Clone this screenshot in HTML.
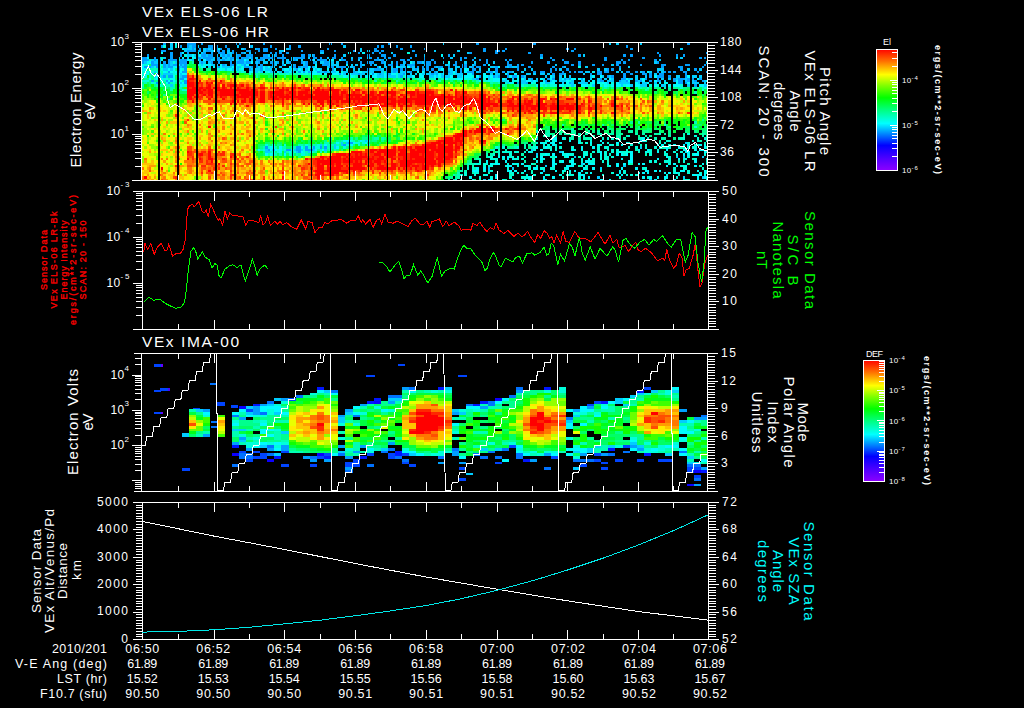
<!DOCTYPE html>
<html><head><meta charset="utf-8"><title>VEx ELS / IMA summary plot</title>
<style>
html,body{margin:0;padding:0;background:#000;}
body{width:1024px;height:708px;overflow:hidden;}
svg{display:block;}
text{font-family:"Liberation Sans",sans-serif;}
</style></head><body>
<svg width="1024" height="708" viewBox="0 0 1024 708">
<defs><linearGradient id="rb" x1="0" y1="0" x2="0" y2="1">
<stop offset="0" stop-color="#ff0000"/><stop offset="0.1" stop-color="#ff7000"/><stop offset="0.21" stop-color="#ffff00"/><stop offset="0.30" stop-color="#80ff00"/><stop offset="0.40" stop-color="#00ff00"/><stop offset="0.50" stop-color="#00ff80"/><stop offset="0.61" stop-color="#00ffff"/><stop offset="0.70" stop-color="#0080ff"/><stop offset="0.79" stop-color="#0000ff"/><stop offset="0.9" stop-color="#5000ff"/><stop offset="1" stop-color="#9000ff"/>
</linearGradient></defs>
<rect width="1024" height="708" fill="#000"/>
<g shape-rendering="crispEdges">
<path fill="#009fff" d="M142 57v7h2v-7zM144 57v4h3v-4zM144 66v2h3v-2zM147 54v3h2v-3zM147 59v2h2v-2zM149 66v2h2v-2zM151 61v5h3v-5zM151 80v2h3v-2zM154 57v4h2v-4zM154 64v2h2v-2zM156 64v4h2v-4zM156 73v2h2v-2zM156 82v2h2v-2zM158 59v2h3v-2zM161 45v3h2v-3zM161 50v2h2v-2zM163 43v2h3v-2zM163 50v2h3v-2zM163 61v7h3v-7zM163 75v3h3v-3zM166 80v2h2v-2zM168 48v2h2v-2zM168 59v9h2v-9zM168 71v2h2v-2zM168 75v3h2v-3zM168 82v2h2v-2zM170 52v9h3v-9zM170 66v2h3v-2zM170 75v3h3v-3zM170 80v2h3v-2zM173 59v2h2v-2zM173 64v2h2v-2zM175 59v2h2v-2zM175 64v2h2v-2zM177 61v3h3v-3zM177 66v5h3v-5zM180 45v3h2v-3zM180 52v5h2v-5zM180 59v7h2v-7zM180 78v2h2v-2zM182 59v5h2v-5zM182 66v2h2v-2zM182 71v2h2v-2zM182 75v5h2v-5zM184 59v14h3v-14zM184 75v3h3v-3zM184 80v4h3v-4zM187 43v5h2v-5zM187 50v4h2v-4zM189 43v2h3v-2zM189 50v2h3v-2zM192 43v9h2v-9zM194 43v5h2v-5zM194 50v2h2v-2zM196 50v2h3v-2zM196 57v2h3v-2zM199 48v2h2v-2zM199 57v4h2v-4zM201 43v2h2v-2zM201 54v3h2v-3zM201 61v3h2v-3zM203 52v7h3v-7zM206 48v4h2v-4zM206 57v4h2v-4zM208 45v3h3v-3zM208 50v2h3v-2zM208 54v7h3v-7zM211 45v5h2v-5zM211 52v7h2v-7zM211 61v3h2v-3zM215 45v7h3v-7zM215 57v4h3v-4zM218 50v4h2v-4zM218 57v7h2v-7zM218 66v2h2v-2zM220 48v2h2v-2zM220 52v2h2v-2zM222 50v7h3v-7zM222 59v2h3v-2zM222 64v2h3v-2zM225 45v3h2v-3zM225 57v2h2v-2zM227 48v2h3v-2zM227 54v3h3v-3zM230 57v9h2v-9zM232 50v4h2v-4zM232 57v2h2v-2zM232 64v2h2v-2zM234 43v2h3v-2zM234 52v2h3v-2zM237 54v5h2v-5zM237 61v3h2v-3zM239 43v2h2v-2zM239 54v3h2v-3zM239 59v5h2v-5zM241 52v2h3v-2zM241 57v7h3v-7zM244 48v2h2v-2zM244 57v2h2v-2zM244 64v4h2v-4zM246 50v2h3v-2zM246 54v5h3v-5zM246 61v3h3v-3zM246 66v2h3v-2zM249 45v3h2v-3zM249 50v2h2v-2zM249 54v3h2v-3zM249 61v3h2v-3zM249 68v3h2v-3zM251 54v5h2v-5zM251 66v2h2v-2zM253 52v2h3v-2zM253 61v3h3v-3zM256 48v2h2v-2zM256 59v2h2v-2zM256 64v4h2v-4zM258 48v4h2v-4zM258 59v5h2v-5zM260 57v4h3v-4zM260 64v7h3v-7zM263 43v2h2v-2zM263 48v4h2v-4zM263 54v5h2v-5zM265 48v4h3v-4zM265 54v5h3v-5zM265 146v3h3v-3zM268 57v2h2v-2zM268 149v2h2v-2zM270 45v3h2v-3zM270 52v2h2v-2zM270 57v2h2v-2zM270 61v3h2v-3zM270 66v2h2v-2zM272 57v2h3v-2zM272 61v5h3v-5zM275 48v2h2v-2zM275 52v5h2v-5zM277 57v2h2v-2zM277 61v3h2v-3zM279 52v2h3v-2zM279 57v2h3v-2zM282 54v7h2v-7zM282 64v2h2v-2zM284 57v2h2v-2zM286 52v2h3v-2zM286 149v2h3v-2zM289 45v5h2v-5zM289 61v3h2v-3zM289 149v2h2v-2zM291 66v2h3v-2zM294 57v4h2v-4zM294 64v4h2v-4zM296 57v2h2v-2zM296 68v3h2v-3zM296 146v5h2v-5zM298 45v3h3v-3zM298 57v2h3v-2zM298 66v2h3v-2zM298 71v2h3v-2zM298 146v7h3v-7zM301 50v2h2v-2zM301 54v5h2v-5zM301 61v3h2v-3zM303 54v5h2v-5zM303 66v2h2v-2zM303 71v2h2v-2zM305 61v7h3v-7zM305 146v5h3v-5zM308 54v3h2v-3zM308 71v2h2v-2zM308 149v2h2v-2zM310 59v2h3v-2zM310 66v2h3v-2zM310 149v2h3v-2zM313 54v5h2v-5zM313 61v3h2v-3zM313 146v3h2v-3zM315 57v2h2v-2zM317 59v2h3v-2zM317 71v2h3v-2zM320 50v2h2v-2zM320 57v4h2v-4zM320 146v3h2v-3zM322 50v2h2v-2zM322 59v2h2v-2zM322 64v2h2v-2zM324 59v7h3v-7zM324 71v2h3v-2zM324 146v3h3v-3zM327 48v2h2v-2zM327 61v5h2v-5zM329 43v2h3v-2zM329 66v2h3v-2zM332 57v2h2v-2zM332 66v5h2v-5zM334 50v2h2v-2zM334 54v5h2v-5zM339 66v2h2v-2zM339 73v2h2v-2zM341 43v2h2v-2zM341 57v4h2v-4zM341 66v5h2v-5zM343 59v2h3v-2zM343 66v2h3v-2zM343 144v2h3v-2zM346 61v3h2v-3zM348 142v2h3v-2zM351 59v2h2v-2zM351 142v2h2v-2zM353 50v2h2v-2zM353 66v2h2v-2zM353 71v2h2v-2zM358 52v2h2v-2zM358 57v2h2v-2zM358 73v2h2v-2zM360 61v7h2v-7zM367 54v3h3v-3zM367 61v3h3v-3zM367 68v3h3v-3zM370 57v2h2v-2zM370 61v5h2v-5zM372 52v2h2v-2zM372 61v3h2v-3zM372 73v2h2v-2zM374 48v4h3v-4zM374 59v2h3v-2zM374 68v3h3v-3zM377 45v3h2v-3zM377 50v2h2v-2zM377 57v4h2v-4zM377 66v5h2v-5zM379 52v2h2v-2zM379 68v3h2v-3zM379 73v2h2v-2zM381 45v3h3v-3zM381 50v2h3v-2zM381 54v3h3v-3zM381 59v5h3v-5zM384 54v5h2v-5zM386 68v5h2v-5zM388 43v2h3v-2zM388 57v2h3v-2zM388 64v2h3v-2zM388 73v2h3v-2zM391 64v2h2v-2zM393 54v3h3v-3zM393 68v5h3v-5zM396 45v3h2v-3zM396 61v5h2v-5zM396 68v3h2v-3zM400 48v2h3v-2zM400 59v2h3v-2zM400 64v2h3v-2zM400 68v3h3v-3zM400 75v3h3v-3zM403 59v2h2v-2zM403 73v2h2v-2zM405 61v3h2v-3zM405 66v5h2v-5zM407 59v2h3v-2zM407 64v2h3v-2zM410 45v3h2v-3zM410 57v2h2v-2zM410 64v4h2v-4zM410 71v2h2v-2zM412 50v2h3v-2zM412 64v2h3v-2zM415 54v3h2v-3zM415 68v3h2v-3zM417 61v3h2v-3zM417 66v2h2v-2zM419 61v3h3v-3zM422 66v5h2v-5zM424 48v2h2v-2zM424 57v7h2v-7zM426 61v10h3v-10zM429 61v5h2v-5zM431 59v2h3v-2zM431 68v3h3v-3zM431 73v2h3v-2zM434 61v3h2v-3zM434 66v2h2v-2zM434 71v2h2v-2zM436 73v2h2v-2zM438 66v2h3v-2zM441 66v2h2v-2zM443 57v2h2v-2zM448 54v3h2v-3zM448 66v2h2v-2zM448 71v2h2v-2zM453 64v2h2v-2zM455 61v5h2v-5zM460 57v4h2v-4zM460 68v5h2v-5zM462 64v4h2v-4zM464 57v2h3v-2zM464 64v4h3v-4zM467 71v2h2v-2zM469 52v2h3v-2zM469 71v2h3v-2zM472 59v2h2v-2zM472 66v9h2v-9zM474 64v2h2v-2zM474 68v3h2v-3zM476 43v2h3v-2zM476 66v2h3v-2zM476 78v2h3v-2zM479 59v2h2v-2zM479 66v2h2v-2zM479 71v2h2v-2zM479 75v3h2v-3zM481 75v3h2v-3zM483 48v4h3v-4zM483 64v2h3v-2zM486 59v5h2v-5zM488 71v2h2v-2zM490 71v2h3v-2zM493 75v3h2v-3zM495 50v4h3v-4zM495 66v7h3v-7zM498 50v2h2v-2zM498 75v3h2v-3zM500 45v3h2v-3zM500 59v2h2v-2zM500 71v2h2v-2zM502 50v2h3v-2zM502 71v2h3v-2zM505 48v2h2v-2zM505 59v2h2v-2zM505 66v2h2v-2zM507 61v5h2v-5zM507 73v5h2v-5zM509 59v2h3v-2zM509 64v4h3v-4zM509 71v2h3v-2zM512 75v3h2v-3zM514 75v3h3v-3zM517 64v7h2v-7zM517 82v2h2v-2zM521 64v2h3v-2zM521 75v3h3v-3zM526 82v2h2v-2zM528 52v2h3v-2zM528 66v2h3v-2zM531 61v3h2v-3zM531 78v2h2v-2zM533 43v2h3v-2zM533 71v2h3v-2zM538 66v2h2v-2zM540 54v3h3v-3zM540 71v2h3v-2zM543 71v2h2v-2zM545 80v2h2v-2zM547 61v3h3v-3zM547 78v2h3v-2zM550 57v2h2v-2zM550 68v5h2v-5zM552 59v2h3v-2zM552 66v2h3v-2zM552 73v2h3v-2zM552 78v2h3v-2zM555 68v3h2v-3zM557 73v2h2v-2zM559 73v2h3v-2zM562 59v2h2v-2zM562 66v2h2v-2zM562 71v4h2v-4zM564 61v3h2v-3zM564 78v2h2v-2zM566 48v2h3v-2zM566 61v3h3v-3zM566 68v3h3v-3zM569 71v2h2v-2zM569 78v2h2v-2zM569 82v2h2v-2zM571 50v2h3v-2zM571 64v2h3v-2zM574 48v2h2v-2zM574 71v2h2v-2zM576 73v2h2v-2zM576 78v2h2v-2zM578 54v3h3v-3zM578 61v5h3v-5zM578 71v2h3v-2zM581 71v2h2v-2zM581 78v2h2v-2zM590 73v2h2v-2zM592 64v2h3v-2zM597 71v4h3v-4zM600 71v4h2v-4zM600 78v4h2v-4zM602 64v2h2v-2zM602 80v2h2v-2zM604 57v4h3v-4zM604 71v2h3v-2zM607 68v5h2v-5zM607 75v3h2v-3zM611 68v3h3v-3zM611 75v3h3v-3zM614 68v3h2v-3zM616 61v5h3v-5zM619 61v3h2v-3zM619 66v2h2v-2zM619 80v2h2v-2zM621 59v2h2v-2zM621 78v2h2v-2zM623 54v3h3v-3zM623 61v3h3v-3zM623 73v7h3v-7zM626 45v3h2v-3zM626 71v2h2v-2zM626 80v2h2v-2zM628 59v2h2v-2zM628 71v2h2v-2zM630 48v2h3v-2zM630 54v3h3v-3zM630 73v2h3v-2zM633 61v3h2v-3zM633 75v3h2v-3zM633 84v3h2v-3zM635 71v2h3v-2zM635 80v2h3v-2zM640 64v2h2v-2zM640 80v2h2v-2zM642 57v2h3v-2zM642 71v4h3v-4zM645 73v2h2v-2zM645 78v2h2v-2zM649 73v5h3v-5zM649 80v2h3v-2zM652 68v3h2v-3zM652 78v6h2v-6zM654 59v2h3v-2zM657 52v2h2v-2zM657 61v3h2v-3zM657 71v2h2v-2zM657 75v7h2v-7zM659 54v3h2v-3zM659 73v5h2v-5zM659 80v2h2v-2zM661 64v4h3v-4zM661 73v5h3v-5zM664 64v2h2v-2zM664 71v2h2v-2zM668 71v2h3v-2zM668 75v3h3v-3zM671 48v2h2v-2zM671 59v2h2v-2zM671 66v2h2v-2zM673 71v2h3v-2zM673 78v4h3v-4zM676 54v3h2v-3zM678 66v2h2v-2zM678 78v6h2v-6zM680 66v5h3v-5zM680 78v6h3v-6zM683 54v3h2v-3zM683 71v2h2v-2zM683 78v2h2v-2zM685 64v2h2v-2zM685 71v7h2v-7zM685 82v2h2v-2zM687 43v2h3v-2zM687 64v2h3v-2zM687 78v4h3v-4zM690 75v3h2v-3zM692 78v2h2v-2zM694 68v3h3v-3zM694 80v2h3v-2zM694 84v3h3v-3zM697 71v2h2v-2zM699 57v2h3v-2zM699 78v2h3v-2zM702 66v2h2v-2zM702 80v2h2v-2zM704 57v2h2v-2zM704 64v2h2v-2zM706 52v2h1v-2zM706 71v2h1v-2z"/>
<path fill="#00cdff" d="M144 61v3h3v-3zM147 66v2h2v-2zM151 59v2h3v-2zM151 66v2h3v-2zM151 73v2h3v-2zM154 48v2h2v-2zM154 61v3h2v-3zM154 71v2h2v-2zM154 75v3h2v-3zM156 59v5h2v-5zM158 57v2h3v-2zM158 61v3h3v-3zM158 73v2h3v-2zM161 75v3h2v-3zM163 57v2h3v-2zM163 68v3h3v-3zM163 73v2h3v-2zM166 64v7h2v-7zM166 73v2h2v-2zM168 73v2h2v-2zM170 43v7h3v-7zM170 61v5h3v-5zM170 68v3h3v-3zM170 73v2h3v-2zM170 84v3h3v-3zM175 61v3h2v-3zM177 57v2h3v-2zM177 71v2h3v-2zM177 78v2h3v-2zM180 66v2h2v-2zM180 73v5h2v-5zM180 82v2h2v-2zM182 64v2h2v-2zM184 48v4h3v-4zM187 48v2h2v-2zM187 54v5h2v-5zM189 45v5h3v-5zM189 54v3h3v-3zM192 59v2h2v-2zM194 48v2h2v-2zM194 54v3h2v-3zM196 45v3h3v-3zM196 54v3h3v-3zM199 50v2h2v-2zM199 61v3h2v-3zM201 52v2h2v-2zM201 57v2h2v-2zM201 64v2h2v-2zM203 48v4h3v-4zM203 61v3h3v-3zM206 54v3h2v-3zM208 48v2h3v-2zM208 61v3h3v-3zM208 66v2h3v-2zM211 50v2h2v-2zM211 59v2h2v-2zM211 64v2h2v-2zM213 50v2h2v-2zM213 57v4h2v-4zM213 64v2h2v-2zM215 54v3h3v-3zM215 64v4h3v-4zM220 54v3h2v-3zM220 59v2h2v-2zM222 57v2h3v-2zM222 66v2h3v-2zM225 54v3h2v-3zM225 59v2h2v-2zM225 64v7h2v-7zM227 50v4h3v-4zM227 57v4h3v-4zM227 66v2h3v-2zM230 52v5h2v-5zM230 66v2h2v-2zM232 59v2h2v-2zM232 68v3h2v-3zM234 54v5h3v-5zM234 61v5h3v-5zM237 45v3h2v-3zM237 59v2h2v-2zM237 66v5h2v-5zM239 66v2h2v-2zM241 48v2h3v-2zM241 64v2h3v-2zM244 52v2h2v-2zM244 61v3h2v-3zM246 59v2h3v-2zM249 52v2h2v-2zM249 57v2h2v-2zM249 66v2h2v-2zM251 45v3h2v-3zM251 59v2h2v-2zM251 68v3h2v-3zM253 48v2h3v-2zM253 57v2h3v-2zM253 68v5h3v-5zM256 57v2h2v-2zM256 61v3h2v-3zM256 68v5h2v-5zM258 66v5h2v-5zM260 71v2h3v-2zM263 59v5h2v-5zM265 61v3h3v-3zM265 66v5h3v-5zM265 149v4h3v-4zM268 54v3h2v-3zM268 59v2h2v-2zM268 68v3h2v-3zM268 151v2h2v-2zM270 68v5h2v-5zM272 54v3h3v-3zM272 66v2h3v-2zM272 71v2h3v-2zM272 149v2h3v-2zM275 61v5h2v-5zM275 68v3h2v-3zM279 50v2h3v-2zM279 66v2h3v-2zM279 71v2h3v-2zM282 50v2h2v-2zM282 61v3h2v-3zM282 68v3h2v-3zM284 71v2h2v-2zM284 151v2h2v-2zM286 48v2h3v-2zM286 59v5h3v-5zM286 71v2h3v-2zM289 68v3h2v-3zM291 57v4h3v-4zM291 64v2h3v-2zM291 71v2h3v-2zM294 68v3h2v-3zM294 149v2h2v-2zM296 59v2h2v-2zM296 151v2h2v-2zM301 59v2h2v-2zM301 66v5h2v-5zM301 149v2h2v-2zM303 61v5h2v-5zM305 68v3h3v-3zM308 57v2h2v-2zM308 151v2h2v-2zM310 54v3h3v-3zM310 71v2h3v-2zM313 66v2h2v-2zM313 149v2h2v-2zM315 61v3h2v-3zM315 68v3h2v-3zM320 52v2h2v-2zM320 61v3h2v-3zM320 68v5h2v-5zM320 144v2h2v-2zM322 52v2h2v-2zM322 61v3h2v-3zM322 71v2h2v-2zM324 149v2h3v-2zM327 57v2h2v-2zM327 66v2h2v-2zM327 71v2h2v-2zM329 61v5h3v-5zM329 71v2h3v-2zM332 61v5h2v-5zM332 71v2h2v-2zM334 64v2h2v-2zM334 71v2h2v-2zM334 144v5h2v-5zM336 61v7h3v-7zM341 142v4h2v-4zM343 45v3h3v-3zM343 54v3h3v-3zM343 71v4h3v-4zM346 71v2h2v-2zM346 142v2h2v-2zM348 66v2h3v-2zM351 57v2h2v-2zM351 64v4h2v-4zM351 73v2h2v-2zM353 68v3h2v-3zM353 73v2h2v-2zM355 64v2h3v-2zM355 71v4h3v-4zM358 59v2h2v-2zM358 68v3h2v-3zM360 48v4h2v-4zM360 57v2h2v-2zM360 73v5h2v-5zM362 64v2h3v-2zM362 71v4h3v-4zM365 71v2h2v-2zM365 140v2h2v-2zM367 50v2h3v-2zM367 57v2h3v-2zM367 71v4h3v-4zM370 68v5h2v-5zM372 68v5h2v-5zM374 64v2h3v-2zM377 73v5h2v-5zM379 59v2h2v-2zM379 75v3h2v-3zM381 68v10h3v-10zM384 61v7h2v-7zM386 59v2h2v-2zM386 66v2h2v-2zM386 73v5h2v-5zM388 75v3h3v-3zM391 52v2h2v-2zM391 61v3h2v-3zM391 66v7h2v-7zM391 75v3h2v-3zM393 75v3h3v-3zM396 71v2h2v-2zM398 66v2h2v-2zM398 73v5h2v-5zM400 66v2h3v-2zM400 71v4h3v-4zM403 61v7h2v-7zM403 71v2h2v-2zM405 71v2h2v-2zM407 71v2h3v-2zM407 75v3h3v-3zM410 73v5h2v-5zM412 61v3h3v-3zM412 66v5h3v-5zM415 73v2h2v-2zM417 68v3h2v-3zM422 61v3h2v-3zM422 73v2h2v-2zM424 54v3h2v-3zM424 64v2h2v-2zM424 68v7h2v-7zM426 73v2h3v-2zM429 71v7h2v-7zM431 75v3h3v-3zM434 50v2h2v-2zM434 73v2h2v-2zM436 66v2h2v-2zM436 71v2h2v-2zM436 75v3h2v-3zM438 68v3h3v-3zM441 73v5h2v-5zM443 43v2h2v-2zM443 61v3h2v-3zM443 71v2h2v-2zM443 75v3h2v-3zM445 64v2h3v-2zM445 75v3h3v-3zM448 64v2h2v-2zM448 68v3h2v-3zM448 73v5h2v-5zM450 57v2h3v-2zM450 68v7h3v-7zM453 54v3h2v-3zM455 66v9h2v-9zM457 50v2h3v-2zM457 66v2h3v-2zM457 73v5h3v-5zM460 73v5h2v-5zM462 73v2h2v-2zM464 61v3h3v-3zM467 52v2h2v-2zM469 66v2h3v-2zM472 64v2h2v-2zM472 78v2h2v-2zM474 57v2h2v-2zM474 61v3h2v-3zM474 78v2h2v-2zM476 71v2h3v-2zM479 68v3h2v-3zM481 52v2h2v-2zM481 59v5h2v-5zM481 73v2h2v-2zM483 179v1h3v-1zM486 71v2h2v-2zM488 75v5h2v-5zM488 167v5h2v-5zM488 179v1h2v-1zM490 66v2h3v-2zM490 73v2h3v-2zM493 61v3h2v-3zM493 66v2h2v-2zM495 73v5h3v-5zM498 73v2h2v-2zM500 75v3h2v-3zM500 80v2h2v-2zM502 80v2h3v-2zM505 78v4h2v-4zM507 66v2h2v-2zM507 71v2h2v-2zM507 82v2h2v-2zM512 66v2h2v-2zM512 71v2h2v-2zM512 78v2h2v-2zM512 167v3h2v-3zM514 66v2h3v-2zM519 78v2h2v-2zM521 71v2h3v-2zM521 80v4h3v-4zM524 68v3h2v-3zM524 75v9h2v-9zM526 73v2h2v-2zM528 73v2h3v-2zM528 78v2h3v-2zM531 68v3h2v-3zM531 80v2h2v-2zM531 149v2h2v-2zM533 73v2h3v-2zM536 78v4h2v-4zM536 153v3h2v-3zM538 57v2h2v-2zM538 75v3h2v-3zM538 80v4h2v-4zM538 176v3h2v-3zM540 57v2h3v-2zM540 73v2h3v-2zM543 73v2h2v-2zM543 78v2h2v-2zM543 170v2h2v-2zM545 75v3h2v-3zM545 82v2h2v-2zM545 165v2h2v-2zM547 73v2h3v-2zM547 82v2h3v-2zM550 80v2h2v-2zM552 75v3h3v-3zM555 64v2h2v-2zM555 80v2h2v-2zM557 75v5h2v-5zM557 82v2h2v-2zM559 68v3h3v-3zM559 75v7h3v-7zM559 151v2h3v-2zM562 80v4h2v-4zM564 66v2h2v-2zM564 73v2h2v-2zM564 80v2h2v-2zM566 78v2h3v-2zM569 75v3h2v-3zM571 80v7h3v-7zM574 156v2h2v-2zM574 179v1h2v-1zM576 68v3h2v-3zM576 75v3h2v-3zM576 82v2h2v-2zM578 82v2h3v-2zM581 80v4h2v-4zM581 163v2h2v-2zM583 54v3h2v-3zM583 73v2h2v-2zM583 80v4h2v-4zM585 66v2h3v-2zM585 71v2h3v-2zM585 82v2h3v-2zM588 71v2h2v-2zM588 80v2h2v-2zM590 75v5h2v-5zM592 84v3h3v-3zM595 75v3h2v-3zM595 84v3h2v-3zM597 68v3h3v-3zM597 78v4h3v-4zM597 176v3h3v-3zM600 167v3h2v-3zM602 75v3h2v-3zM604 68v3h3v-3zM604 78v2h3v-2zM607 80v4h2v-4zM609 43v2h2v-2zM609 75v3h2v-3zM609 80v2h2v-2zM611 64v2h3v-2zM611 78v4h3v-4zM616 43v2h3v-2zM616 71v2h3v-2zM619 68v3h2v-3zM619 82v2h2v-2zM621 71v2h2v-2zM621 80v7h2v-7zM623 80v4h3v-4zM623 165v2h3v-2zM623 179v1h3v-1zM626 82v2h2v-2zM628 66v2h2v-2zM628 78v2h2v-2zM628 82v2h2v-2zM630 78v2h3v-2zM630 84v3h3v-3zM633 59v2h2v-2zM633 82v2h2v-2zM635 75v5h3v-5zM638 80v4h2v-4zM640 43v2h2v-2zM640 71v2h2v-2zM640 78v2h2v-2zM640 84v3h2v-3zM640 140v2h2v-2zM640 146v3h2v-3zM642 82v5h3v-5zM645 75v3h2v-3zM645 82v5h2v-5zM649 71v2h3v-2zM649 179v1h3v-1zM654 61v3h3v-3zM654 73v2h3v-2zM654 82v2h3v-2zM657 68v3h2v-3zM659 59v2h2v-2zM659 68v3h2v-3zM661 68v5h3v-5zM661 78v2h3v-2zM661 84v3h3v-3zM664 80v2h2v-2zM664 84v3h2v-3zM668 78v2h3v-2zM671 82v5h2v-5zM671 174v2h2v-2zM671 179v1h2v-1zM676 57v2h2v-2zM676 75v5h2v-5zM676 156v2h2v-2zM678 75v3h2v-3zM680 48v2h3v-2zM680 57v2h3v-2zM683 156v2h2v-2zM683 176v3h2v-3zM685 78v4h2v-4zM685 142v2h2v-2zM687 68v3h3v-3zM687 84v3h3v-3zM690 78v2h2v-2zM692 75v3h2v-3zM692 80v4h2v-4zM694 75v3h3v-3zM694 82v2h3v-2zM697 82v2h2v-2zM699 68v3h3v-3zM699 75v3h3v-3zM702 156v2h2v-2zM702 176v3h2v-3zM704 80v7h2v-7zM706 61v3h1v-3zM706 84v3h1v-3z"/>
<path fill="#00fbff" d="M142 64v7h2v-7zM144 68v3h3v-3zM144 75v3h3v-3zM147 57v2h2v-2zM147 61v3h2v-3zM147 71v4h2v-4zM149 61v3h2v-3zM149 78v2h2v-2zM156 75v5h2v-5zM158 64v4h3v-4zM161 52v2h2v-2zM161 78v4h2v-4zM163 71v2h3v-2zM166 82v2h2v-2zM168 68v3h2v-3zM168 80v2h2v-2zM170 71v2h3v-2zM170 78v2h3v-2zM173 66v5h2v-5zM173 75v7h2v-7zM175 43v2h2v-2zM175 66v2h2v-2zM175 71v2h2v-2zM177 64v2h3v-2zM177 73v2h3v-2zM180 68v5h2v-5zM180 80v2h2v-2zM180 84v3h2v-3zM182 48v2h2v-2zM182 52v2h2v-2zM182 57v2h2v-2zM182 73v2h2v-2zM182 82v2h2v-2zM184 73v2h3v-2zM184 78v2h3v-2zM187 59v2h2v-2zM189 59v2h3v-2zM192 54v5h2v-5zM194 57v2h2v-2zM196 52v2h3v-2zM196 59v2h3v-2zM199 54v3h2v-3zM201 66v2h2v-2zM203 59v2h3v-2zM203 66v2h3v-2zM206 64v2h2v-2zM208 64v2h3v-2zM213 66v2h2v-2zM218 48v2h2v-2zM220 64v7h2v-7zM227 68v3h3v-3zM230 68v3h2v-3zM232 66v2h2v-2zM234 59v2h3v-2zM234 66v5h3v-5zM237 64v2h2v-2zM241 68v3h3v-3zM244 59v2h2v-2zM246 64v2h3v-2zM249 71v2h2v-2zM251 61v3h2v-3zM251 71v2h2v-2zM258 149v2h2v-2zM263 66v5h2v-5zM265 153v3h3v-3zM268 66v2h2v-2zM268 71v2h2v-2zM270 146v5h2v-5zM270 153v3h2v-3zM272 59v2h3v-2zM272 146v3h3v-3zM275 149v2h2v-2zM277 71v2h2v-2zM279 146v7h3v-7zM284 64v2h2v-2zM284 68v3h2v-3zM284 153v3h2v-3zM286 68v3h3v-3zM289 66v2h2v-2zM289 71v2h2v-2zM289 151v2h2v-2zM291 68v3h3v-3zM298 68v3h3v-3zM301 71v2h2v-2zM301 146v3h2v-3zM301 151v2h2v-2zM305 71v2h3v-2zM308 66v5h2v-5zM310 73v2h3v-2zM313 59v2h2v-2zM313 68v7h2v-7zM315 64v4h2v-4zM315 71v4h2v-4zM315 149v2h2v-2zM317 68v3h3v-3zM320 73v2h2v-2zM322 149v2h2v-2zM324 73v2h3v-2zM324 144v2h3v-2zM327 68v3h2v-3zM329 59v2h3v-2zM332 59v2h2v-2zM332 73v2h2v-2zM334 68v3h2v-3zM334 73v2h2v-2zM336 71v4h3v-4zM336 142v2h3v-2zM336 146v3h3v-3zM339 59v2h2v-2zM341 73v2h2v-2zM343 75v3h3v-3zM343 140v2h3v-2zM346 64v2h2v-2zM346 68v3h2v-3zM346 140v2h2v-2zM348 52v2h3v-2zM348 73v2h3v-2zM348 140v2h3v-2zM351 75v3h2v-3zM351 144v2h2v-2zM353 142v2h2v-2zM358 71v2h2v-2zM360 71v2h2v-2zM360 140v2h2v-2zM362 52v2h3v-2zM365 75v3h2v-3zM365 142v2h2v-2zM367 75v3h3v-3zM370 73v2h2v-2zM372 75v3h2v-3zM374 73v5h3v-5zM379 66v2h2v-2zM384 73v5h2v-5zM391 73v2h2v-2zM393 73v2h3v-2zM396 66v2h2v-2zM405 73v5h2v-5zM407 66v2h3v-2zM410 61v3h2v-3zM412 75v3h3v-3zM417 71v2h2v-2zM419 73v5h3v-5zM422 71v2h2v-2zM422 75v3h2v-3zM434 75v3h2v-3zM438 73v5h3v-5zM441 54v3h2v-3zM441 68v3h2v-3zM443 68v3h2v-3zM443 73v2h2v-2zM445 78v2h3v-2zM448 61v3h2v-3zM450 75v3h3v-3zM453 71v2h2v-2zM455 179v1h2v-1zM457 78v2h3v-2zM460 78v2h2v-2zM462 75v5h2v-5zM464 68v5h3v-5zM464 75v3h3v-3zM467 68v3h2v-3zM467 73v5h2v-5zM469 73v5h3v-5zM469 176v3h3v-3zM472 170v2h2v-2zM472 179v1h2v-1zM474 170v2h2v-2zM476 75v3h3v-3zM476 167v5h3v-5zM479 80v2h2v-2zM481 80v2h2v-2zM481 163v2h2v-2zM481 167v3h2v-3zM483 73v5h3v-5zM483 167v3h3v-3zM486 75v3h2v-3zM486 160v3h2v-3zM486 174v2h2v-2zM488 64v2h2v-2zM488 68v3h2v-3zM488 80v2h2v-2zM490 75v3h3v-3zM490 163v2h3v-2zM490 179v1h3v-1zM493 71v2h2v-2zM493 78v4h2v-4zM495 78v4h3v-4zM495 163v2h3v-2zM495 174v5h3v-5zM498 66v2h2v-2zM498 78v4h2v-4zM498 156v2h2v-2zM498 163v2h2v-2zM500 78v2h2v-2zM500 165v5h2v-5zM502 78v2h3v-2zM502 156v2h3v-2zM505 73v2h2v-2zM505 160v3h2v-3zM507 80v2h2v-2zM507 156v4h2v-4zM507 165v2h2v-2zM507 170v2h2v-2zM509 75v3h3v-3zM509 82v2h3v-2zM509 165v2h3v-2zM509 170v2h3v-2zM512 80v4h2v-4zM512 158v2h2v-2zM512 163v2h2v-2zM512 179v1h2v-1zM514 73v2h3v-2zM514 170v2h3v-2zM517 75v7h2v-7zM517 163v2h2v-2zM519 82v2h2v-2zM519 153v3h2v-3zM519 163v2h2v-2zM521 78v2h3v-2zM521 163v2h3v-2zM524 170v2h2v-2zM524 179v1h2v-1zM526 80v2h2v-2zM526 165v2h2v-2zM528 80v2h3v-2zM528 151v2h3v-2zM528 176v3h3v-3zM531 82v2h2v-2zM533 80v2h3v-2zM533 167v3h3v-3zM536 84v3h2v-3zM536 146v3h2v-3zM536 160v3h2v-3zM536 167v3h2v-3zM538 78v2h2v-2zM538 144v5h2v-5zM538 156v2h2v-2zM538 170v2h2v-2zM538 179v1h2v-1zM540 78v2h3v-2zM540 82v2h3v-2zM540 142v2h3v-2zM540 149v2h3v-2zM540 156v4h3v-4zM540 172v2h3v-2zM543 80v4h2v-4zM543 176v4h2v-4zM545 142v2h2v-2zM545 146v3h2v-3zM545 153v3h2v-3zM545 179v1h2v-1zM547 140v2h3v-2zM550 75v5h2v-5zM550 82v2h2v-2zM550 142v2h2v-2zM552 80v4h3v-4zM552 137v3h3v-3zM552 142v4h3v-4zM552 153v3h3v-3zM552 160v7h3v-7zM552 176v3h3v-3zM555 137v5h2v-5zM555 156v2h2v-2zM555 170v2h2v-2zM557 80v2h2v-2zM557 151v2h2v-2zM557 160v3h2v-3zM557 170v4h2v-4zM559 84v3h3v-3zM559 142v2h3v-2zM559 174v2h3v-2zM562 78v2h2v-2zM562 84v3h2v-3zM562 137v3h2v-3zM562 151v5h2v-5zM562 160v3h2v-3zM562 170v2h2v-2zM564 75v3h2v-3zM566 80v4h3v-4zM566 153v5h3v-5zM566 165v5h3v-5zM569 140v2h2v-2zM569 165v2h2v-2zM569 170v2h2v-2zM571 78v2h3v-2zM571 149v2h3v-2zM571 160v7h3v-7zM574 78v2h2v-2zM574 170v2h2v-2zM576 84v3h2v-3zM576 142v2h2v-2zM576 149v2h2v-2zM576 163v2h2v-2zM576 170v2h2v-2zM576 176v3h2v-3zM578 78v2h3v-2zM578 142v2h3v-2zM578 172v4h3v-4zM581 84v3h2v-3zM581 146v5h2v-5zM581 170v2h2v-2zM581 174v2h2v-2zM583 78v2h2v-2zM583 84v3h2v-3zM583 156v2h2v-2zM583 163v2h2v-2zM583 167v3h2v-3zM583 174v5h2v-5zM585 84v3h3v-3zM585 160v3h3v-3zM588 160v5h2v-5zM588 176v3h2v-3zM590 142v2h2v-2zM590 156v2h2v-2zM590 163v2h2v-2zM590 172v2h2v-2zM592 71v2h3v-2zM592 75v3h3v-3zM592 80v4h3v-4zM592 146v3h3v-3zM592 163v2h3v-2zM592 167v3h3v-3zM595 80v4h2v-4zM595 144v2h2v-2zM595 160v3h2v-3zM595 165v2h2v-2zM595 172v2h2v-2zM595 176v3h2v-3zM597 82v2h3v-2zM597 144v2h3v-2zM600 75v3h2v-3zM600 140v2h2v-2zM600 151v5h2v-5zM600 179v1h2v-1zM602 82v2h2v-2zM602 142v2h2v-2zM602 179v1h2v-1zM604 82v5h3v-5zM607 163v2h2v-2zM609 78v2h2v-2zM609 144v2h2v-2zM609 165v2h2v-2zM609 179v1h2v-1zM611 84v3h3v-3zM614 78v9h2v-9zM614 160v3h2v-3zM614 165v2h2v-2zM616 82v5h3v-5zM616 142v2h3v-2zM616 153v3h3v-3zM616 163v4h3v-4zM616 174v2h3v-2zM619 84v3h2v-3zM619 151v2h2v-2zM619 170v4h2v-4zM621 144v2h2v-2zM621 153v3h2v-3zM621 158v2h2v-2zM621 167v3h2v-3zM621 174v2h2v-2zM623 163v2h3v-2zM626 78v2h2v-2zM626 84v3h2v-3zM626 142v2h2v-2zM626 153v3h2v-3zM628 80v2h2v-2zM628 84v3h2v-3zM628 160v3h2v-3zM630 151v12h3v-12zM633 78v4h2v-4zM633 144v7h2v-7zM633 163v4h2v-4zM635 82v5h3v-5zM635 167v3h3v-3zM638 84v3h2v-3zM638 149v2h2v-2zM638 163v2h2v-2zM638 172v2h2v-2zM638 179v1h2v-1zM642 78v4h3v-4zM642 137v5h3v-5zM642 163v2h3v-2zM642 172v2h3v-2zM642 176v3h3v-3zM645 151v2h2v-2zM645 170v2h2v-2zM647 71v2h2v-2zM647 82v2h2v-2zM647 149v2h2v-2zM647 170v4h2v-4zM649 176v3h3v-3zM652 73v2h2v-2zM652 144v2h2v-2zM652 156v2h2v-2zM652 167v3h2v-3zM654 75v3h3v-3zM654 80v2h3v-2zM654 84v3h3v-3zM654 170v2h3v-2zM654 179v1h3v-1zM657 144v2h2v-2zM657 151v2h2v-2zM657 158v2h2v-2zM657 176v3h2v-3zM659 82v2h2v-2zM659 146v3h2v-3zM659 170v2h2v-2zM661 144v2h3v-2zM664 172v2h2v-2zM664 176v3h2v-3zM666 82v2h2v-2zM666 146v5h2v-5zM666 156v2h2v-2zM666 165v2h2v-2zM666 176v3h2v-3zM668 84v3h3v-3zM668 172v2h3v-2zM671 144v2h2v-2zM671 149v4h2v-4zM671 165v2h2v-2zM673 84v3h3v-3zM673 144v2h3v-2zM673 163v2h3v-2zM673 179v1h3v-1zM676 80v7h2v-7zM676 165v2h2v-2zM676 172v2h2v-2zM678 84v3h2v-3zM678 146v3h2v-3zM678 158v2h2v-2zM680 170v2h3v-2zM683 144v2h2v-2zM683 149v2h2v-2zM683 153v3h2v-3zM683 170v2h2v-2zM685 149v4h2v-4zM685 165v2h2v-2zM687 75v3h3v-3zM687 82v2h3v-2zM687 144v2h3v-2zM687 151v5h3v-5zM690 151v2h2v-2zM692 174v2h2v-2zM694 149v2h3v-2zM694 153v3h3v-3zM694 160v3h3v-3zM694 165v2h3v-2zM694 174v2h3v-2zM697 78v2h2v-2zM697 153v3h2v-3zM697 170v2h2v-2zM697 174v6h2v-6zM699 84v3h3v-3zM699 144v2h3v-2zM699 149v2h3v-2zM699 174v2h3v-2zM702 84v3h2v-3zM702 149v2h2v-2zM702 163v2h2v-2zM704 144v5h2v-5zM704 151v2h2v-2zM704 170v9h2v-9zM706 80v2h1v-2zM706 176v4h1v-4z"/>
<path fill="#00ffdb" d="M142 71v7h2v-7zM142 80v2h2v-2zM144 64v2h3v-2zM144 71v4h3v-4zM144 80v2h3v-2zM147 64v2h2v-2zM147 80v2h2v-2zM151 71v2h3v-2zM151 82v2h3v-2zM154 66v2h2v-2zM154 78v2h2v-2zM154 82v2h2v-2zM156 71v2h2v-2zM158 71v2h3v-2zM158 75v3h3v-3zM158 84v3h3v-3zM161 59v2h2v-2zM161 64v2h2v-2zM161 68v3h2v-3zM161 82v2h2v-2zM163 45v3h3v-3zM163 78v2h3v-2zM166 71v2h2v-2zM166 78v2h2v-2zM173 61v3h2v-3zM173 71v4h2v-4zM173 82v2h2v-2zM175 45v3h2v-3zM175 73v2h2v-2zM177 59v2h3v-2zM177 75v3h3v-3zM177 82v2h3v-2zM182 68v3h2v-3zM182 84v3h2v-3zM182 89v2h2v-2zM184 54v3h3v-3zM184 84v3h3v-3zM184 89v2h3v-2zM196 64v2h3v-2zM199 64v2h2v-2zM203 64v2h3v-2zM215 68v3h3v-3zM218 68v3h2v-3zM222 68v3h3v-3zM237 71v2h2v-2zM239 64v2h2v-2zM239 68v3h2v-3zM241 66v2h3v-2zM241 71v2h3v-2zM249 73v2h2v-2zM258 71v2h2v-2zM263 149v2h2v-2zM265 71v2h3v-2zM265 144v2h3v-2zM268 146v3h2v-3zM272 144v2h3v-2zM272 151v5h3v-5zM277 149v4h2v-4zM284 144v2h2v-2zM284 149v2h2v-2zM286 73v2h3v-2zM289 153v3h2v-3zM291 149v2h3v-2zM294 151v2h2v-2zM296 71v2h2v-2zM298 73v2h3v-2zM301 73v2h2v-2zM301 153v3h2v-3zM303 73v2h2v-2zM303 149v7h2v-7zM305 73v2h3v-2zM305 144v2h3v-2zM308 146v3h2v-3zM310 146v3h3v-3zM310 151v2h3v-2zM315 146v3h2v-3zM317 73v2h3v-2zM317 144v5h3v-5zM320 151v2h2v-2zM341 71v2h2v-2zM343 146v3h3v-3zM346 75v3h2v-3zM346 144v2h2v-2zM348 144v2h3v-2zM351 140v2h2v-2zM353 75v3h2v-3zM355 142v2h3v-2zM358 142v4h2v-4zM362 140v4h3v-4zM367 140v2h3v-2zM367 144v2h3v-2zM396 73v5h2v-5zM407 52v2h3v-2zM422 78v2h2v-2zM434 78v2h2v-2zM450 78v2h3v-2zM453 73v2h2v-2zM453 78v2h2v-2zM455 78v2h2v-2zM460 174v2h2v-2zM460 179v1h2v-1zM462 174v2h2v-2zM464 78v2h3v-2zM464 172v4h3v-4zM467 78v2h2v-2zM467 167v3h2v-3zM469 78v2h3v-2zM472 75v3h2v-3zM472 167v3h2v-3zM474 163v2h2v-2zM474 172v4h2v-4zM476 163v2h3v-2zM476 172v2h3v-2zM479 160v5h2v-5zM479 176v3h2v-3zM481 78v2h2v-2zM481 160v3h2v-3zM481 172v2h2v-2zM483 78v4h3v-4zM483 163v4h3v-4zM483 170v2h3v-2zM483 174v2h3v-2zM486 80v2h2v-2zM486 163v2h2v-2zM488 156v2h2v-2zM488 165v2h2v-2zM490 78v4h3v-4zM490 156v4h3v-4zM490 165v2h3v-2zM490 170v2h3v-2zM490 176v3h3v-3zM493 149v2h2v-2zM493 153v3h2v-3zM493 158v2h2v-2zM493 163v2h2v-2zM495 146v3h3v-3zM495 158v5h3v-5zM498 151v5h2v-5zM500 151v2h2v-2zM500 160v5h2v-5zM500 172v2h2v-2zM500 176v3h2v-3zM502 146v3h3v-3zM502 151v2h3v-2zM502 158v2h3v-2zM502 179v1h3v-1zM505 82v2h2v-2zM505 151v2h2v-2zM505 165v2h2v-2zM507 151v2h2v-2zM507 163v2h2v-2zM507 167v3h2v-3zM509 151v7h3v-7zM509 172v2h3v-2zM509 176v3h3v-3zM512 156v2h2v-2zM512 172v4h2v-4zM514 80v2h3v-2zM514 151v2h3v-2zM514 158v2h3v-2zM514 163v2h3v-2zM517 146v3h2v-3zM517 151v2h2v-2zM517 156v4h2v-4zM517 165v2h2v-2zM517 172v2h2v-2zM519 73v2h2v-2zM519 146v5h2v-5zM519 156v2h2v-2zM519 165v2h2v-2zM519 170v4h2v-4zM519 179v1h2v-1zM521 84v3h3v-3zM521 158v2h3v-2zM521 172v2h3v-2zM521 176v3h3v-3zM524 151v2h2v-2zM524 165v2h2v-2zM524 176v3h2v-3zM526 149v2h2v-2zM526 174v5h2v-5zM528 165v5h3v-5zM528 179v1h3v-1zM531 151v2h2v-2zM531 163v2h2v-2zM531 172v2h2v-2zM531 176v4h2v-4zM533 82v2h3v-2zM533 146v5h3v-5zM533 158v2h3v-2zM533 174v2h3v-2zM536 130v3h2v-3zM536 137v3h2v-3zM536 142v2h2v-2zM536 156v2h2v-2zM536 165v2h2v-2zM538 174v2h2v-2zM540 84v3h3v-3zM540 153v3h3v-3zM540 160v3h3v-3zM540 167v3h3v-3zM543 142v7h2v-7zM543 153v3h2v-3zM543 158v2h2v-2zM543 167v3h2v-3zM545 84v3h2v-3zM545 174v2h2v-2zM547 144v5h3v-5zM547 153v3h3v-3zM547 174v2h3v-2zM550 84v3h2v-3zM550 146v5h2v-5zM550 156v2h2v-2zM550 167v3h2v-3zM552 84v3h3v-3zM552 135v2h3v-2zM552 140v2h3v-2zM552 158v2h3v-2zM552 167v3h3v-3zM555 84v3h2v-3zM555 144v7h2v-7zM555 163v2h2v-2zM557 149v2h2v-2zM557 165v2h2v-2zM559 146v3h3v-3zM559 160v3h3v-3zM562 176v3h2v-3zM564 137v3h2v-3zM564 153v5h2v-5zM564 167v5h2v-5zM566 84v3h3v-3zM566 174v2h3v-2zM569 80v2h2v-2zM569 84v3h2v-3zM569 153v3h2v-3zM569 160v3h2v-3zM569 172v4h2v-4zM571 146v3h3v-3zM571 153v3h3v-3zM571 158v2h3v-2zM571 174v2h3v-2zM574 84v3h2v-3zM574 149v2h2v-2zM574 163v2h2v-2zM576 80v2h2v-2zM576 133v2h2v-2zM576 137v3h2v-3zM576 165v5h2v-5zM578 66v2h3v-2zM578 140v2h3v-2zM578 176v4h3v-4zM581 158v5h2v-5zM581 165v2h2v-2zM581 179v1h2v-1zM583 151v5h2v-5zM583 179v1h2v-1zM585 142v2h3v-2zM585 151v5h3v-5zM585 165v5h3v-5zM585 172v2h3v-2zM588 158v2h2v-2zM590 82v5h2v-5zM590 137v5h2v-5zM590 144v2h2v-2zM590 160v3h2v-3zM592 151v2h3v-2zM592 158v5h3v-5zM595 137v3h2v-3zM595 151v5h2v-5zM595 170v2h2v-2zM595 179v1h2v-1zM597 146v7h3v-7zM600 82v5h2v-5zM600 144v2h2v-2zM600 156v4h2v-4zM602 137v3h2v-3zM602 160v3h2v-3zM602 174v2h2v-2zM604 146v3h3v-3zM604 151v9h3v-9zM607 84v3h2v-3zM607 137v3h2v-3zM607 142v2h2v-2zM607 146v5h2v-5zM607 156v7h2v-7zM609 153v3h2v-3zM611 82v2h3v-2zM611 137v3h3v-3zM611 144v2h3v-2zM611 149v4h3v-4zM611 156v2h3v-2zM611 172v2h3v-2zM614 140v2h2v-2zM614 167v3h2v-3zM614 174v2h2v-2zM616 144v2h3v-2zM616 149v4h3v-4zM619 140v2h2v-2zM619 176v3h2v-3zM621 151v2h2v-2zM623 84v3h3v-3zM623 151v5h3v-5zM623 170v4h3v-4zM626 149v4h2v-4zM626 174v2h2v-2zM628 135v2h2v-2zM628 142v2h2v-2zM628 146v3h2v-3zM628 163v2h2v-2zM630 144v2h3v-2zM630 174v2h3v-2zM633 151v5h2v-5zM633 158v2h2v-2zM633 170v4h2v-4zM633 176v3h2v-3zM635 146v3h3v-3zM635 174v2h3v-2zM638 142v2h2v-2zM640 137v3h2v-3zM642 167v3h3v-3zM645 140v2h2v-2zM645 144v5h2v-5zM645 167v3h2v-3zM647 87v2h2v-2zM647 137v3h2v-3zM647 151v2h2v-2zM647 176v3h2v-3zM649 84v3h3v-3zM649 149v7h3v-7zM649 160v3h3v-3zM652 84v3h2v-3zM652 140v4h2v-4zM652 146v3h2v-3zM652 153v3h2v-3zM652 172v2h2v-2zM654 146v3h3v-3zM654 160v3h3v-3zM657 84v3h2v-3zM657 149v2h2v-2zM659 133v2h2v-2zM659 142v2h2v-2zM664 82v2h2v-2zM664 124v2h2v-2zM664 142v2h2v-2zM664 146v3h2v-3zM664 151v5h2v-5zM664 160v3h2v-3zM664 179v1h2v-1zM666 140v2h2v-2zM666 153v3h2v-3zM666 160v3h2v-3zM666 174v2h2v-2zM668 140v2h3v-2zM668 144v5h3v-5zM668 156v9h3v-9zM671 137v3h2v-3zM671 146v3h2v-3zM671 158v2h2v-2zM671 170v2h2v-2zM673 151v2h3v-2zM673 167v7h3v-7zM676 149v2h2v-2zM676 153v3h2v-3zM676 176v3h2v-3zM678 172v4h2v-4zM680 84v5h3v-5zM680 151v2h3v-2zM680 165v2h3v-2zM683 137v3h2v-3zM683 146v3h2v-3zM683 158v5h2v-5zM683 165v5h2v-5zM683 179v1h2v-1zM685 158v2h2v-2zM685 167v3h2v-3zM685 179v1h2v-1zM687 133v2h3v-2zM687 142v2h3v-2zM687 146v3h3v-3zM687 156v2h3v-2zM687 170v4h3v-4zM687 179v1h3v-1zM690 149v2h2v-2zM690 163v2h2v-2zM690 167v3h2v-3zM692 140v2h2v-2zM692 146v3h2v-3zM692 153v3h2v-3zM694 126v2h3v-2zM694 135v2h3v-2zM694 144v5h3v-5zM694 158v2h3v-2zM697 87v2h2v-2zM697 137v5h2v-5zM697 144v2h2v-2zM697 151v2h2v-2zM699 172v2h3v-2zM702 89v2h2v-2zM702 167v3h2v-3zM704 87v2h2v-2zM704 137v3h2v-3zM704 153v3h2v-3zM706 137v5h1v-5zM706 151v2h1v-2zM706 158v7h1v-7zM706 170v4h1v-4z"/>
<path fill="#00ffb4" d="M142 84v3h2v-3zM144 82v2h3v-2zM149 59v2h2v-2zM149 68v5h2v-5zM149 75v3h2v-3zM151 68v3h3v-3zM154 68v3h2v-3zM156 68v3h2v-3zM156 84v3h2v-3zM158 68v3h3v-3zM158 78v4h3v-4zM161 57v2h2v-2zM161 71v4h2v-4zM161 84v3h2v-3zM163 80v2h3v-2zM166 75v3h2v-3zM166 84v3h2v-3zM168 78v2h2v-2zM168 84v3h2v-3zM170 82v2h3v-2zM170 87v4h3v-4zM173 84v5h2v-5zM175 80v2h2v-2zM180 87v2h2v-2zM182 80v2h2v-2zM192 61v3h2v-3zM199 66v2h2v-2zM239 71v2h2v-2zM244 71v2h2v-2zM256 73v5h2v-5zM260 149v2h3v-2zM263 146v3h2v-3zM268 153v3h2v-3zM270 151v2h2v-2zM272 73v2h3v-2zM275 73v2h2v-2zM275 146v3h2v-3zM275 153v3h2v-3zM279 73v2h3v-2zM279 153v3h3v-3zM282 73v2h2v-2zM282 146v5h2v-5zM284 73v2h2v-2zM284 146v3h2v-3zM286 151v2h3v-2zM289 73v2h2v-2zM291 73v2h3v-2zM291 146v3h3v-3zM291 151v5h3v-5zM294 73v2h2v-2zM294 146v3h2v-3zM296 73v2h2v-2zM296 153v3h2v-3zM298 144v2h3v-2zM301 144v2h2v-2zM303 146v3h2v-3zM305 151v5h3v-5zM308 73v2h2v-2zM308 144v2h2v-2zM313 144v2h2v-2zM313 151v2h2v-2zM315 144v2h2v-2zM315 151v2h2v-2zM320 149v2h2v-2zM324 142v2h3v-2zM324 151v2h3v-2zM327 142v7h2v-7zM329 144v7h3v-7zM332 144v2h2v-2zM334 149v2h2v-2zM336 144v2h3v-2zM339 75v3h2v-3zM339 142v2h2v-2zM341 75v3h2v-3zM341 140v2h2v-2zM348 75v5h3v-5zM351 137v3h2v-3zM353 140v2h2v-2zM355 75v3h3v-3zM358 140v2h2v-2zM367 78v2h3v-2zM374 80v2h3v-2zM374 137v3h3v-3zM377 137v3h2v-3zM381 137v3h3v-3zM384 71v2h2v-2zM396 80v2h2v-2zM403 75v3h2v-3zM417 78v2h2v-2zM419 78v2h3v-2zM429 78v2h2v-2zM431 78v2h3v-2zM438 80v2h3v-2zM441 78v2h2v-2zM448 78v2h2v-2zM448 179v1h2v-1zM453 174v2h2v-2zM453 179v1h2v-1zM457 172v7h3v-7zM460 170v2h2v-2zM462 167v5h2v-5zM464 170v2h3v-2zM467 163v4h2v-4zM469 163v2h3v-2zM472 163v4h2v-4zM472 172v2h2v-2zM474 167v3h2v-3zM476 80v2h3v-2zM476 158v2h3v-2zM479 158v2h2v-2zM479 179v1h2v-1zM481 156v4h2v-4zM481 176v3h2v-3zM486 153v5h2v-5zM488 172v2h2v-2zM490 82v2h3v-2zM490 149v2h3v-2zM490 153v3h3v-3zM495 151v2h3v-2zM498 82v2h2v-2zM498 146v5h2v-5zM502 84v3h3v-3zM505 149v2h2v-2zM505 179v1h2v-1zM509 174v2h3v-2zM514 146v3h3v-3zM517 84v3h2v-3zM519 84v3h2v-3zM521 153v3h3v-3zM524 84v3h2v-3zM524 144v5h2v-5zM524 156v2h2v-2zM524 160v3h2v-3zM526 84v3h2v-3zM528 144v2h3v-2zM531 146v3h2v-3zM531 170v2h2v-2zM533 144v2h3v-2zM533 163v2h3v-2zM536 135v2h2v-2zM538 133v2h2v-2zM543 84v3h2v-3zM543 135v2h2v-2zM545 133v4h2v-4zM545 140v2h2v-2zM547 84v3h3v-3zM547 130v7h3v-7zM552 156v2h3v-2zM557 84v3h2v-3zM557 130v5h2v-5zM557 137v3h2v-3zM559 133v2h3v-2zM562 124v2h2v-2zM562 172v2h2v-2zM564 84v3h2v-3zM564 133v2h2v-2zM566 133v2h3v-2zM569 137v3h2v-3zM571 128v5h3v-5zM571 135v5h3v-5zM574 133v2h2v-2zM576 146v3h2v-3zM578 133v7h3v-7zM578 156v2h3v-2zM578 165v2h3v-2zM581 142v2h2v-2zM583 135v5h2v-5zM585 133v2h3v-2zM585 137v3h3v-3zM588 84v3h2v-3zM588 130v3h2v-3zM588 137v3h2v-3zM590 133v2h2v-2zM590 153v3h2v-3zM592 135v2h3v-2zM595 133v2h2v-2zM597 130v5h3v-5zM600 133v4h2v-4zM600 170v2h2v-2zM602 84v3h2v-3zM602 124v2h2v-2zM604 87v2h3v-2zM607 165v2h2v-2zM609 84v3h2v-3zM609 133v2h2v-2zM611 133v2h3v-2zM614 133v2h2v-2zM616 135v5h3v-5zM619 133v7h2v-7zM623 137v3h3v-3zM626 135v2h2v-2zM628 151v2h2v-2zM630 130v3h3v-3zM630 163v2h3v-2zM633 133v9h2v-9zM635 133v2h3v-2zM635 149v2h3v-2zM638 87v2h2v-2zM638 121v3h2v-3zM638 137v3h2v-3zM638 151v2h2v-2zM640 87v2h2v-2zM640 144v2h2v-2zM642 133v2h3v-2zM645 89v2h2v-2zM645 135v2h2v-2zM645 153v3h2v-3zM652 135v2h2v-2zM654 133v2h3v-2zM654 137v3h3v-3zM659 140v2h2v-2zM659 163v2h2v-2zM661 137v3h3v-3zM661 146v3h3v-3zM664 87v2h2v-2zM664 133v2h2v-2zM664 137v3h2v-3zM668 87v2h3v-2zM668 135v2h3v-2zM671 135v2h2v-2zM671 163v2h2v-2zM678 87v2h2v-2zM678 137v3h2v-3zM678 160v3h2v-3zM680 137v3h3v-3zM680 146v3h3v-3zM683 133v4h2v-4zM687 163v2h3v-2zM690 133v2h2v-2zM692 87v2h2v-2zM692 158v2h2v-2zM694 87v2h3v-2zM694 91v3h3v-3zM694 121v3h3v-3zM699 140v2h3v-2zM699 165v2h3v-2zM702 87v2h2v-2zM702 133v4h2v-4zM704 133v2h2v-2zM704 142v2h2v-2zM706 87v2h1v-2zM706 135v2h1v-2zM706 146v3h1v-3z"/>
<path fill="#00ff8d" d="M142 82v2h2v-2zM142 87v2h2v-2zM144 78v2h3v-2zM147 78v2h2v-2zM149 73v2h2v-2zM149 80v4h2v-4zM151 75v5h3v-5zM154 80v2h2v-2zM154 84v3h2v-3zM156 80v2h2v-2zM156 96v2h2v-2zM161 66v2h2v-2zM163 82v5h3v-5zM163 89v2h3v-2zM163 94v2h3v-2zM166 87v2h2v-2zM175 68v3h2v-3zM175 82v2h2v-2zM177 80v2h3v-2zM177 87v2h3v-2zM180 89v2h2v-2zM201 68v3h2v-3zM206 68v3h2v-3zM208 68v3h3v-3zM218 71v2h2v-2zM232 71v2h2v-2zM253 73v2h3v-2zM256 149v2h2v-2zM258 73v2h2v-2zM260 146v3h3v-3zM263 73v2h2v-2zM263 151v2h2v-2zM265 73v2h3v-2zM268 144v2h2v-2zM270 73v2h2v-2zM275 151v2h2v-2zM277 144v2h2v-2zM279 144v2h3v-2zM284 75v3h2v-3zM298 153v5h3v-5zM303 144v2h2v-2zM308 153v3h2v-3zM310 75v3h3v-3zM317 149v2h3v-2zM322 75v3h2v-3zM322 144v5h2v-5zM324 140v2h3v-2zM327 149v2h2v-2zM329 137v3h3v-3zM332 75v3h2v-3zM332 146v3h2v-3zM334 75v3h2v-3zM334 142v2h2v-2zM336 75v3h3v-3zM336 140v2h3v-2zM336 149v2h3v-2zM339 140v2h2v-2zM339 144v2h2v-2zM341 149v2h2v-2zM343 142v2h3v-2zM346 146v3h2v-3zM348 137v3h3v-3zM351 146v3h2v-3zM353 144v2h2v-2zM355 137v3h3v-3zM362 137v3h3v-3zM362 144v2h3v-2zM365 137v3h2v-3zM367 135v5h3v-5zM367 142v2h3v-2zM372 137v5h2v-5zM374 140v2h3v-2zM381 140v2h3v-2zM384 78v2h2v-2zM384 137v3h2v-3zM393 78v2h3v-2zM398 78v2h2v-2zM405 78v2h2v-2zM407 78v2h3v-2zM412 78v2h3v-2zM415 78v2h2v-2zM419 80v2h3v-2zM424 78v2h2v-2zM438 78v2h3v-2zM443 78v2h2v-2zM448 176v3h2v-3zM450 80v2h3v-2zM450 176v3h3v-3zM455 174v5h2v-5zM457 170v2h3v-2zM460 80v2h2v-2zM467 80v2h2v-2zM467 160v3h2v-3zM469 160v3h3v-3zM472 80v2h2v-2zM474 158v2h2v-2zM474 179v1h2v-1zM476 82v2h3v-2zM486 151v2h2v-2zM493 82v2h2v-2zM495 82v2h3v-2zM498 87v2h2v-2zM500 82v2h2v-2zM502 144v2h3v-2zM505 84v3h2v-3zM507 146v3h2v-3zM509 146v3h3v-3zM512 146v3h2v-3zM514 84v3h3v-3zM514 144v2h3v-2zM524 142v2h2v-2zM526 142v2h2v-2zM528 84v3h3v-3zM528 146v3h3v-3zM531 84v3h2v-3zM531 142v2h2v-2zM533 84v3h3v-3zM533 140v4h3v-4zM538 84v3h2v-3zM545 130v3h2v-3zM550 133v2h2v-2zM552 133v2h3v-2zM555 130v3h2v-3zM555 135v2h2v-2zM559 130v3h3v-3zM562 130v3h2v-3zM571 133v2h3v-2zM574 130v3h2v-3zM576 87v2h2v-2zM576 128v2h2v-2zM592 130v3h3v-3zM595 124v2h2v-2zM602 87v4h2v-4zM607 87v2h2v-2zM607 126v2h2v-2zM607 133v2h2v-2zM609 128v2h2v-2zM611 87v2h3v-2zM611 130v3h3v-3zM614 135v2h2v-2zM616 130v5h3v-5zM619 130v3h2v-3zM621 133v2h2v-2zM628 130v3h2v-3zM630 121v3h3v-3zM633 128v2h2v-2zM635 130v3h3v-3zM638 126v4h2v-4zM638 135v2h2v-2zM642 87v2h3v-2zM642 130v3h3v-3zM645 87v2h2v-2zM645 130v3h2v-3zM647 89v2h2v-2zM647 130v3h2v-3zM649 135v2h3v-2zM652 130v3h2v-3zM654 87v2h3v-2zM657 87v2h2v-2zM657 133v2h2v-2zM659 87v2h2v-2zM659 130v3h2v-3zM668 89v2h3v-2zM668 126v2h3v-2zM668 130v5h3v-5zM671 87v2h2v-2zM673 87v2h3v-2zM673 137v3h3v-3zM676 87v2h2v-2zM683 87v2h2v-2zM685 87v2h2v-2zM685 130v3h2v-3zM690 135v2h2v-2zM694 130v3h3v-3zM702 119v2h2v-2zM702 130v3h2v-3zM704 130v3h2v-3zM706 128v5h1v-5z"/>
<path fill="#00ff66" d="M142 78v2h2v-2zM147 68v3h2v-3zM147 82v2h2v-2zM147 91v3h2v-3zM149 64v2h2v-2zM149 84v3h2v-3zM168 87v2h2v-2zM168 98v2h2v-2zM175 75v5h2v-5zM180 91v3h2v-3zM182 87v2h2v-2zM182 91v3h2v-3zM184 91v3h3v-3zM187 64v2h2v-2zM189 61v3h3v-3zM199 68v3h2v-3zM227 73v2h3v-2zM230 71v2h2v-2zM234 71v2h3v-2zM251 73v2h2v-2zM258 75v3h2v-3zM258 144v5h2v-5zM258 151v2h2v-2zM260 73v2h3v-2zM260 144v2h3v-2zM263 144v2h2v-2zM263 153v3h2v-3zM265 142v2h3v-2zM268 73v5h2v-5zM268 142v2h2v-2zM270 144v2h2v-2zM272 75v3h3v-3zM277 73v2h2v-2zM277 142v2h2v-2zM277 146v3h2v-3zM277 153v3h2v-3zM279 142v2h3v-2zM284 156v2h2v-2zM286 146v3h3v-3zM286 153v3h3v-3zM289 146v3h2v-3zM291 142v2h3v-2zM294 153v3h2v-3zM296 75v3h2v-3zM301 140v2h2v-2zM308 75v3h2v-3zM308 140v4h2v-4zM310 144v2h3v-2zM315 142v2h2v-2zM320 142v2h2v-2zM324 75v3h3v-3zM329 75v3h3v-3zM329 140v2h3v-2zM332 142v2h2v-2zM332 149v2h2v-2zM339 146v3h2v-3zM341 146v3h2v-3zM348 146v3h3v-3zM355 140v2h3v-2zM358 78v2h2v-2zM360 78v2h2v-2zM360 142v4h2v-4zM362 135v2h3v-2zM370 140v2h2v-2zM372 135v2h2v-2zM374 78v2h3v-2zM377 78v2h2v-2zM377 135v2h2v-2zM377 144v2h2v-2zM379 135v2h2v-2zM379 142v2h2v-2zM381 78v2h3v-2zM388 140v2h3v-2zM396 78v2h2v-2zM396 82v2h2v-2zM398 80v2h2v-2zM398 137v3h2v-3zM400 78v2h3v-2zM407 80v2h3v-2zM426 80v2h3v-2zM436 80v2h2v-2zM445 176v3h3v-3zM453 82v2h2v-2zM457 80v2h3v-2zM462 165v2h2v-2zM464 163v2h3v-2zM467 82v2h2v-2zM474 80v2h2v-2zM476 156v2h3v-2zM479 153v3h2v-3zM490 84v3h3v-3zM493 151v2h2v-2zM498 144v2h2v-2zM500 84v3h2v-3zM502 119v2h3v-2zM505 87v2h2v-2zM521 142v2h3v-2zM538 128v2h2v-2zM543 87v2h2v-2zM543 128v2h2v-2zM545 126v2h2v-2zM547 126v4h3v-4zM555 128v2h2v-2zM557 87v2h2v-2zM562 128v2h2v-2zM564 87v2h2v-2zM564 128v2h2v-2zM566 128v2h3v-2zM569 133v2h2v-2zM576 124v2h2v-2zM578 128v2h3v-2zM585 124v2h3v-2zM585 128v5h3v-5zM602 128v2h2v-2zM604 130v3h3v-3zM607 128v5h2v-5zM611 124v2h3v-2zM611 128v2h3v-2zM616 87v2h3v-2zM619 126v4h2v-4zM621 128v2h2v-2zM623 128v2h3v-2zM626 126v2h2v-2zM630 89v2h3v-2zM630 126v2h3v-2zM635 128v2h3v-2zM647 128v2h2v-2zM649 87v2h3v-2zM649 128v5h3v-5zM652 87v2h2v-2zM654 91v3h3v-3zM654 124v2h3v-2zM654 128v2h3v-2zM657 121v3h2v-3zM657 128v2h2v-2zM661 130v3h3v-3zM664 119v5h2v-5zM666 124v6h2v-6zM671 128v2h2v-2zM676 91v3h2v-3zM678 89v2h2v-2zM683 89v2h2v-2zM685 89v2h2v-2zM687 87v2h3v-2zM687 128v5h3v-5zM694 124v2h3v-2zM697 124v4h2v-4zM697 130v3h2v-3zM699 87v2h3v-2zM699 124v2h3v-2zM699 133v2h3v-2zM702 94v2h2v-2zM702 128v2h2v-2zM704 91v3h2v-3zM704 124v6h2v-6zM706 89v2h1v-2zM706 117v2h1v-2zM706 133v2h1v-2z"/>
<path fill="#00ff3f" d="M144 87v2h3v-2zM147 84v3h2v-3zM151 87v2h3v-2zM154 73v2h2v-2zM156 87v2h2v-2zM156 94v2h2v-2zM161 87v2h2v-2zM161 91v3h2v-3zM163 87v2h3v-2zM166 91v3h2v-3zM168 89v5h2v-5zM170 91v3h3v-3zM170 96v2h3v-2zM177 84v3h3v-3zM177 91v3h3v-3zM189 64v2h3v-2zM192 64v4h2v-4zM194 66v2h2v-2zM203 71v2h3v-2zM227 71v2h3v-2zM244 73v2h2v-2zM246 73v2h3v-2zM258 153v5h2v-5zM260 153v3h3v-3zM270 75v3h2v-3zM272 142v2h3v-2zM275 144v2h2v-2zM282 151v5h2v-5zM284 142v2h2v-2zM291 144v2h3v-2zM294 144v2h2v-2zM296 140v2h2v-2zM296 144v2h2v-2zM298 137v3h3v-3zM298 142v2h3v-2zM303 75v3h2v-3zM303 140v4h2v-4zM305 75v3h3v-3zM310 137v3h3v-3zM310 153v3h3v-3zM313 78v2h2v-2zM313 140v2h2v-2zM317 75v3h3v-3zM317 140v2h3v-2zM320 75v3h2v-3zM322 140v2h2v-2zM329 142v2h3v-2zM334 137v5h2v-5zM336 78v2h3v-2zM339 137v3h2v-3zM343 137v3h3v-3zM353 78v2h2v-2zM353 137v3h2v-3zM355 78v2h3v-2zM358 80v2h2v-2zM360 137v3h2v-3zM362 80v2h3v-2zM365 78v2h2v-2zM365 135v2h2v-2zM370 78v2h2v-2zM370 137v3h2v-3zM370 142v2h2v-2zM374 142v2h3v-2zM377 140v2h2v-2zM384 82v2h2v-2zM384 140v2h2v-2zM386 78v2h2v-2zM388 137v3h3v-3zM391 78v2h2v-2zM396 133v2h2v-2zM396 137v3h2v-3zM396 142v2h2v-2zM400 82v2h3v-2zM405 82v2h2v-2zM415 82v2h2v-2zM417 80v2h2v-2zM441 80v2h2v-2zM445 80v2h3v-2zM448 80v2h2v-2zM453 80v2h2v-2zM455 172v2h2v-2zM469 156v4h3v-4zM472 156v2h2v-2zM474 82v2h2v-2zM474 153v5h2v-5zM476 153v3h3v-3zM486 82v2h2v-2zM488 82v2h2v-2zM488 151v2h2v-2zM493 146v3h2v-3zM495 84v3h3v-3zM500 146v3h2v-3zM505 144v2h2v-2zM509 84v3h3v-3zM512 144v2h2v-2zM517 144v2h2v-2zM519 142v2h2v-2zM521 87v2h3v-2zM521 140v2h3v-2zM524 140v2h2v-2zM526 140v2h2v-2zM536 87v2h2v-2zM536 126v4h2v-4zM540 128v2h3v-2zM545 87v2h2v-2zM545 124v2h2v-2zM545 128v2h2v-2zM547 87v2h3v-2zM550 87v2h2v-2zM552 87v2h3v-2zM552 128v2h3v-2zM557 126v4h2v-4zM559 128v2h3v-2zM564 124v2h2v-2zM566 89v2h3v-2zM569 128v2h2v-2zM571 87v2h3v-2zM574 89v2h2v-2zM576 89v2h2v-2zM576 121v3h2v-3zM578 124v2h3v-2zM581 124v6h2v-6zM583 87v2h2v-2zM583 121v5h2v-5zM588 87v2h2v-2zM590 128v2h2v-2zM592 124v2h3v-2zM592 128v2h3v-2zM597 128v2h3v-2zM604 124v2h3v-2zM607 89v2h2v-2zM607 121v3h2v-3zM609 87v2h2v-2zM609 121v3h2v-3zM609 126v2h2v-2zM614 87v2h2v-2zM614 128v2h2v-2zM616 128v2h3v-2zM619 87v2h2v-2zM621 89v2h2v-2zM623 124v2h3v-2zM633 87v2h2v-2zM635 87v2h3v-2zM635 119v2h3v-2zM635 124v4h3v-4zM638 89v2h2v-2zM642 89v2h3v-2zM642 128v2h3v-2zM645 128v2h2v-2zM647 121v7h2v-7zM649 121v3h3v-3zM652 126v4h2v-4zM654 121v3h3v-3zM657 89v2h2v-2zM657 124v2h2v-2zM659 124v2h2v-2zM659 128v2h2v-2zM664 91v3h2v-3zM666 91v3h2v-3zM668 128v2h3v-2zM673 91v3h3v-3zM673 130v3h3v-3zM676 94v2h2v-2zM676 128v2h2v-2zM678 126v4h2v-4zM680 128v2h3v-2zM683 91v3h2v-3zM683 126v2h2v-2zM685 126v4h2v-4zM687 89v2h3v-2zM687 126v2h3v-2zM692 91v3h2v-3zM692 124v6h2v-6zM694 119v2h3v-2zM694 128v2h3v-2zM697 128v2h2v-2zM699 89v2h3v-2zM699 121v3h3v-3zM699 128v2h3v-2zM702 117v2h2v-2zM702 121v3h2v-3zM704 89v2h2v-2zM704 119v2h2v-2zM706 126v2h1v-2z"/>
<path fill="#00ff18" d="M147 75v3h2v-3zM147 94v2h2v-2zM149 91v3h2v-3zM154 87v4h2v-4zM156 91v3h2v-3zM158 82v2h3v-2zM158 89v2h3v-2zM161 96v2h2v-2zM163 91v3h3v-3zM166 89v2h2v-2zM168 94v2h2v-2zM175 84v10h2v-10zM175 96v2h2v-2zM180 94v2h2v-2zM182 94v4h2v-4zM184 94v2h3v-2zM184 98v2h3v-2zM189 66v2h3v-2zM196 66v2h3v-2zM206 71v4h2v-4zM211 73v2h2v-2zM213 71v2h2v-2zM215 73v2h3v-2zM218 73v2h2v-2zM222 71v2h3v-2zM225 71v2h2v-2zM249 75v3h2v-3zM253 151v2h3v-2zM256 140v2h2v-2zM256 153v3h2v-3zM258 78v2h2v-2zM260 140v4h3v-4zM260 151v2h3v-2zM265 75v3h3v-3zM265 124v2h3v-2zM265 128v2h3v-2zM265 140v2h3v-2zM268 140v2h2v-2zM270 140v2h2v-2zM275 140v2h2v-2zM277 135v2h2v-2zM277 140v2h2v-2zM279 75v3h3v-3zM282 144v2h2v-2zM286 144v2h3v-2zM289 75v5h2v-5zM291 78v2h3v-2zM291 156v2h3v-2zM296 78v2h2v-2zM296 142v2h2v-2zM301 78v2h2v-2zM301 142v2h2v-2zM301 156v2h2v-2zM305 140v4h3v-4zM310 78v2h3v-2zM310 140v2h3v-2zM313 75v3h2v-3zM313 153v3h2v-3zM315 153v3h2v-3zM317 142v2h3v-2zM322 142v2h2v-2zM327 151v2h2v-2zM329 151v2h3v-2zM336 137v3h3v-3zM339 78v2h2v-2zM341 78v4h2v-4zM341 137v3h2v-3zM343 80v2h3v-2zM343 135v2h3v-2zM343 149v2h3v-2zM346 78v2h2v-2zM351 135v2h2v-2zM355 144v2h3v-2zM358 137v3h2v-3zM362 78v2h3v-2zM365 82v2h2v-2zM365 144v2h2v-2zM367 82v2h3v-2zM367 130v3h3v-3zM372 142v2h2v-2zM374 144v2h3v-2zM377 80v2h2v-2zM377 142v2h2v-2zM379 80v2h2v-2zM379 140v2h2v-2zM381 82v2h3v-2zM381 142v2h3v-2zM384 80v2h2v-2zM384 135v2h2v-2zM386 80v2h2v-2zM386 137v5h2v-5zM388 78v2h3v-2zM388 142v2h3v-2zM393 135v2h3v-2zM396 135v2h2v-2zM396 140v2h2v-2zM400 80v2h3v-2zM403 80v2h2v-2zM405 80v2h2v-2zM405 135v2h2v-2zM412 82v2h3v-2zM412 133v2h3v-2zM422 82v2h2v-2zM424 80v2h2v-2zM434 80v2h2v-2zM436 82v2h2v-2zM438 82v2h3v-2zM441 82v2h2v-2zM443 179v1h2v-1zM445 82v2h3v-2zM450 82v2h3v-2zM450 174v2h3v-2zM453 84v3h2v-3zM453 172v2h2v-2zM462 82v2h2v-2zM467 158v2h2v-2zM469 80v4h3v-4zM474 84v3h2v-3zM481 82v5h2v-5zM481 119v2h2v-2zM481 151v2h2v-2zM493 144v2h2v-2zM495 142v4h3v-4zM498 142v2h2v-2zM502 87v2h3v-2zM507 84v5h2v-5zM507 144v2h2v-2zM509 87v2h3v-2zM509 144v2h3v-2zM512 84v5h2v-5zM514 87v4h3v-4zM521 137v3h3v-3zM524 89v2h2v-2zM526 87v2h2v-2zM528 87v2h3v-2zM536 124v2h2v-2zM538 87v2h2v-2zM543 89v2h2v-2zM550 124v2h2v-2zM555 87v2h2v-2zM555 91v3h2v-3zM555 121v3h2v-3zM562 87v2h2v-2zM564 121v3h2v-3zM566 126v2h3v-2zM574 121v5h2v-5zM581 87v2h2v-2zM581 121v3h2v-3zM588 124v4h2v-4zM590 87v4h2v-4zM590 124v2h2v-2zM592 87v2h3v-2zM592 91v3h3v-3zM595 121v3h2v-3zM597 89v2h3v-2zM597 124v2h3v-2zM600 89v2h2v-2zM600 126v2h2v-2zM602 91v3h2v-3zM609 89v2h2v-2zM609 124v2h2v-2zM611 126v2h3v-2zM616 121v5h3v-5zM623 121v3h3v-3zM628 87v4h2v-4zM628 121v3h2v-3zM630 124v2h3v-2zM633 89v2h2v-2zM633 121v3h2v-3zM638 117v2h2v-2zM640 89v2h2v-2zM640 128v2h2v-2zM642 91v3h3v-3zM642 126v2h3v-2zM645 91v3h2v-3zM645 121v3h2v-3zM647 91v3h2v-3zM649 89v5h3v-5zM649 126v2h3v-2zM652 124v2h2v-2zM654 119v2h3v-2zM654 126v2h3v-2zM657 91v3h2v-3zM659 119v2h2v-2zM659 126v2h2v-2zM661 89v2h3v-2zM664 94v2h2v-2zM668 119v5h3v-5zM671 124v2h2v-2zM673 119v5h3v-5zM676 121v7h2v-7zM683 119v5h2v-5zM692 89v2h2v-2zM694 117v2h3v-2zM697 89v2h2v-2zM697 94v2h2v-2zM699 126v2h3v-2zM702 96v2h2v-2zM704 121v3h2v-3zM706 124v2h1v-2z"/>
<path fill="#11ff00" d="M142 91v3h2v-3zM142 105v2h2v-2zM144 84v3h3v-3zM147 89v2h2v-2zM147 96v2h2v-2zM147 135v2h2v-2zM151 84v3h3v-3zM151 89v2h3v-2zM151 94v2h3v-2zM154 98v2h2v-2zM156 89v2h2v-2zM156 100v3h2v-3zM158 87v2h3v-2zM158 91v3h3v-3zM158 96v2h3v-2zM161 89v2h2v-2zM161 94v2h2v-2zM166 94v2h2v-2zM166 98v2h2v-2zM166 103v2h2v-2zM168 135v2h2v-2zM170 98v2h3v-2zM173 89v5h2v-5zM177 89v2h3v-2zM177 94v2h3v-2zM180 96v2h2v-2zM180 100v3h2v-3zM180 163v2h2v-2zM182 100v3h2v-3zM184 96v2h3v-2zM187 66v2h2v-2zM194 64v2h2v-2zM194 68v3h2v-3zM199 71v2h2v-2zM201 71v2h2v-2zM208 71v2h3v-2zM213 73v2h2v-2zM215 71v2h3v-2zM220 71v4h2v-4zM234 75v3h3v-3zM239 73v2h2v-2zM241 73v2h3v-2zM251 75v3h2v-3zM253 75v3h3v-3zM256 144v5h2v-5zM258 142v2h2v-2zM260 75v3h3v-3zM263 75v3h2v-3zM263 142v2h2v-2zM265 78v2h3v-2zM265 117v2h3v-2zM265 121v3h3v-3zM265 133v2h3v-2zM265 137v3h3v-3zM268 80v2h2v-2zM268 156v2h2v-2zM272 133v2h3v-2zM272 140v2h3v-2zM275 142v2h2v-2zM275 156v2h2v-2zM277 75v3h2v-3zM279 156v2h3v-2zM282 75v3h2v-3zM284 78v2h2v-2zM284 137v5h2v-5zM286 75v3h3v-3zM286 142v2h3v-2zM286 156v2h3v-2zM289 137v9h2v-9zM289 156v2h2v-2zM291 75v3h3v-3zM294 75v3h2v-3zM296 156v2h2v-2zM298 78v2h3v-2zM298 140v2h3v-2zM301 75v3h2v-3zM301 80v2h2v-2zM301 137v3h2v-3zM305 135v2h3v-2zM310 142v2h3v-2zM313 142v2h2v-2zM315 75v5h2v-5zM315 140v2h2v-2zM317 78v2h3v-2zM317 151v2h3v-2zM320 112v2h2v-2zM320 140v2h2v-2zM322 151v2h2v-2zM324 137v3h3v-3zM327 78v2h2v-2zM327 137v3h2v-3zM334 80v2h2v-2zM343 78v2h3v-2zM343 82v2h3v-2zM346 135v5h2v-5zM348 135v2h3v-2zM351 78v4h2v-4zM351 130v3h2v-3zM353 80v4h2v-4zM355 146v3h3v-3zM358 146v3h2v-3zM360 80v2h2v-2zM360 135v2h2v-2zM362 82v2h3v-2zM365 80v2h2v-2zM365 117v2h2v-2zM365 133v2h2v-2zM367 80v2h3v-2zM367 133v2h3v-2zM370 80v4h2v-4zM370 135v2h2v-2zM372 133v2h2v-2zM372 144v2h2v-2zM374 82v2h3v-2zM374 135v2h3v-2zM377 133v2h2v-2zM379 78v2h2v-2zM379 133v2h2v-2zM379 137v3h2v-3zM384 133v2h2v-2zM384 142v2h2v-2zM388 82v2h3v-2zM388 135v2h3v-2zM391 80v2h2v-2zM391 142v2h2v-2zM393 80v2h3v-2zM393 140v4h3v-4zM396 117v4h2v-4zM396 130v3h2v-3zM398 82v2h2v-2zM398 121v3h2v-3zM398 133v2h2v-2zM398 140v2h2v-2zM400 130v3h3v-3zM400 140v2h3v-2zM405 137v3h2v-3zM407 82v2h3v-2zM407 121v3h3v-3zM407 137v3h3v-3zM410 80v4h2v-4zM412 137v3h3v-3zM415 80v2h2v-2zM419 82v2h3v-2zM419 137v3h3v-3zM424 135v2h2v-2zM429 82v2h2v-2zM434 133v2h2v-2zM441 176v4h2v-4zM443 80v4h2v-4zM445 172v2h3v-2zM448 174v2h2v-2zM450 128v2h3v-2zM450 172v2h3v-2zM453 126v4h2v-4zM453 170v2h2v-2zM455 80v2h2v-2zM457 82v2h3v-2zM457 167v3h3v-3zM460 84v3h2v-3zM462 163v2h2v-2zM464 80v4h3v-4zM467 119v2h2v-2zM469 121v3h3v-3zM472 82v2h2v-2zM472 121v3h2v-3zM476 84v3h3v-3zM481 149v2h2v-2zM486 149v2h2v-2zM493 84v5h2v-5zM493 121v3h2v-3zM495 119v2h3v-2zM498 84v3h2v-3zM498 89v2h2v-2zM500 87v2h2v-2zM500 144v2h2v-2zM502 89v2h3v-2zM502 121v3h3v-3zM502 142v2h3v-2zM505 89v2h2v-2zM505 121v3h2v-3zM505 142v2h2v-2zM507 142v2h2v-2zM514 140v2h3v-2zM517 140v2h2v-2zM519 89v2h2v-2zM519 140v2h2v-2zM526 89v2h2v-2zM528 137v3h3v-3zM531 140v2h2v-2zM533 135v2h3v-2zM538 124v2h2v-2zM540 87v2h3v-2zM543 119v5h2v-5zM543 126v2h2v-2zM545 119v2h2v-2zM547 121v5h3v-5zM550 89v2h2v-2zM552 124v4h3v-4zM555 124v4h2v-4zM559 126v2h3v-2zM562 121v3h2v-3zM564 89v2h2v-2zM564 126v2h2v-2zM566 119v2h3v-2zM569 126v2h2v-2zM571 89v2h3v-2zM574 87v2h2v-2zM574 126v2h2v-2zM581 89v2h2v-2zM581 119v2h2v-2zM583 126v2h2v-2zM585 89v2h3v-2zM585 119v5h3v-5zM588 89v2h2v-2zM592 117v2h3v-2zM592 126v2h3v-2zM597 121v3h3v-3zM602 119v5h2v-5zM604 119v5h3v-5zM611 119v2h3v-2zM614 124v4h2v-4zM619 91v3h2v-3zM619 124v2h2v-2zM626 87v2h2v-2zM628 91v3h2v-3zM628 124v2h2v-2zM633 119v2h2v-2zM635 89v2h3v-2zM635 121v3h3v-3zM638 91v3h2v-3zM638 96v2h2v-2zM638 119v2h2v-2zM638 124v2h2v-2zM640 91v3h2v-3zM640 121v3h2v-3zM642 121v3h3v-3zM645 126v2h2v-2zM647 117v2h2v-2zM649 124v2h3v-2zM652 89v2h2v-2zM652 121v3h2v-3zM659 89v2h2v-2zM661 91v3h3v-3zM664 96v2h2v-2zM666 119v2h2v-2zM668 117v2h3v-2zM668 124v2h3v-2zM673 126v2h3v-2zM676 117v4h2v-4zM678 119v2h2v-2zM680 89v2h3v-2zM680 121v7h3v-7zM683 124v2h2v-2zM685 119v2h2v-2zM685 124v2h2v-2zM687 91v5h3v-5zM687 121v3h3v-3zM690 121v5h2v-5zM692 119v2h2v-2zM694 98v2h3v-2zM697 91v3h2v-3zM699 91v3h3v-3zM702 103v2h2v-2zM702 114v3h2v-3zM702 124v2h2v-2zM704 94v2h2v-2zM704 114v3h2v-3zM706 91v3h1v-3z"/>
<path fill="#3dff00" d="M142 89v2h2v-2zM142 96v4h2v-4zM142 126v2h2v-2zM144 91v5h3v-5zM147 87v2h2v-2zM147 142v2h2v-2zM151 91v3h3v-3zM151 96v2h3v-2zM151 126v2h3v-2zM151 130v3h3v-3zM154 91v7h2v-7zM156 98v2h2v-2zM156 140v2h2v-2zM158 124v2h3v-2zM158 140v2h3v-2zM161 98v2h2v-2zM163 100v3h3v-3zM166 96v2h2v-2zM168 146v3h2v-3zM168 170v2h2v-2zM170 110v2h3v-2zM175 100v3h2v-3zM177 98v2h3v-2zM180 98v2h2v-2zM180 103v2h2v-2zM180 133v2h2v-2zM180 149v2h2v-2zM182 98v2h2v-2zM182 121v3h2v-3zM184 87v2h3v-2zM187 133v2h2v-2zM192 68v3h2v-3zM192 130v3h2v-3zM194 71v2h2v-2zM194 133v2h2v-2zM211 71v2h2v-2zM213 126v2h2v-2zM225 73v2h2v-2zM227 75v5h3v-5zM239 75v3h2v-3zM241 75v3h3v-3zM244 75v3h2v-3zM256 151v2h2v-2zM258 133v2h2v-2zM258 158v2h2v-2zM260 156v2h3v-2zM265 156v4h3v-4zM268 78v2h2v-2zM268 137v3h2v-3zM270 80v2h2v-2zM270 142v2h2v-2zM272 78v2h3v-2zM275 80v2h2v-2zM275 137v3h2v-3zM277 78v2h2v-2zM277 156v4h2v-4zM279 78v2h3v-2zM279 140v2h3v-2zM282 140v4h2v-4zM282 156v2h2v-2zM284 114v5h2v-5zM284 128v2h2v-2zM284 133v2h2v-2zM286 140v2h3v-2zM286 158v2h3v-2zM289 124v2h2v-2zM291 140v2h3v-2zM294 78v2h2v-2zM296 80v2h2v-2zM296 128v5h2v-5zM303 78v2h2v-2zM303 156v2h2v-2zM308 78v2h2v-2zM308 130v3h2v-3zM310 80v2h3v-2zM317 80v2h3v-2zM317 137v3h3v-3zM320 137v3h2v-3zM322 78v2h2v-2zM324 110v4h3v-4zM332 140v2h2v-2zM336 133v2h3v-2zM339 80v2h2v-2zM339 126v2h2v-2zM339 149v2h2v-2zM341 133v2h2v-2zM346 80v2h2v-2zM346 133v2h2v-2zM348 80v4h3v-4zM348 124v2h3v-2zM353 135v2h2v-2zM353 146v3h2v-3zM355 80v2h3v-2zM358 135v2h2v-2zM360 126v2h2v-2zM362 128v2h3v-2zM370 144v2h2v-2zM372 80v2h2v-2zM374 130v3h3v-3zM377 82v2h2v-2zM377 114v3h2v-3zM381 128v2h3v-2zM381 133v4h3v-4zM386 82v2h2v-2zM388 126v2h3v-2zM388 133v2h3v-2zM391 140v2h2v-2zM396 128v2h2v-2zM398 135v2h2v-2zM400 128v2h3v-2zM403 137v3h2v-3zM405 84v3h2v-3zM405 130v3h2v-3zM410 137v3h2v-3zM412 80v2h3v-2zM417 137v3h2v-3zM419 84v3h3v-3zM419 135v2h3v-2zM422 80v2h2v-2zM422 137v3h2v-3zM424 82v2h2v-2zM424 130v3h2v-3zM424 137v3h2v-3zM429 135v2h2v-2zM434 82v5h2v-5zM434 135v2h2v-2zM436 84v3h2v-3zM436 133v2h2v-2zM443 174v2h2v-2zM445 128v2h3v-2zM450 167v3h3v-3zM453 121v5h2v-5zM455 82v2h2v-2zM457 128v2h3v-2zM457 165v2h3v-2zM460 163v4h2v-4zM464 124v2h3v-2zM464 160v3h3v-3zM467 84v3h2v-3zM467 156v2h2v-2zM469 84v3h3v-3zM469 117v4h3v-4zM474 117v2h2v-2zM479 82v2h2v-2zM483 82v2h3v-2zM486 84v3h2v-3zM486 119v2h2v-2zM488 84v3h2v-3zM488 149v2h2v-2zM490 117v4h3v-4zM490 144v5h3v-5zM495 87v4h3v-4zM502 140v2h3v-2zM505 119v2h2v-2zM509 142v2h3v-2zM512 142v2h2v-2zM517 87v2h2v-2zM517 142v2h2v-2zM521 89v2h3v-2zM524 87v2h2v-2zM524 137v3h2v-3zM528 140v2h3v-2zM531 87v2h2v-2zM531 135v2h2v-2zM533 87v2h3v-2zM538 89v2h2v-2zM538 121v3h2v-3zM540 89v2h3v-2zM540 121v3h3v-3zM545 121v3h2v-3zM547 119v2h3v-2zM552 121v3h3v-3zM555 89v2h2v-2zM557 89v2h2v-2zM559 89v2h3v-2zM559 117v2h3v-2zM559 121v5h3v-5zM564 119v2h2v-2zM566 121v5h3v-5zM569 87v4h2v-4zM569 124v2h2v-2zM571 126v2h3v-2zM576 91v3h2v-3zM576 119v2h2v-2zM576 126v2h2v-2zM578 87v2h3v-2zM578 121v3h3v-3zM583 89v2h2v-2zM583 119v2h2v-2zM592 89v2h3v-2zM592 121v3h3v-3zM595 91v3h2v-3zM595 117v2h2v-2zM597 91v3h3v-3zM600 87v2h2v-2zM600 121v5h2v-5zM604 89v2h3v-2zM607 91v3h2v-3zM607 117v4h2v-4zM609 91v3h2v-3zM609 119v2h2v-2zM611 89v2h3v-2zM611 121v3h3v-3zM616 89v2h3v-2zM619 89v2h2v-2zM621 87v2h2v-2zM621 91v3h2v-3zM626 119v2h2v-2zM630 119v2h3v-2zM633 91v5h2v-5zM638 94v2h2v-2zM642 117v4h3v-4zM645 124v2h2v-2zM647 94v4h2v-4zM647 119v2h2v-2zM652 117v4h2v-4zM654 94v2h3v-2zM657 117v4h2v-4zM659 91v3h2v-3zM661 94v2h3v-2zM661 119v2h3v-2zM661 124v2h3v-2zM664 117v2h2v-2zM666 117v2h2v-2zM671 94v2h2v-2zM676 96v2h2v-2zM678 91v3h2v-3zM678 117v2h2v-2zM680 91v3h3v-3zM680 119v2h3v-2zM683 94v2h2v-2zM685 94v2h2v-2zM685 98v2h2v-2zM685 121v3h2v-3zM687 117v4h3v-4zM690 89v2h2v-2zM690 126v2h2v-2zM697 117v2h2v-2zM697 121v3h2v-3zM699 94v2h3v-2zM699 114v7h3v-7zM702 98v2h2v-2zM704 96v2h2v-2zM704 103v2h2v-2zM704 112v2h2v-2z"/>
<path fill="#68ff00" d="M142 94v2h2v-2zM142 103v2h2v-2zM142 130v5h2v-5zM144 89v2h3v-2zM144 112v2h3v-2zM149 87v2h2v-2zM149 94v4h2v-4zM151 98v2h3v-2zM151 117v2h3v-2zM151 124v2h3v-2zM151 135v2h3v-2zM156 105v2h2v-2zM156 146v3h2v-3zM156 156v4h2v-4zM158 94v2h3v-2zM158 119v2h3v-2zM163 98v2h3v-2zM166 124v2h2v-2zM168 96v2h2v-2zM168 100v5h2v-5zM168 114v3h2v-3zM170 94v2h3v-2zM170 105v2h3v-2zM170 112v2h3v-2zM170 142v2h3v-2zM173 94v2h2v-2zM173 100v3h2v-3zM173 135v2h2v-2zM175 94v2h2v-2zM177 96v2h3v-2zM177 100v3h3v-3zM177 110v2h3v-2zM180 105v2h2v-2zM180 128v2h2v-2zM180 140v2h2v-2zM182 117v2h2v-2zM182 140v2h2v-2zM184 103v2h3v-2zM187 110v2h2v-2zM189 112v2h3v-2zM192 110v2h2v-2zM192 119v2h2v-2zM194 107v3h2v-3zM194 117v2h2v-2zM194 176v3h2v-3zM196 68v3h3v-3zM196 179v1h3v-1zM201 73v2h2v-2zM203 73v2h3v-2zM206 130v3h2v-3zM208 73v2h3v-2zM213 110v2h2v-2zM213 124v2h2v-2zM222 73v2h3v-2zM230 73v2h2v-2zM232 75v3h2v-3zM244 124v2h2v-2zM246 75v3h3v-3zM251 146v3h2v-3zM253 140v2h3v-2zM253 144v5h3v-5zM256 78v4h2v-4zM256 112v2h2v-2zM256 117v2h2v-2zM256 126v2h2v-2zM256 135v2h2v-2zM256 142v2h2v-2zM256 156v2h2v-2zM258 80v2h2v-2zM258 137v5h2v-5zM260 78v2h3v-2zM263 156v2h2v-2zM265 80v2h3v-2zM265 119v2h3v-2zM265 135v2h3v-2zM265 170v2h3v-2zM268 124v2h2v-2zM268 130v3h2v-3zM270 78v2h2v-2zM270 158v2h2v-2zM272 80v2h3v-2zM272 110v2h3v-2zM272 117v2h3v-2zM272 126v2h3v-2zM272 156v2h3v-2zM277 126v2h2v-2zM284 126v2h2v-2zM286 78v2h3v-2zM286 121v3h3v-3zM286 137v3h3v-3zM289 114v3h2v-3zM289 130v3h2v-3zM289 135v2h2v-2zM291 133v2h3v-2zM291 137v3h3v-3zM294 135v5h2v-5zM294 142v2h2v-2zM296 112v2h2v-2zM296 117v4h2v-4zM296 133v2h2v-2zM296 158v2h2v-2zM298 110v2h3v-2zM298 119v5h3v-5zM298 133v2h3v-2zM301 112v2h2v-2zM301 133v2h2v-2zM303 128v2h2v-2zM305 80v4h3v-4zM305 112v2h3v-2zM305 133v2h3v-2zM308 137v3h2v-3zM310 124v4h3v-4zM310 133v4h3v-4zM313 128v2h2v-2zM313 156v2h2v-2zM317 135v2h3v-2zM320 80v2h2v-2zM320 153v3h2v-3zM322 133v2h2v-2zM324 128v2h3v-2zM324 133v4h3v-4zM327 119v2h2v-2zM327 140v2h2v-2zM329 80v2h3v-2zM329 114v3h3v-3zM329 133v2h3v-2zM332 78v2h2v-2zM332 151v2h2v-2zM334 130v3h2v-3zM339 121v3h2v-3zM339 128v2h2v-2zM339 133v4h2v-4zM341 119v2h2v-2zM341 124v2h2v-2zM343 112v2h3v-2zM343 130v3h3v-3zM346 149v2h2v-2zM348 133v2h3v-2zM351 82v5h2v-5zM351 117v2h2v-2zM351 133v2h2v-2zM353 133v2h2v-2zM353 149v2h2v-2zM355 133v4h3v-4zM358 82v2h2v-2zM358 133v2h2v-2zM360 133v2h2v-2zM360 146v3h2v-3zM362 84v3h3v-3zM362 119v2h3v-2zM362 130v3h3v-3zM362 146v3h3v-3zM362 179v1h3v-1zM365 128v2h2v-2zM367 121v3h3v-3zM370 133v2h2v-2zM372 82v2h2v-2zM374 117v2h3v-2zM374 126v4h3v-4zM377 112v2h2v-2zM377 126v2h2v-2zM377 130v3h2v-3zM379 82v2h2v-2zM379 117v2h2v-2zM379 144v2h2v-2zM381 80v2h3v-2zM381 124v2h3v-2zM386 133v4h2v-4zM386 142v2h2v-2zM391 82v2h2v-2zM391 137v3h2v-3zM393 82v2h3v-2zM393 128v2h3v-2zM393 137v3h3v-3zM396 121v3h2v-3zM396 176v3h2v-3zM398 124v2h2v-2zM400 119v2h3v-2zM400 133v2h3v-2zM403 82v2h2v-2zM403 126v2h2v-2zM403 133v2h2v-2zM403 140v2h2v-2zM407 84v3h3v-3zM407 130v3h3v-3zM407 135v2h3v-2zM410 135v2h2v-2zM412 121v5h3v-5zM412 128v2h3v-2zM415 84v3h2v-3zM415 121v3h2v-3zM415 126v2h2v-2zM415 133v2h2v-2zM422 135v2h2v-2zM426 82v2h3v-2zM426 135v2h3v-2zM429 121v3h2v-3zM429 133v2h2v-2zM431 80v7h3v-7zM431 135v2h3v-2zM436 119v2h2v-2zM436 128v2h2v-2zM436 176v4h2v-4zM438 179v1h3v-1zM443 84v3h2v-3zM445 84v3h3v-3zM448 84v3h2v-3zM448 172v2h2v-2zM450 170v2h3v-2zM455 84v3h2v-3zM455 167v5h2v-5zM457 117v7h3v-7zM457 126v2h3v-2zM460 121v3h2v-3zM460 126v2h2v-2zM460 160v3h2v-3zM462 117v2h2v-2zM462 121v3h2v-3zM464 121v3h3v-3zM464 158v2h3v-2zM467 117v2h2v-2zM467 121v3h2v-3zM469 153v3h3v-3zM472 153v3h2v-3zM474 87v2h2v-2zM476 121v3h3v-3zM476 151v2h3v-2zM481 87v2h2v-2zM483 146v5h3v-5zM486 121v3h2v-3zM490 87v2h3v-2zM490 142v2h3v-2zM493 119v2h2v-2zM498 119v5h2v-5zM500 89v2h2v-2zM500 119v2h2v-2zM500 142v2h2v-2zM502 117v2h3v-2zM505 140v2h2v-2zM507 140v2h2v-2zM521 91v3h3v-3zM526 137v3h2v-3zM528 89v2h3v-2zM531 89v2h2v-2zM531 137v3h2v-3zM533 89v5h3v-5zM533 137v3h3v-3zM536 89v2h2v-2zM538 119v2h2v-2zM540 91v3h3v-3zM543 91v3h2v-3zM545 89v2h2v-2zM547 89v2h3v-2zM550 119v5h2v-5zM552 89v2h3v-2zM555 119v2h2v-2zM557 117v2h2v-2zM559 91v3h3v-3zM562 89v2h2v-2zM566 91v3h3v-3zM571 119v2h3v-2zM574 119v2h2v-2zM578 89v2h3v-2zM583 91v3h2v-3zM590 91v3h2v-3zM592 119v2h3v-2zM595 89v2h2v-2zM595 114v3h2v-3zM595 119v2h2v-2zM597 119v2h3v-2zM604 91v3h3v-3zM607 124v2h2v-2zM611 91v3h3v-3zM614 89v2h2v-2zM614 117v2h2v-2zM616 119v2h3v-2zM619 119v2h2v-2zM621 117v2h2v-2zM621 124v2h2v-2zM623 91v3h3v-3zM623 119v2h3v-2zM626 91v3h2v-3zM626 121v3h2v-3zM630 117v2h3v-2zM633 117v2h2v-2zM635 94v2h3v-2zM640 119v2h2v-2zM640 124v2h2v-2zM642 94v4h3v-4zM645 96v2h2v-2zM645 117v4h2v-4zM647 98v2h2v-2zM647 114v3h2v-3zM649 94v2h3v-2zM654 96v4h3v-4zM657 94v2h2v-2zM657 114v3h2v-3zM673 94v2h3v-2zM673 117v2h3v-2zM676 114v3h2v-3zM678 94v4h2v-4zM680 117v2h3v-2zM683 96v2h2v-2zM683 117v2h2v-2zM685 96v2h2v-2zM685 117v2h2v-2zM690 91v3h2v-3zM690 117v4h2v-4zM692 96v2h2v-2zM694 96v2h3v-2zM694 103v2h3v-2zM697 98v2h2v-2zM699 112v2h3v-2zM702 105v5h2v-5zM704 98v5h2v-5zM704 105v2h2v-2zM704 117v2h2v-2zM706 96v2h1v-2zM706 103v4h1v-4zM706 110v2h1v-2zM706 119v2h1v-2z"/>
<path fill="#93ff00" d="M142 121v3h2v-3zM142 128v2h2v-2zM142 156v7h2v-7zM144 96v7h3v-7zM144 121v3h3v-3zM144 128v7h3v-7zM144 146v3h3v-3zM147 98v2h2v-2zM147 130v3h2v-3zM147 137v5h2v-5zM149 98v2h2v-2zM149 110v2h2v-2zM149 126v2h2v-2zM149 144v2h2v-2zM151 144v5h3v-5zM154 117v2h2v-2zM154 133v2h2v-2zM154 146v5h2v-5zM154 153v3h2v-3zM156 107v3h2v-3zM156 117v2h2v-2zM156 121v7h2v-7zM156 137v3h2v-3zM156 153v3h2v-3zM156 165v2h2v-2zM158 103v2h3v-2zM158 117v2h3v-2zM158 130v3h3v-3zM158 153v3h3v-3zM161 100v3h2v-3zM161 133v2h2v-2zM161 140v4h2v-4zM161 151v2h2v-2zM163 96v2h3v-2zM163 119v2h3v-2zM166 100v3h2v-3zM166 114v3h2v-3zM166 130v3h2v-3zM166 146v3h2v-3zM166 151v2h2v-2zM166 156v2h2v-2zM168 105v2h2v-2zM168 112v2h2v-2zM168 119v5h2v-5zM168 142v2h2v-2zM168 167v3h2v-3zM170 100v3h3v-3zM170 114v3h3v-3zM170 119v2h3v-2zM170 144v2h3v-2zM170 156v2h3v-2zM170 165v2h3v-2zM173 96v2h2v-2zM173 103v2h2v-2zM173 117v2h2v-2zM173 151v2h2v-2zM175 98v2h2v-2zM177 107v3h3v-3zM177 128v2h3v-2zM177 133v2h3v-2zM180 112v2h2v-2zM180 121v3h2v-3zM180 135v2h2v-2zM182 103v4h2v-4zM182 151v5h2v-5zM184 100v3h3v-3zM184 114v3h3v-3zM184 135v2h3v-2zM189 71v2h3v-2zM189 117v2h3v-2zM192 114v5h2v-5zM192 135v2h2v-2zM192 144v2h2v-2zM194 105v2h2v-2zM194 110v2h2v-2zM194 114v3h2v-3zM194 135v5h2v-5zM194 179v1h2v-1zM196 71v2h3v-2zM196 105v2h3v-2zM196 110v2h3v-2zM196 114v3h3v-3zM196 121v3h3v-3zM196 142v2h3v-2zM196 176v3h3v-3zM199 73v2h2v-2zM199 107v3h2v-3zM199 112v2h2v-2zM199 130v3h2v-3zM199 144v2h2v-2zM199 176v3h2v-3zM203 114v3h3v-3zM206 126v2h2v-2zM206 133v2h2v-2zM206 142v2h2v-2zM208 75v3h3v-3zM213 135v2h2v-2zM213 146v3h2v-3zM218 75v3h2v-3zM218 119v2h2v-2zM218 135v2h2v-2zM218 144v2h2v-2zM222 75v3h3v-3zM222 110v2h3v-2zM225 114v3h2v-3zM227 126v2h3v-2zM234 78v2h3v-2zM237 75v3h2v-3zM237 137v3h2v-3zM239 117v4h2v-4zM239 130v3h2v-3zM239 140v2h2v-2zM241 137v3h3v-3zM244 78v2h2v-2zM246 151v2h3v-2zM251 78v2h2v-2zM251 149v4h2v-4zM253 78v2h3v-2zM253 137v3h3v-3zM253 149v2h3v-2zM256 128v2h2v-2zM258 110v2h2v-2zM258 114v3h2v-3zM258 121v5h2v-5zM258 130v3h2v-3zM258 135v2h2v-2zM260 135v5h3v-5zM260 158v2h3v-2zM263 140v2h2v-2zM265 105v2h3v-2zM265 110v2h3v-2zM265 172v2h3v-2zM268 114v3h2v-3zM268 121v3h2v-3zM270 137v3h2v-3zM270 156v2h2v-2zM272 112v2h3v-2zM275 78v2h2v-2zM275 117v2h2v-2zM275 128v2h2v-2zM277 124v2h2v-2zM279 114v3h3v-3zM279 126v2h3v-2zM279 133v2h3v-2zM279 158v2h3v-2zM282 137v3h2v-3zM284 119v2h2v-2zM284 135v2h2v-2zM284 158v2h2v-2zM286 80v2h3v-2zM286 112v2h3v-2zM286 130v3h3v-3zM289 112v2h2v-2zM289 117v4h2v-4zM291 112v2h3v-2zM294 80v2h2v-2zM294 126v2h2v-2zM294 140v2h2v-2zM294 156v4h2v-4zM296 110v2h2v-2zM296 114v3h2v-3zM296 124v4h2v-4zM296 137v3h2v-3zM298 80v2h3v-2zM298 126v7h3v-7zM301 114v3h2v-3zM301 119v2h2v-2zM301 124v2h2v-2zM303 82v2h2v-2zM303 114v3h2v-3zM303 158v2h2v-2zM305 119v2h3v-2zM305 124v2h3v-2zM308 80v2h2v-2zM308 112v5h2v-5zM308 135v2h2v-2zM310 114v3h3v-3zM310 128v2h3v-2zM310 156v2h3v-2zM313 80v2h2v-2zM313 114v3h2v-3zM313 130v10h2v-10zM315 80v2h2v-2zM315 114v5h2v-5zM315 133v2h2v-2zM320 82v2h2v-2zM320 114v3h2v-3zM320 119v2h2v-2zM324 80v4h3v-4zM324 119v2h3v-2zM324 126v2h3v-2zM327 80v2h2v-2zM329 82v2h3v-2zM332 82v2h2v-2zM332 133v7h2v-7zM334 82v2h2v-2zM334 114v3h2v-3zM334 135v2h2v-2zM336 80v2h3v-2zM336 124v2h3v-2zM336 135v2h3v-2zM336 151v2h3v-2zM339 130v3h2v-3zM341 114v3h2v-3zM341 130v3h2v-3zM341 135v2h2v-2zM346 130v3h2v-3zM348 112v2h3v-2zM348 117v2h3v-2zM348 130v3h3v-3zM348 149v2h3v-2zM351 119v2h2v-2zM351 149v2h2v-2zM353 112v2h2v-2zM353 124v2h2v-2zM355 82v2h3v-2zM358 130v3h2v-3zM360 82v2h2v-2zM360 114v3h2v-3zM360 119v2h2v-2zM362 112v2h3v-2zM362 117v2h3v-2zM362 121v3h3v-3zM362 133v2h3v-2zM365 87v2h2v-2zM365 119v2h2v-2zM365 126v2h2v-2zM365 130v3h2v-3zM365 146v3h2v-3zM367 128v2h3v-2zM367 146v3h3v-3zM370 121v3h2v-3zM370 130v3h2v-3zM372 117v2h2v-2zM374 84v3h3v-3zM374 119v7h3v-7zM377 119v2h2v-2zM377 179v1h2v-1zM379 87v2h2v-2zM381 130v3h3v-3zM381 144v2h3v-2zM381 179v1h3v-1zM384 119v2h2v-2zM384 124v2h2v-2zM384 128v5h2v-5zM384 144v2h2v-2zM388 84v3h3v-3zM388 130v3h3v-3zM391 126v2h2v-2zM391 133v4h2v-4zM393 119v2h3v-2zM396 84v3h2v-3zM396 110v2h2v-2zM396 114v3h2v-3zM396 124v2h2v-2zM398 117v2h2v-2zM400 135v5h3v-5zM403 84v3h2v-3zM403 121v3h2v-3zM405 114v3h2v-3zM405 126v2h2v-2zM405 133v2h2v-2zM405 140v4h2v-4zM407 119v2h3v-2zM410 84v3h2v-3zM410 126v4h2v-4zM410 133v2h2v-2zM412 84v3h3v-3zM412 112v5h3v-5zM412 135v2h3v-2zM412 140v2h3v-2zM415 119v2h2v-2zM415 135v2h2v-2zM417 82v2h2v-2zM417 133v2h2v-2zM419 130v3h3v-3zM422 140v2h2v-2zM424 133v2h2v-2zM424 140v2h2v-2zM426 119v2h3v-2zM426 130v5h3v-5zM429 87v2h2v-2zM431 133v2h3v-2zM431 137v3h3v-3zM434 128v5h2v-5zM436 121v5h2v-5zM436 130v3h2v-3zM438 117v2h3v-2zM441 130v3h2v-3zM441 172v2h2v-2zM443 117v2h2v-2zM443 128v2h2v-2zM443 172v2h2v-2zM445 119v2h3v-2zM445 126v2h3v-2zM445 130v3h3v-3zM445 170v2h3v-2zM448 124v2h2v-2zM450 124v2h3v-2zM450 130v3h3v-3zM453 119v2h2v-2zM453 165v2h2v-2zM455 119v7h2v-7zM457 84v3h3v-3zM457 124v2h3v-2zM460 82v2h2v-2zM464 119v2h3v-2zM467 87v2h2v-2zM467 153v3h2v-3zM472 84v5h2v-5zM472 117v4h2v-4zM472 151v2h2v-2zM474 112v2h2v-2zM474 119v7h2v-7zM474 151v2h2v-2zM476 119v2h3v-2zM476 149v2h3v-2zM479 117v2h2v-2zM479 151v2h2v-2zM481 117v2h2v-2zM483 87v2h3v-2zM486 87v2h2v-2zM486 144v2h2v-2zM488 146v3h2v-3zM490 89v2h3v-2zM493 114v3h2v-3zM493 142v2h2v-2zM495 117v2h3v-2zM495 124v2h3v-2zM498 114v3h2v-3zM502 94v2h3v-2zM502 124v2h3v-2zM502 137v3h3v-3zM505 91v3h2v-3zM505 124v2h2v-2zM509 89v2h3v-2zM509 121v3h3v-3zM509 140v2h3v-2zM514 91v3h3v-3zM521 135v2h3v-2zM524 91v3h2v-3zM524 135v2h2v-2zM526 135v2h2v-2zM531 91v3h2v-3zM531 133v2h2v-2zM536 119v5h2v-5zM538 91v3h2v-3zM543 117v2h2v-2zM543 124v2h2v-2zM545 91v3h2v-3zM547 117v2h3v-2zM557 119v5h2v-5zM562 119v2h2v-2zM566 94v2h3v-2zM569 119v2h2v-2zM571 91v3h3v-3zM571 121v3h3v-3zM574 91v3h2v-3zM576 114v5h2v-5zM585 91v3h3v-3zM588 121v3h2v-3zM590 119v5h2v-5zM595 94v2h2v-2zM600 119v2h2v-2zM602 117v2h2v-2zM607 114v3h2v-3zM609 117v2h2v-2zM614 91v3h2v-3zM614 119v5h2v-5zM619 121v3h2v-3zM621 121v3h2v-3zM623 117v2h3v-2zM628 94v2h2v-2zM630 94v2h3v-2zM630 114v3h3v-3zM635 114v3h3v-3zM638 114v3h2v-3zM640 114v3h2v-3zM649 117v2h3v-2zM652 91v5h2v-5zM654 103v2h3v-2zM654 117v2h3v-2zM657 96v2h2v-2zM659 94v2h2v-2zM661 117v2h3v-2zM661 121v3h3v-3zM664 114v3h2v-3zM666 114v3h2v-3zM671 119v5h2v-5zM685 114v3h2v-3zM687 124v2h3v-2zM692 117v2h2v-2zM697 100v3h2v-3zM697 119v2h2v-2zM699 96v4h3v-4zM702 110v4h2v-4zM704 110v2h2v-2zM706 107v3h1v-3zM706 114v3h1v-3z"/>
<path fill="#beff00" d="M142 100v3h2v-3zM142 107v3h2v-3zM142 112v9h2v-9zM142 124v2h2v-2zM142 137v3h2v-3zM142 144v2h2v-2zM142 151v2h2v-2zM144 124v4h3v-4zM147 100v7h2v-7zM147 126v2h2v-2zM147 151v2h2v-2zM149 89v2h2v-2zM149 103v2h2v-2zM149 114v3h2v-3zM149 119v2h2v-2zM149 128v7h2v-7zM149 137v3h2v-3zM149 153v3h2v-3zM151 105v2h3v-2zM151 153v3h3v-3zM151 158v2h3v-2zM151 172v2h3v-2zM154 103v4h2v-4zM154 112v5h2v-5zM154 121v7h2v-7zM154 140v2h2v-2zM154 144v2h2v-2zM154 167v3h2v-3zM154 172v2h2v-2zM156 103v2h2v-2zM156 110v2h2v-2zM156 114v3h2v-3zM156 128v2h2v-2zM156 133v2h2v-2zM156 142v2h2v-2zM156 149v2h2v-2zM156 163v2h2v-2zM156 167v3h2v-3zM156 176v3h2v-3zM158 98v2h3v-2zM158 133v2h3v-2zM158 137v3h3v-3zM158 146v3h3v-3zM158 151v2h3v-2zM161 103v2h2v-2zM161 121v3h2v-3zM161 163v2h2v-2zM163 128v2h3v-2zM163 135v2h3v-2zM166 105v2h2v-2zM166 126v2h2v-2zM166 140v2h2v-2zM168 107v5h2v-5zM168 128v5h2v-5zM168 140v2h2v-2zM168 144v2h2v-2zM168 165v2h2v-2zM170 103v2h3v-2zM170 107v3h3v-3zM170 124v4h3v-4zM170 133v2h3v-2zM170 158v5h3v-5zM173 105v5h2v-5zM173 130v3h2v-3zM173 140v2h2v-2zM173 144v2h2v-2zM173 149v2h2v-2zM175 124v2h2v-2zM177 103v4h3v-4zM177 137v3h3v-3zM177 149v2h3v-2zM180 107v5h2v-5zM180 117v2h2v-2zM180 124v4h2v-4zM180 144v5h2v-5zM180 158v2h2v-2zM182 114v3h2v-3zM182 119v2h2v-2zM182 130v3h2v-3zM182 137v3h2v-3zM182 144v2h2v-2zM182 174v2h2v-2zM184 107v3h3v-3zM184 112v2h3v-2zM184 124v2h3v-2zM184 133v2h3v-2zM184 142v2h3v-2zM184 149v2h3v-2zM187 112v2h2v-2zM189 130v3h3v-3zM189 142v2h3v-2zM192 126v2h2v-2zM192 179v1h2v-1zM194 112v2h2v-2zM194 119v2h2v-2zM194 142v4h2v-4zM196 107v3h3v-3zM196 112v2h3v-2zM196 117v4h3v-4zM196 128v7h3v-7zM196 140v2h3v-2zM199 103v2h2v-2zM199 117v2h2v-2zM201 140v2h2v-2zM203 119v2h3v-2zM203 124v2h3v-2zM203 140v4h3v-4zM206 114v7h2v-7zM208 128v2h3v-2zM211 112v2h2v-2zM213 103v2h2v-2zM213 144v2h2v-2zM218 110v2h2v-2zM218 124v2h2v-2zM222 133v2h3v-2zM225 75v5h2v-5zM225 121v3h2v-3zM225 165v2h2v-2zM227 137v3h3v-3zM230 75v3h2v-3zM230 121v3h2v-3zM232 105v2h2v-2zM232 151v2h2v-2zM237 78v2h2v-2zM237 110v2h2v-2zM237 144v2h2v-2zM237 149v2h2v-2zM239 146v3h2v-3zM241 78v2h3v-2zM244 142v2h2v-2zM249 78v2h2v-2zM249 140v2h2v-2zM251 112v2h2v-2zM251 137v3h2v-3zM253 153v3h3v-3zM256 82v2h2v-2zM256 114v3h2v-3zM256 124v2h2v-2zM256 158v2h2v-2zM256 167v3h2v-3zM258 105v5h2v-5zM258 128v2h2v-2zM258 163v2h2v-2zM260 119v5h3v-5zM260 133v2h3v-2zM263 78v2h2v-2zM263 133v2h2v-2zM263 137v3h2v-3zM263 158v2h2v-2zM265 103v2h3v-2zM265 107v3h3v-3zM265 126v2h3v-2zM265 130v3h3v-3zM265 174v2h3v-2zM268 107v5h2v-5zM268 117v4h2v-4zM268 126v2h2v-2zM268 135v2h2v-2zM268 158v2h2v-2zM270 112v2h2v-2zM270 124v2h2v-2zM272 114v3h3v-3zM272 121v5h3v-5zM272 128v2h3v-2zM272 135v5h3v-5zM272 158v2h3v-2zM272 174v2h3v-2zM275 82v2h2v-2zM275 114v3h2v-3zM275 119v7h2v-7zM275 133v2h2v-2zM275 158v2h2v-2zM277 80v2h2v-2zM277 121v3h2v-3zM277 137v3h2v-3zM279 80v2h3v-2zM279 110v2h3v-2zM279 117v2h3v-2zM282 78v2h2v-2zM282 110v2h2v-2zM282 158v2h2v-2zM284 80v2h2v-2zM284 124v2h2v-2zM284 130v3h2v-3zM286 126v4h3v-4zM289 80v2h2v-2zM289 105v2h2v-2zM289 121v3h2v-3zM289 133v2h2v-2zM291 114v3h3v-3zM294 114v3h2v-3zM294 124v2h2v-2zM294 130v3h2v-3zM296 82v2h2v-2zM296 135v2h2v-2zM298 82v2h3v-2zM298 112v2h3v-2zM298 135v2h3v-2zM298 158v2h3v-2zM301 117v2h2v-2zM301 126v4h2v-4zM303 80v2h2v-2zM303 117v4h2v-4zM303 135v2h2v-2zM305 110v2h3v-2zM305 117v2h3v-2zM305 121v3h3v-3zM305 128v2h3v-2zM305 137v3h3v-3zM305 156v2h3v-2zM308 82v2h2v-2zM308 119v2h2v-2zM308 124v6h2v-6zM308 133v2h2v-2zM308 156v2h2v-2zM310 130v3h3v-3zM313 82v2h2v-2zM313 112v2h2v-2zM313 119v2h2v-2zM315 112v2h2v-2zM315 128v2h2v-2zM315 137v3h2v-3zM317 82v2h3v-2zM317 130v5h3v-5zM320 117v2h2v-2zM320 121v3h2v-3zM320 128v2h2v-2zM322 80v2h2v-2zM322 124v2h2v-2zM324 84v3h3v-3zM324 114v3h3v-3zM324 121v5h3v-5zM324 130v3h3v-3zM324 153v3h3v-3zM327 112v2h2v-2zM329 130v3h3v-3zM332 80v2h2v-2zM332 128v2h2v-2zM334 110v2h2v-2zM334 121v3h2v-3zM334 128v2h2v-2zM334 133v2h2v-2zM336 82v2h3v-2zM339 82v2h2v-2zM339 119v2h2v-2zM341 117v2h2v-2zM343 121v9h3v-9zM343 133v2h3v-2zM343 151v2h3v-2zM346 82v2h2v-2zM348 114v3h3v-3zM348 119v2h3v-2zM348 126v4h3v-4zM351 124v4h2v-4zM353 84v3h2v-3zM353 110v2h2v-2zM353 119v2h2v-2zM353 126v2h2v-2zM355 119v5h3v-5zM358 84v3h2v-3zM358 110v2h2v-2zM358 119v2h2v-2zM360 112v2h2v-2zM360 130v3h2v-3zM362 114v3h3v-3zM362 124v2h3v-2zM365 114v3h2v-3zM365 121v3h2v-3zM365 174v2h2v-2zM367 112v5h3v-5zM367 126v2h3v-2zM370 114v5h2v-5zM372 114v3h2v-3zM372 119v2h2v-2zM372 126v4h2v-4zM374 176v4h3v-4zM377 124v2h2v-2zM379 114v3h2v-3zM381 84v3h3v-3zM381 119v2h3v-2zM381 126v2h3v-2zM384 84v3h2v-3zM384 117v2h2v-2zM384 121v3h2v-3zM386 144v2h2v-2zM388 114v5h3v-5zM388 128v2h3v-2zM391 144v2h2v-2zM393 84v3h3v-3zM393 130v5h3v-5zM396 126v2h2v-2zM396 174v2h2v-2zM398 114v3h2v-3zM398 126v2h2v-2zM398 142v2h2v-2zM400 112v2h3v-2zM400 121v5h3v-5zM403 135v2h2v-2zM405 179v1h2v-1zM407 117v2h3v-2zM407 133v2h3v-2zM410 121v3h2v-3zM410 130v3h2v-3zM410 140v2h2v-2zM410 179v1h2v-1zM412 87v2h3v-2zM412 126v2h3v-2zM412 130v3h3v-3zM412 142v2h3v-2zM415 130v3h2v-3zM415 137v5h2v-5zM417 84v3h2v-3zM417 117v4h2v-4zM419 121v3h3v-3zM419 126v2h3v-2zM419 133v2h3v-2zM419 176v3h3v-3zM422 84v3h2v-3zM422 114v3h2v-3zM422 179v1h2v-1zM424 84v3h2v-3zM424 121v9h2v-9zM426 137v3h3v-3zM429 84v3h2v-3zM429 117v2h2v-2zM429 128v5h2v-5zM431 121v3h3v-3zM434 117v2h2v-2zM434 121v5h2v-5zM436 117v2h2v-2zM436 135v2h2v-2zM438 121v3h3v-3zM438 133v4h3v-4zM438 174v5h3v-5zM441 84v3h2v-3zM441 119v2h2v-2zM441 124v2h2v-2zM441 128v2h2v-2zM441 135v2h2v-2zM443 121v3h2v-3zM443 130v3h2v-3zM445 112v2h3v-2zM445 117v2h3v-2zM445 124v2h3v-2zM448 82v2h2v-2zM448 130v3h2v-3zM448 170v2h2v-2zM450 84v3h3v-3zM453 87v4h2v-4zM453 112v2h2v-2zM453 117v2h2v-2zM455 126v2h2v-2zM457 112v2h3v-2zM457 163v2h3v-2zM460 124v2h2v-2zM460 128v2h2v-2zM462 84v3h2v-3zM462 124v4h2v-4zM464 84v5h3v-5zM464 117v2h3v-2zM464 156v2h3v-2zM467 124v2h2v-2zM467 151v2h2v-2zM469 87v2h3v-2zM469 124v2h3v-2zM474 114v3h2v-3zM474 149v2h2v-2zM476 87v2h3v-2zM476 117v2h3v-2zM476 126v2h3v-2zM479 84v5h2v-5zM479 121v3h2v-3zM481 89v2h2v-2zM481 144v5h2v-5zM483 84v3h3v-3zM483 121v3h3v-3zM486 114v5h2v-5zM486 142v2h2v-2zM486 146v3h2v-3zM488 87v4h2v-4zM488 114v3h2v-3zM490 121v5h3v-5zM490 140v2h3v-2zM493 91v3h2v-3zM493 117v2h2v-2zM493 140v2h2v-2zM495 121v3h3v-3zM495 137v5h3v-5zM498 140v2h2v-2zM500 114v3h2v-3zM500 121v3h2v-3zM500 140v2h2v-2zM502 135v2h3v-2zM505 117v2h2v-2zM505 137v3h2v-3zM507 137v3h2v-3zM509 137v3h3v-3zM512 89v2h2v-2zM512 119v2h2v-2zM512 140v2h2v-2zM514 119v5h3v-5zM514 137v3h3v-3zM519 91v3h2v-3zM526 119v2h2v-2zM528 91v3h3v-3zM528 135v2h3v-2zM531 121v3h2v-3zM531 126v2h2v-2zM536 91v3h2v-3zM540 117v4h3v-4zM545 117v2h2v-2zM547 91v3h3v-3zM547 114v3h3v-3zM550 91v3h2v-3zM552 91v3h3v-3zM552 117v2h3v-2zM557 91v3h2v-3zM562 91v3h2v-3zM564 91v3h2v-3zM569 91v3h2v-3zM569 121v3h2v-3zM578 91v3h3v-3zM581 91v5h2v-5zM581 117v2h2v-2zM583 94v2h2v-2zM583 117v2h2v-2zM585 117v2h3v-2zM588 91v3h2v-3zM590 117v2h2v-2zM595 96v2h2v-2zM597 94v2h3v-2zM597 117v2h3v-2zM600 91v3h2v-3zM602 114v3h2v-3zM604 96v2h3v-2zM604 117v2h3v-2zM607 96v2h2v-2zM616 91v3h3v-3zM619 117v2h2v-2zM621 94v2h2v-2zM623 94v4h3v-4zM626 94v2h2v-2zM628 119v2h2v-2zM633 98v2h2v-2zM635 96v2h3v-2zM638 98v2h2v-2zM638 105v2h2v-2zM640 94v2h2v-2zM645 94v2h2v-2zM645 114v3h2v-3zM649 119v2h3v-2zM654 105v2h3v-2zM654 110v2h3v-2zM654 114v3h3v-3zM657 100v3h2v-3zM659 114v5h2v-5zM661 96v4h3v-4zM664 98v2h2v-2zM664 103v2h2v-2zM666 96v4h2v-4zM666 103v4h2v-4zM666 110v2h2v-2zM671 96v2h2v-2zM673 96v2h3v-2zM673 114v3h3v-3zM676 98v2h2v-2zM676 103v2h2v-2zM678 98v2h2v-2zM680 100v3h3v-3zM683 103v2h2v-2zM683 114v3h2v-3zM685 100v3h2v-3zM685 110v2h2v-2zM687 103v2h3v-2zM687 110v2h3v-2zM694 105v2h3v-2zM694 110v2h3v-2zM694 114v3h3v-3zM697 103v2h2v-2zM697 110v2h2v-2zM697 114v3h2v-3zM699 100v5h3v-5zM699 110v2h3v-2zM702 100v3h2v-3z"/>
<path fill="#eaff00" d="M142 135v2h2v-2zM142 142v2h2v-2zM142 146v5h2v-5zM142 153v3h2v-3zM144 103v7h3v-7zM144 114v7h3v-7zM144 135v2h3v-2zM144 140v2h3v-2zM144 144v2h3v-2zM144 151v7h3v-7zM147 107v3h2v-3zM147 119v7h2v-7zM147 128v2h2v-2zM147 153v3h2v-3zM147 160v3h2v-3zM149 100v3h2v-3zM149 105v2h2v-2zM149 121v5h2v-5zM149 140v4h2v-4zM149 146v3h2v-3zM149 156v2h2v-2zM149 160v3h2v-3zM149 172v2h2v-2zM151 110v2h3v-2zM151 114v3h3v-3zM151 119v5h3v-5zM151 137v7h3v-7zM151 149v4h3v-4zM151 156v2h3v-2zM154 100v3h2v-3zM154 107v5h2v-5zM154 135v5h2v-5zM154 142v2h2v-2zM154 158v5h2v-5zM154 179v1h2v-1zM156 112v2h2v-2zM156 130v3h2v-3zM156 151v2h2v-2zM156 174v2h2v-2zM158 100v3h3v-3zM158 112v5h3v-5zM158 126v4h3v-4zM158 160v3h3v-3zM161 105v2h2v-2zM161 112v5h2v-5zM161 124v6h2v-6zM161 146v3h2v-3zM161 156v2h2v-2zM163 105v5h3v-5zM163 112v2h3v-2zM163 117v2h3v-2zM163 121v3h3v-3zM163 130v3h3v-3zM163 144v2h3v-2zM163 156v4h3v-4zM163 163v9h3v-9zM166 107v3h2v-3zM166 119v2h2v-2zM166 133v7h2v-7zM166 142v2h2v-2zM166 160v3h2v-3zM166 165v2h2v-2zM166 176v3h2v-3zM168 117v2h2v-2zM168 124v4h2v-4zM168 133v2h2v-2zM168 149v2h2v-2zM168 153v3h2v-3zM168 158v5h2v-5zM170 117v2h3v-2zM170 128v5h3v-5zM170 135v2h3v-2zM170 167v5h3v-5zM173 98v2h2v-2zM173 110v4h2v-4zM173 124v4h2v-4zM173 137v3h2v-3zM173 158v2h2v-2zM173 163v2h2v-2zM175 105v5h2v-5zM175 126v2h2v-2zM175 130v3h2v-3zM175 135v2h2v-2zM177 117v2h3v-2zM177 153v3h3v-3zM177 160v3h3v-3zM180 151v5h2v-5zM180 172v2h2v-2zM182 110v4h2v-4zM182 124v2h2v-2zM182 133v4h2v-4zM182 146v5h2v-5zM182 158v2h2v-2zM182 163v2h2v-2zM182 167v3h2v-3zM182 172v2h2v-2zM184 105v2h3v-2zM184 128v2h3v-2zM184 144v5h3v-5zM184 151v5h3v-5zM184 167v3h3v-3zM187 68v3h2v-3zM187 128v2h2v-2zM187 174v2h2v-2zM189 135v2h3v-2zM189 140v2h3v-2zM189 176v4h3v-4zM192 107v3h2v-3zM192 124v2h2v-2zM192 128v2h2v-2zM192 133v2h2v-2zM192 140v2h2v-2zM192 176v3h2v-3zM194 73v2h2v-2zM194 121v7h2v-7zM194 130v3h2v-3zM194 140v2h2v-2zM194 167v3h2v-3zM194 174v2h2v-2zM196 73v2h3v-2zM196 126v2h3v-2zM196 137v3h3v-3zM199 119v5h2v-5zM199 140v2h2v-2zM201 75v3h2v-3zM201 103v2h2v-2zM201 133v2h2v-2zM201 137v3h2v-3zM201 142v2h2v-2zM201 146v3h2v-3zM203 75v5h3v-5zM203 105v2h3v-2zM203 110v2h3v-2zM203 121v3h3v-3zM203 126v2h3v-2zM203 130v7h3v-7zM203 144v2h3v-2zM203 174v2h3v-2zM206 75v3h2v-3zM206 176v3h2v-3zM208 114v3h3v-3zM211 133v2h2v-2zM211 137v3h2v-3zM211 179v1h2v-1zM213 75v5h2v-5zM213 107v3h2v-3zM213 130v3h2v-3zM213 140v2h2v-2zM213 151v2h2v-2zM215 75v3h3v-3zM218 107v3h2v-3zM218 114v3h2v-3zM218 133v2h2v-2zM218 149v2h2v-2zM218 179v1h2v-1zM220 75v3h2v-3zM220 112v5h2v-5zM220 133v2h2v-2zM220 140v2h2v-2zM222 105v2h3v-2zM222 117v2h3v-2zM225 107v3h2v-3zM225 119v2h2v-2zM225 128v2h2v-2zM227 103v2h3v-2zM227 110v9h3v-9zM227 135v2h3v-2zM230 114v3h2v-3zM232 114v3h2v-3zM232 119v7h2v-7zM232 146v3h2v-3zM234 80v2h3v-2zM234 112v2h3v-2zM234 124v2h3v-2zM234 133v2h3v-2zM234 142v2h3v-2zM234 149v4h3v-4zM237 117v2h2v-2zM237 135v2h2v-2zM237 142v2h2v-2zM237 156v2h2v-2zM239 80v2h2v-2zM239 107v3h2v-3zM239 124v4h2v-4zM239 142v2h2v-2zM241 114v3h3v-3zM241 130v3h3v-3zM241 135v2h3v-2zM241 142v4h3v-4zM241 153v3h3v-3zM244 121v3h2v-3zM244 149v7h2v-7zM246 78v2h3v-2zM246 110v4h3v-4zM246 140v4h3v-4zM249 112v5h2v-5zM249 119v5h2v-5zM249 128v2h2v-2zM249 137v3h2v-3zM249 142v2h2v-2zM249 151v2h2v-2zM249 165v2h2v-2zM251 80v2h2v-2zM251 110v2h2v-2zM251 114v3h2v-3zM251 119v7h2v-7zM251 128v2h2v-2zM251 140v4h2v-4zM251 176v3h2v-3zM253 82v2h3v-2zM253 112v2h3v-2zM253 124v2h3v-2zM253 142v2h3v-2zM253 156v2h3v-2zM256 119v2h2v-2zM256 130v3h2v-3zM256 137v3h2v-3zM258 117v4h2v-4zM258 126v2h2v-2zM258 167v3h2v-3zM258 174v5h2v-5zM260 80v4h3v-4zM260 107v7h3v-7zM260 124v4h3v-4zM263 80v2h2v-2zM263 110v2h2v-2zM263 130v3h2v-3zM263 135v2h2v-2zM265 84v3h3v-3zM265 112v5h3v-5zM265 160v3h3v-3zM265 179v1h3v-1zM268 105v2h2v-2zM268 112v2h2v-2zM268 163v2h2v-2zM270 114v3h2v-3zM270 119v5h2v-5zM270 133v2h2v-2zM272 107v3h3v-3zM272 119v2h3v-2zM275 107v5h2v-5zM277 107v3h2v-3zM277 117v4h2v-4zM279 107v3h3v-3zM279 135v5h3v-5zM279 160v3h3v-3zM282 80v2h2v-2zM284 110v2h2v-2zM284 167v3h2v-3zM284 172v2h2v-2zM286 82v2h3v-2zM286 110v2h3v-2zM286 117v2h3v-2zM286 124v2h3v-2zM289 82v2h2v-2zM289 107v3h2v-3zM289 128v2h2v-2zM289 158v2h2v-2zM289 170v2h2v-2zM289 174v2h2v-2zM291 124v2h3v-2zM291 135v2h3v-2zM294 112v2h2v-2zM294 117v4h2v-4zM294 128v2h2v-2zM296 107v3h2v-3zM296 176v4h2v-4zM298 107v3h3v-3zM298 114v3h3v-3zM301 82v2h2v-2zM301 135v2h2v-2zM301 158v2h2v-2zM303 107v3h2v-3zM303 121v3h2v-3zM305 114v3h3v-3zM305 126v2h3v-2zM305 130v3h3v-3zM308 107v3h2v-3zM308 117v2h2v-2zM308 121v3h2v-3zM310 82v2h3v-2zM310 107v5h3v-5zM310 117v7h3v-7zM313 107v5h2v-5zM313 117v2h2v-2zM313 124v4h2v-4zM315 126v2h2v-2zM315 135v2h2v-2zM317 112v2h3v-2zM317 119v2h3v-2zM317 153v3h3v-3zM320 133v2h2v-2zM322 119v2h2v-2zM322 128v2h2v-2zM322 137v3h2v-3zM322 153v3h2v-3zM324 107v3h3v-3zM324 117v2h3v-2zM327 121v3h2v-3zM327 128v5h2v-5zM327 135v2h2v-2zM327 153v3h2v-3zM329 112v2h3v-2zM329 119v5h3v-5zM329 135v2h3v-2zM332 112v2h2v-2zM332 117v2h2v-2zM332 121v5h2v-5zM334 117v2h2v-2zM334 151v2h2v-2zM336 110v2h3v-2zM336 114v3h3v-3zM336 126v4h3v-4zM339 84v3h2v-3zM339 112v2h2v-2zM339 117v2h2v-2zM339 151v2h2v-2zM341 82v2h2v-2zM341 128v2h2v-2zM343 117v2h3v-2zM346 110v14h2v-14zM346 128v2h2v-2zM346 179v1h2v-1zM348 84v3h3v-3zM348 110v2h3v-2zM348 121v3h3v-3zM348 151v2h3v-2zM351 107v3h2v-3zM351 112v5h2v-5zM351 128v2h2v-2zM353 121v3h2v-3zM353 128v2h2v-2zM355 84v3h3v-3zM355 128v2h3v-2zM358 117v2h2v-2zM358 124v4h2v-4zM358 179v1h2v-1zM360 110v2h2v-2zM360 121v5h2v-5zM360 179v1h2v-1zM365 84v3h2v-3zM365 112v2h2v-2zM365 179v1h2v-1zM367 84v3h3v-3zM367 107v3h3v-3zM367 119v2h3v-2zM367 124v2h3v-2zM367 174v5h3v-5zM370 126v4h2v-4zM370 176v3h2v-3zM372 84v3h2v-3zM372 121v5h2v-5zM372 179v1h2v-1zM374 114v3h3v-3zM374 133v2h3v-2zM374 146v3h3v-3zM377 84v3h2v-3zM377 117v2h2v-2zM377 128v2h2v-2zM379 124v2h2v-2zM379 128v2h2v-2zM381 112v5h3v-5zM386 84v3h2v-3zM386 117v2h2v-2zM386 124v6h2v-6zM388 119v7h3v-7zM388 144v2h3v-2zM391 84v3h2v-3zM393 110v4h3v-4zM393 117v2h3v-2zM393 124v4h3v-4zM393 176v3h3v-3zM396 87v2h2v-2zM396 172v2h2v-2zM396 179v1h2v-1zM398 84v3h2v-3zM398 110v2h2v-2zM398 119v2h2v-2zM398 130v3h2v-3zM398 144v2h2v-2zM400 87v2h3v-2zM400 114v5h3v-5zM400 126v2h3v-2zM400 142v2h3v-2zM400 179v1h3v-1zM403 114v5h2v-5zM403 130v3h2v-3zM403 142v2h2v-2zM405 117v9h2v-9zM407 110v2h3v-2zM407 126v4h3v-4zM407 140v2h3v-2zM407 174v6h3v-6zM410 119v2h2v-2zM410 142v2h2v-2zM412 110v2h3v-2zM412 119v2h3v-2zM412 176v4h3v-4zM415 112v2h2v-2zM415 117v2h2v-2zM415 124v2h2v-2zM417 130v3h2v-3zM417 135v2h2v-2zM419 140v4h3v-4zM419 179v1h3v-1zM422 117v2h2v-2zM422 121v3h2v-3zM422 126v2h2v-2zM424 87v2h2v-2zM426 117v2h3v-2zM426 126v2h3v-2zM426 179v1h3v-1zM429 124v4h2v-4zM429 176v3h2v-3zM431 117v4h3v-4zM431 126v7h3v-7zM431 176v4h3v-4zM434 87v2h2v-2zM434 137v3h2v-3zM434 174v6h2v-6zM436 87v2h2v-2zM436 110v4h2v-4zM436 126v2h2v-2zM436 137v3h2v-3zM436 172v4h2v-4zM438 84v5h3v-5zM438 128v5h3v-5zM438 172v2h3v-2zM441 87v2h2v-2zM441 114v3h2v-3zM441 126v2h2v-2zM441 174v2h2v-2zM443 114v3h2v-3zM443 119v2h2v-2zM443 124v4h2v-4zM443 133v4h2v-4zM443 170v2h2v-2zM445 121v3h3v-3zM445 133v2h3v-2zM448 126v2h2v-2zM450 87v2h3v-2zM450 114v10h3v-10zM453 130v3h2v-3zM453 167v3h2v-3zM455 112v2h2v-2zM455 128v2h2v-2zM455 165v2h2v-2zM457 87v2h3v-2zM457 130v3h3v-3zM460 87v2h2v-2zM460 117v4h2v-4zM462 160v3h2v-3zM464 151v2h3v-2zM467 89v2h2v-2zM467 114v3h2v-3zM467 126v4h2v-4zM467 146v3h2v-3zM469 114v3h3v-3zM469 151v2h3v-2zM472 149v2h2v-2zM474 146v3h2v-3zM479 119v2h2v-2zM479 146v5h2v-5zM481 121v5h2v-5zM486 124v2h2v-2zM488 121v3h2v-3zM490 114v3h3v-3zM493 89v2h2v-2zM493 124v2h2v-2zM495 114v3h3v-3zM498 117v2h2v-2zM498 124v2h2v-2zM505 135v2h2v-2zM507 89v2h2v-2zM507 117v4h2v-4zM509 135v2h3v-2zM512 91v3h2v-3zM512 137v3h2v-3zM514 124v2h3v-2zM514 135v2h3v-2zM517 89v2h2v-2zM517 137v3h2v-3zM519 119v2h2v-2zM519 135v2h2v-2zM521 119v5h3v-5zM524 124v2h2v-2zM526 130v5h2v-5zM528 128v2h3v-2zM528 133v2h3v-2zM533 128v2h3v-2zM533 133v2h3v-2zM536 117v2h2v-2zM547 94v2h3v-2zM550 94v2h2v-2zM550 117v2h2v-2zM552 119v2h3v-2zM555 117v2h2v-2zM559 119v2h3v-2zM562 117v2h2v-2zM564 117v2h2v-2zM566 114v5h3v-5zM576 94v2h2v-2zM578 94v2h3v-2zM585 94v2h3v-2zM588 119v2h2v-2zM590 94v2h2v-2zM592 94v2h3v-2zM595 100v3h2v-3zM600 94v2h2v-2zM600 117v2h2v-2zM602 94v4h2v-4zM604 114v3h3v-3zM609 96v4h2v-4zM609 114v3h2v-3zM611 94v2h3v-2zM611 117v2h3v-2zM616 94v2h3v-2zM616 117v2h3v-2zM619 114v3h2v-3zM621 119v2h2v-2zM626 117v2h2v-2zM628 114v3h2v-3zM635 117v2h3v-2zM638 100v3h2v-3zM640 96v2h2v-2zM640 117v2h2v-2zM645 98v2h2v-2zM647 110v2h2v-2zM652 96v2h2v-2zM652 114v3h2v-3zM654 112v2h3v-2zM657 98v2h2v-2zM659 96v2h2v-2zM664 105v9h2v-9zM666 100v3h2v-3zM668 98v2h3v-2zM668 110v2h3v-2zM668 114v3h3v-3zM671 98v2h2v-2zM671 117v2h2v-2zM673 100v5h3v-5zM673 110v2h3v-2zM678 100v5h2v-5zM678 114v3h2v-3zM680 114v3h3v-3zM683 98v2h2v-2zM683 112v2h2v-2zM685 103v2h2v-2zM687 114v3h3v-3zM692 100v3h2v-3zM694 107v3h3v-3zM697 105v2h2v-2zM699 105v2h3v-2zM706 98v5h1v-5zM706 112v2h1v-2z"/>
<path fill="#ffeb00" d="M142 140v2h2v-2zM142 165v2h2v-2zM142 170v2h2v-2zM144 137v3h3v-3zM144 142v2h3v-2zM144 149v2h3v-2zM144 165v5h3v-5zM144 174v2h3v-2zM147 110v2h2v-2zM147 133v2h2v-2zM147 144v7h2v-7zM147 156v4h2v-4zM149 117v2h2v-2zM149 135v2h2v-2zM149 158v2h2v-2zM149 174v2h2v-2zM151 100v5h3v-5zM151 112v2h3v-2zM151 128v2h3v-2zM151 167v3h3v-3zM151 174v5h3v-5zM154 130v3h2v-3zM154 156v2h2v-2zM154 163v2h2v-2zM154 170v2h2v-2zM156 119v2h2v-2zM156 135v2h2v-2zM156 144v2h2v-2zM156 160v3h2v-3zM156 170v4h2v-4zM158 105v2h3v-2zM158 144v2h3v-2zM158 149v2h3v-2zM158 156v4h3v-4zM158 163v7h3v-7zM158 172v2h3v-2zM158 176v4h3v-4zM161 107v5h2v-5zM161 130v3h2v-3zM161 160v3h2v-3zM161 165v2h2v-2zM163 103v2h3v-2zM163 114v3h3v-3zM163 124v2h3v-2zM163 142v2h3v-2zM163 146v3h3v-3zM163 151v5h3v-5zM166 110v4h2v-4zM166 117v2h2v-2zM166 128v2h2v-2zM166 144v2h2v-2zM166 153v3h2v-3zM166 167v3h2v-3zM166 174v2h2v-2zM168 137v3h2v-3zM168 156v2h2v-2zM168 163v2h2v-2zM168 172v2h2v-2zM168 176v4h2v-4zM170 137v5h3v-5zM170 146v3h3v-3zM170 151v5h3v-5zM170 172v2h3v-2zM170 179v1h3v-1zM173 119v2h2v-2zM173 128v2h2v-2zM173 142v2h2v-2zM173 156v2h2v-2zM173 160v3h2v-3zM173 167v5h2v-5zM173 179v1h2v-1zM175 119v2h2v-2zM175 128v2h2v-2zM175 133v2h2v-2zM175 144v2h2v-2zM175 163v2h2v-2zM175 172v4h2v-4zM177 112v2h3v-2zM177 119v2h3v-2zM177 126v2h3v-2zM177 130v3h3v-3zM177 140v4h3v-4zM177 163v2h3v-2zM180 114v3h2v-3zM180 119v2h2v-2zM180 130v3h2v-3zM180 137v3h2v-3zM180 142v2h2v-2zM180 156v2h2v-2zM180 160v3h2v-3zM180 170v2h2v-2zM180 179v1h2v-1zM182 126v2h2v-2zM182 142v2h2v-2zM182 156v2h2v-2zM182 160v3h2v-3zM182 170v2h2v-2zM184 117v2h3v-2zM184 137v5h3v-5zM184 156v4h3v-4zM184 172v2h3v-2zM184 176v4h3v-4zM187 107v3h2v-3zM187 117v2h2v-2zM187 121v3h2v-3zM187 135v2h2v-2zM187 144v2h2v-2zM187 176v4h2v-4zM189 68v3h3v-3zM189 107v3h3v-3zM189 121v3h3v-3zM189 174v2h3v-2zM192 71v2h2v-2zM192 121v3h2v-3zM192 137v3h2v-3zM194 128v2h2v-2zM194 146v3h2v-3zM194 170v2h2v-2zM196 124v2h3v-2zM196 135v2h3v-2zM196 146v3h3v-3zM196 167v5h3v-5zM196 174v2h3v-2zM199 126v2h2v-2zM199 133v2h2v-2zM199 179v1h2v-1zM201 119v2h2v-2zM201 124v2h2v-2zM203 103v2h3v-2zM203 112v2h3v-2zM203 117v2h3v-2zM203 128v2h3v-2zM203 137v3h3v-3zM203 176v4h3v-4zM206 78v2h2v-2zM206 105v5h2v-5zM206 112v2h2v-2zM206 121v5h2v-5zM206 128v2h2v-2zM206 135v7h2v-7zM206 146v3h2v-3zM206 174v2h2v-2zM206 179v1h2v-1zM208 105v2h3v-2zM211 75v3h2v-3zM211 105v2h2v-2zM211 114v5h2v-5zM211 126v2h2v-2zM211 130v3h2v-3zM211 146v3h2v-3zM213 112v2h2v-2zM213 117v2h2v-2zM213 133v2h2v-2zM213 137v3h2v-3zM213 142v2h2v-2zM213 179v1h2v-1zM215 105v2h3v-2zM215 110v2h3v-2zM215 114v5h3v-5zM215 121v5h3v-5zM215 137v3h3v-3zM215 146v3h3v-3zM218 105v2h2v-2zM218 112v2h2v-2zM218 117v2h2v-2zM218 142v2h2v-2zM218 160v3h2v-3zM220 121v12h2v-12zM222 112v2h3v-2zM222 130v3h3v-3zM222 135v2h3v-2zM222 146v5h3v-5zM225 105v2h2v-2zM225 124v4h2v-4zM225 130v5h2v-5zM225 144v2h2v-2zM225 149v2h2v-2zM225 163v2h2v-2zM225 170v2h2v-2zM227 80v2h3v-2zM227 119v7h3v-7zM227 128v5h3v-5zM227 144v2h3v-2zM227 151v2h3v-2zM227 156v2h3v-2zM227 170v2h3v-2zM230 107v3h2v-3zM230 135v2h2v-2zM230 142v2h2v-2zM230 146v3h2v-3zM232 112v2h2v-2zM232 130v7h2v-7zM232 140v2h2v-2zM232 149v2h2v-2zM232 160v3h2v-3zM234 117v2h3v-2zM234 128v5h3v-5zM234 140v2h3v-2zM234 144v2h3v-2zM234 167v3h3v-3zM237 82v2h2v-2zM237 105v2h2v-2zM237 119v2h2v-2zM237 124v6h2v-6zM237 151v2h2v-2zM239 78v2h2v-2zM239 110v7h2v-7zM239 128v2h2v-2zM239 135v2h2v-2zM239 144v2h2v-2zM239 149v2h2v-2zM239 163v2h2v-2zM241 80v2h3v-2zM241 112v2h3v-2zM241 117v4h3v-4zM241 124v2h3v-2zM241 140v2h3v-2zM241 176v3h3v-3zM244 80v2h2v-2zM244 110v2h2v-2zM244 117v2h2v-2zM244 126v2h2v-2zM244 130v10h2v-10zM244 144v2h2v-2zM244 165v2h2v-2zM244 174v2h2v-2zM246 119v2h3v-2zM246 124v2h3v-2zM246 149v2h3v-2zM249 144v5h2v-5zM251 107v3h2v-3zM251 126v2h2v-2zM251 153v5h2v-5zM253 114v3h3v-3zM253 135v2h3v-2zM256 105v7h2v-7zM256 133v2h2v-2zM256 170v4h2v-4zM256 176v3h2v-3zM258 103v2h2v-2zM258 112v2h2v-2zM258 160v3h2v-3zM260 105v2h3v-2zM260 117v2h3v-2zM263 105v5h2v-5zM263 124v4h2v-4zM263 160v3h2v-3zM265 82v2h3v-2zM265 163v2h3v-2zM265 167v3h3v-3zM265 176v3h3v-3zM268 84v3h2v-3zM268 128v2h2v-2zM268 133v2h2v-2zM268 167v3h2v-3zM268 172v2h2v-2zM270 126v2h2v-2zM270 165v2h2v-2zM270 174v5h2v-5zM272 103v2h3v-2zM272 167v5h3v-5zM275 105v2h2v-2zM275 112v2h2v-2zM275 160v3h2v-3zM275 167v5h2v-5zM275 176v3h2v-3zM277 82v2h2v-2zM277 105v2h2v-2zM277 112v5h2v-5zM277 128v7h2v-7zM277 165v2h2v-2zM279 105v2h3v-2zM279 112v2h3v-2zM279 121v3h3v-3zM279 130v3h3v-3zM279 167v3h3v-3zM279 174v5h3v-5zM282 117v2h2v-2zM282 126v2h2v-2zM282 135v2h2v-2zM284 82v2h2v-2zM284 112v2h2v-2zM284 121v3h2v-3zM284 163v2h2v-2zM284 176v3h2v-3zM286 84v3h3v-3zM286 114v3h3v-3zM286 133v2h3v-2zM286 176v3h3v-3zM289 110v2h2v-2zM289 165v2h2v-2zM289 176v4h2v-4zM291 80v2h3v-2zM291 121v3h3v-3zM291 130v3h3v-3zM294 107v3h2v-3zM296 103v2h2v-2zM296 163v2h2v-2zM298 103v2h3v-2zM298 117v2h3v-2zM298 124v2h3v-2zM301 110v2h2v-2zM301 121v3h2v-3zM301 130v3h2v-3zM301 179v1h2v-1zM303 105v2h2v-2zM303 110v2h2v-2zM303 126v2h2v-2zM303 133v2h2v-2zM303 137v3h2v-3zM305 84v3h3v-3zM305 107v3h3v-3zM310 87v2h3v-2zM310 105v2h3v-2zM310 112v2h3v-2zM313 121v3h2v-3zM315 82v2h2v-2zM315 124v2h2v-2zM315 130v3h2v-3zM317 117v2h3v-2zM320 110v2h2v-2zM320 124v4h2v-4zM320 130v3h2v-3zM320 179v1h2v-1zM322 82v2h2v-2zM322 112v2h2v-2zM322 121v3h2v-3zM322 126v2h2v-2zM327 114v3h2v-3zM327 124v2h2v-2zM327 176v3h2v-3zM329 84v3h3v-3zM329 117v2h3v-2zM329 126v2h3v-2zM332 130v3h2v-3zM334 84v3h2v-3zM334 112v2h2v-2zM334 119v2h2v-2zM334 124v4h2v-4zM336 84v3h3v-3zM336 107v3h3v-3zM336 112v2h3v-2zM336 121v3h3v-3zM336 130v3h3v-3zM339 114v3h2v-3zM339 124v2h2v-2zM339 176v3h2v-3zM341 112v2h2v-2zM341 121v3h2v-3zM341 151v2h2v-2zM343 84v3h3v-3zM343 114v3h3v-3zM343 179v1h3v-1zM346 84v3h2v-3zM346 124v2h2v-2zM346 151v2h2v-2zM346 174v2h2v-2zM351 179v1h2v-1zM353 117v2h2v-2zM353 130v3h2v-3zM353 179v1h2v-1zM355 110v4h3v-4zM355 176v3h3v-3zM358 112v5h2v-5zM358 121v3h2v-3zM358 128v2h2v-2zM358 149v2h2v-2zM360 84v3h2v-3zM360 128v2h2v-2zM362 126v2h3v-2zM362 149v2h3v-2zM362 176v3h3v-3zM365 124v2h2v-2zM365 176v3h2v-3zM367 117v2h3v-2zM367 172v2h3v-2zM367 179v1h3v-1zM370 84v3h2v-3zM370 124v2h2v-2zM372 130v3h2v-3zM374 87v2h3v-2zM374 110v4h3v-4zM374 174v2h3v-2zM377 110v2h2v-2zM377 121v3h2v-3zM377 174v2h2v-2zM379 121v3h2v-3zM379 126v2h2v-2zM379 130v3h2v-3zM381 117v2h3v-2zM381 121v3h3v-3zM381 146v3h3v-3zM381 176v3h3v-3zM384 112v2h2v-2zM384 179v1h2v-1zM386 119v5h2v-5zM386 130v3h2v-3zM386 176v3h2v-3zM388 87v2h3v-2zM388 174v2h3v-2zM388 179v1h3v-1zM391 114v5h2v-5zM391 121v5h2v-5zM393 114v3h3v-3zM393 121v3h3v-3zM393 179v1h3v-1zM396 112v2h2v-2zM396 144v2h2v-2zM398 112v2h2v-2zM398 128v2h2v-2zM398 174v2h2v-2zM400 84v3h3v-3zM400 144v2h3v-2zM400 176v3h3v-3zM403 119v2h2v-2zM403 124v2h2v-2zM403 128v2h2v-2zM407 89v2h3v-2zM407 112v5h3v-5zM407 124v2h3v-2zM407 144v2h3v-2zM410 87v2h2v-2zM410 114v3h2v-3zM410 124v2h2v-2zM412 89v2h3v-2zM412 117v2h3v-2zM415 172v4h2v-4zM415 179v1h2v-1zM417 121v9h2v-9zM417 142v2h2v-2zM417 179v1h2v-1zM419 117v4h3v-4zM419 124v2h3v-2zM422 124v2h2v-2zM422 133v2h2v-2zM422 176v3h2v-3zM424 107v5h2v-5zM424 117v4h2v-4zM424 172v2h2v-2zM424 179v1h2v-1zM426 121v3h3v-3zM426 128v2h3v-2zM429 119v2h2v-2zM429 137v3h2v-3zM434 114v3h2v-3zM434 119v2h2v-2zM434 126v2h2v-2zM434 167v5h2v-5zM436 114v3h2v-3zM436 167v3h2v-3zM438 91v3h3v-3zM438 119v2h3v-2zM438 124v2h3v-2zM441 117v2h2v-2zM441 121v3h2v-3zM441 170v2h2v-2zM443 112v2h2v-2zM445 87v2h3v-2zM445 114v3h3v-3zM445 167v3h3v-3zM448 119v5h2v-5zM448 128v2h2v-2zM448 133v2h2v-2zM448 167v3h2v-3zM450 112v2h3v-2zM450 126v2h3v-2zM450 133v2h3v-2zM453 107v3h2v-3zM453 114v3h2v-3zM453 160v3h2v-3zM455 87v2h2v-2zM455 114v3h2v-3zM455 130v3h2v-3zM457 114v3h3v-3zM457 156v2h3v-2zM457 160v3h3v-3zM460 110v2h2v-2zM460 156v2h2v-2zM462 119v2h2v-2zM464 112v2h3v-2zM467 110v4h2v-4zM467 149v2h2v-2zM469 89v2h3v-2zM469 112v2h3v-2zM472 89v2h2v-2zM472 114v3h2v-3zM472 124v2h2v-2zM474 107v3h2v-3zM474 142v2h2v-2zM476 89v2h3v-2zM476 114v3h3v-3zM476 144v5h3v-5zM481 112v2h2v-2zM481 142v2h2v-2zM483 119v2h3v-2zM483 126v2h3v-2zM488 144v2h2v-2zM490 91v3h3v-3zM493 112v2h2v-2zM493 137v3h2v-3zM495 126v2h3v-2zM498 112v2h2v-2zM498 135v5h2v-5zM500 133v2h2v-2zM500 137v3h2v-3zM502 110v2h3v-2zM502 114v3h3v-3zM502 126v2h3v-2zM502 133v2h3v-2zM505 94v2h2v-2zM505 114v3h2v-3zM512 117v2h2v-2zM512 135v2h2v-2zM514 94v2h3v-2zM514 117v2h3v-2zM514 133v2h3v-2zM517 91v3h2v-3zM517 117v2h2v-2zM519 117v2h2v-2zM519 137v3h2v-3zM521 94v2h3v-2zM521 130v5h3v-5zM524 119v5h2v-5zM526 91v3h2v-3zM526 124v4h2v-4zM528 130v3h3v-3zM531 124v2h2v-2zM531 128v2h2v-2zM533 121v3h3v-3zM533 130v3h3v-3zM538 114v5h2v-5zM540 114v3h3v-3zM543 94v2h2v-2zM545 94v2h2v-2zM547 96v4h3v-4zM555 96v2h2v-2zM555 114v3h2v-3zM557 114v3h2v-3zM562 94v2h2v-2zM564 114v3h2v-3zM569 94v2h2v-2zM571 117v2h3v-2zM574 94v2h2v-2zM576 98v2h2v-2zM578 117v4h3v-4zM581 96v2h2v-2zM585 110v7h3v-7zM588 117v2h2v-2zM590 114v3h2v-3zM592 96v2h3v-2zM597 114v3h3v-3zM600 114v3h2v-3zM602 103v2h2v-2zM604 94v2h3v-2zM604 98v2h3v-2zM607 94v2h2v-2zM607 100v3h2v-3zM609 94v2h2v-2zM614 94v4h2v-4zM619 94v4h2v-4zM623 114v3h3v-3zM628 96v4h2v-4zM628 117v2h2v-2zM630 98v2h3v-2zM630 103v2h3v-2zM630 107v5h3v-5zM633 112v2h2v-2zM635 98v2h3v-2zM635 110v4h3v-4zM638 103v2h2v-2zM640 112v2h2v-2zM642 98v2h3v-2zM642 107v5h3v-5zM642 114v3h3v-3zM645 100v5h2v-5zM645 110v2h2v-2zM647 107v3h2v-3zM649 112v5h3v-5zM652 110v2h2v-2zM654 107v3h3v-3zM657 103v2h2v-2zM659 98v5h2v-5zM661 105v2h3v-2zM664 100v3h2v-3zM666 107v3h2v-3zM666 112v2h2v-2zM668 96v2h3v-2zM668 107v3h3v-3zM671 100v3h2v-3zM671 114v3h2v-3zM673 98v2h3v-2zM673 107v3h3v-3zM673 112v2h3v-2zM676 100v3h2v-3zM680 96v2h3v-2zM680 105v2h3v-2zM680 110v2h3v-2zM683 105v2h2v-2zM683 110v2h2v-2zM685 105v5h2v-5zM687 96v4h3v-4zM687 107v3h3v-3zM690 96v4h2v-4zM692 98v2h2v-2zM692 103v2h2v-2zM692 110v2h2v-2zM692 114v3h2v-3zM694 100v3h3v-3zM694 112v2h3v-2zM699 107v3h3v-3zM704 107v3h2v-3z"/>
<path fill="#ffc400" d="M142 163v2h2v-2zM142 172v4h2v-4zM144 110v2h3v-2zM144 163v2h3v-2zM144 170v4h3v-4zM147 114v5h2v-5zM147 163v4h2v-4zM147 170v4h2v-4zM147 176v3h2v-3zM149 149v2h2v-2zM149 163v2h2v-2zM149 179v1h2v-1zM151 107v3h3v-3zM151 133v2h3v-2zM151 160v5h3v-5zM151 170v2h3v-2zM154 119v2h2v-2zM154 128v2h2v-2zM154 151v2h2v-2zM154 174v2h2v-2zM156 179v1h2v-1zM158 107v3h3v-3zM158 121v3h3v-3zM158 135v2h3v-2zM158 142v2h3v-2zM158 170v2h3v-2zM161 117v2h2v-2zM161 135v2h2v-2zM161 144v2h2v-2zM161 149v2h2v-2zM161 153v3h2v-3zM163 110v2h3v-2zM163 126v2h3v-2zM163 137v3h3v-3zM163 149v2h3v-2zM163 174v2h3v-2zM166 149v2h2v-2zM166 172v2h2v-2zM168 151v2h2v-2zM168 174v2h2v-2zM170 121v3h3v-3zM170 163v2h3v-2zM170 174v5h3v-5zM173 114v3h2v-3zM173 121v3h2v-3zM173 146v3h2v-3zM173 153v3h2v-3zM173 165v2h2v-2zM175 103v2h2v-2zM175 110v4h2v-4zM175 121v3h2v-3zM177 114v3h3v-3zM177 121v5h3v-5zM177 135v2h3v-2zM177 144v2h3v-2zM177 176v3h3v-3zM180 167v3h2v-3zM180 176v3h2v-3zM182 128v2h2v-2zM182 176v4h2v-4zM184 126v2h3v-2zM184 130v3h3v-3zM184 163v4h3v-4zM184 170v2h3v-2zM187 71v2h2v-2zM187 105v2h2v-2zM187 137v5h2v-5zM189 73v2h3v-2zM189 110v2h3v-2zM189 114v3h3v-3zM189 119v2h3v-2zM189 126v4h3v-4zM189 133v2h3v-2zM189 137v3h3v-3zM189 144v2h3v-2zM192 103v4h2v-4zM192 112v2h2v-2zM192 142v2h2v-2zM192 167v3h2v-3zM192 172v4h2v-4zM194 103v2h2v-2zM194 153v5h2v-5zM194 172v2h2v-2zM196 144v2h3v-2zM196 160v3h3v-3zM196 172v2h3v-2zM199 110v2h2v-2zM199 114v3h2v-3zM199 135v2h2v-2zM199 146v3h2v-3zM199 165v2h2v-2zM199 174v2h2v-2zM201 80v2h2v-2zM201 100v3h2v-3zM201 105v2h2v-2zM201 110v2h2v-2zM201 114v3h2v-3zM201 121v3h2v-3zM201 126v4h2v-4zM201 135v2h2v-2zM201 176v3h2v-3zM203 107v3h3v-3zM203 146v3h3v-3zM203 170v4h3v-4zM206 103v2h2v-2zM206 110v2h2v-2zM206 144v2h2v-2zM208 119v2h3v-2zM208 130v3h3v-3zM208 140v4h3v-4zM211 78v2h2v-2zM211 110v2h2v-2zM211 124v2h2v-2zM211 128v2h2v-2zM211 142v4h2v-4zM211 176v3h2v-3zM213 82v2h2v-2zM213 105v2h2v-2zM213 114v3h2v-3zM213 119v2h2v-2zM213 128v2h2v-2zM213 174v2h2v-2zM215 78v2h3v-2zM215 103v2h3v-2zM215 107v3h3v-3zM215 112v2h3v-2zM215 126v2h3v-2zM215 130v7h3v-7zM215 142v2h3v-2zM215 149v4h3v-4zM218 78v2h2v-2zM218 126v4h2v-4zM218 140v2h2v-2zM218 170v4h2v-4zM220 78v2h2v-2zM220 84v3h2v-3zM220 110v2h2v-2zM220 119v2h2v-2zM220 135v5h2v-5zM220 144v7h2v-7zM222 107v3h3v-3zM222 119v2h3v-2zM222 124v2h3v-2zM222 140v2h3v-2zM222 144v2h3v-2zM225 80v2h2v-2zM225 103v2h2v-2zM225 110v2h2v-2zM225 117v2h2v-2zM225 135v2h2v-2zM225 140v2h2v-2zM225 146v3h2v-3zM225 176v4h2v-4zM227 105v5h3v-5zM227 133v2h3v-2zM227 140v4h3v-4zM227 146v3h3v-3zM227 153v3h3v-3zM227 158v2h3v-2zM227 172v4h3v-4zM227 179v1h3v-1zM230 119v2h2v-2zM230 126v7h2v-7zM230 140v2h2v-2zM230 149v2h2v-2zM232 78v4h2v-4zM232 126v2h2v-2zM232 142v2h2v-2zM232 167v3h2v-3zM232 172v2h2v-2zM232 179v1h2v-1zM234 105v7h3v-7zM234 114v3h3v-3zM234 126v2h3v-2zM234 137v3h3v-3zM234 146v3h3v-3zM234 160v3h3v-3zM234 170v4h3v-4zM237 80v2h2v-2zM237 107v3h2v-3zM237 112v2h2v-2zM237 121v3h2v-3zM237 130v3h2v-3zM237 146v3h2v-3zM237 174v2h2v-2zM239 133v2h2v-2zM239 158v2h2v-2zM239 167v9h2v-9zM241 105v2h3v-2zM241 110v2h3v-2zM241 126v4h3v-4zM241 146v3h3v-3zM241 151v2h3v-2zM241 163v2h3v-2zM241 170v2h3v-2zM241 174v2h3v-2zM244 107v3h2v-3zM244 119v2h2v-2zM244 128v2h2v-2zM244 140v2h2v-2zM244 146v3h2v-3zM244 158v2h2v-2zM244 170v2h2v-2zM246 80v2h3v-2zM246 117v2h3v-2zM246 128v2h3v-2zM246 133v4h3v-4zM246 153v3h3v-3zM246 160v3h3v-3zM246 167v3h3v-3zM249 80v4h2v-4zM249 126v2h2v-2zM251 130v7h2v-7zM251 144v2h2v-2zM251 167v3h2v-3zM253 80v2h3v-2zM253 110v2h3v-2zM253 117v4h3v-4zM253 130v3h3v-3zM256 121v3h2v-3zM256 160v3h2v-3zM256 165v2h2v-2zM256 179v1h2v-1zM258 82v5h2v-5zM258 165v2h2v-2zM258 170v2h2v-2zM260 103v2h3v-2zM260 130v3h3v-3zM263 119v5h2v-5zM263 128v2h2v-2zM263 163v2h2v-2zM263 174v2h2v-2zM265 165v2h3v-2zM268 82v2h2v-2zM268 87v2h2v-2zM268 103v2h2v-2zM268 165v2h2v-2zM268 170v2h2v-2zM268 174v2h2v-2zM268 179v1h2v-1zM270 103v2h2v-2zM270 107v5h2v-5zM270 128v2h2v-2zM270 135v2h2v-2zM270 160v3h2v-3zM270 167v3h2v-3zM272 82v5h3v-5zM272 160v3h3v-3zM272 179v1h3v-1zM275 130v3h2v-3zM275 135v2h2v-2zM275 174v2h2v-2zM277 84v3h2v-3zM277 160v5h2v-5zM277 172v7h2v-7zM279 82v2h3v-2zM279 165v2h3v-2zM282 107v3h2v-3zM282 124v2h2v-2zM282 130v3h2v-3zM284 105v5h2v-5zM284 174v2h2v-2zM286 135v2h3v-2zM286 167v3h3v-3zM286 174v2h3v-2zM289 84v3h2v-3zM289 100v3h2v-3zM289 126v2h2v-2zM289 163v2h2v-2zM289 172v2h2v-2zM291 82v2h3v-2zM291 105v5h3v-5zM291 117v4h3v-4zM291 128v2h3v-2zM291 158v2h3v-2zM291 174v2h3v-2zM294 121v3h2v-3zM294 133v2h2v-2zM296 121v3h2v-3zM296 165v2h2v-2zM298 84v3h3v-3zM298 160v3h3v-3zM298 170v2h3v-2zM301 107v3h2v-3zM303 124v2h2v-2zM305 174v2h3v-2zM308 105v2h2v-2zM308 110v2h2v-2zM310 103v2h3v-2zM313 105v2h2v-2zM315 121v3h2v-3zM317 107v3h3v-3zM317 114v3h3v-3zM317 124v2h3v-2zM320 135v2h2v-2zM322 135v2h2v-2zM324 179v1h3v-1zM327 82v2h2v-2zM327 105v7h2v-7zM327 117v2h2v-2zM327 126v2h2v-2zM327 133v2h2v-2zM329 124v2h3v-2zM329 128v2h3v-2zM329 153v3h3v-3zM332 107v3h2v-3zM332 126v2h2v-2zM334 87v2h2v-2zM334 105v2h2v-2zM334 176v3h2v-3zM336 117v4h3v-4zM339 110v2h2v-2zM341 84v3h2v-3zM341 110v2h2v-2zM341 126v2h2v-2zM341 176v4h2v-4zM343 110v2h3v-2zM343 174v2h3v-2zM348 179v1h3v-1zM351 87v2h2v-2zM351 110v2h2v-2zM351 176v3h2v-3zM353 89v2h2v-2zM353 114v3h2v-3zM353 176v3h2v-3zM355 124v2h3v-2zM355 130v3h3v-3zM355 179v1h3v-1zM358 176v3h2v-3zM360 87v2h2v-2zM360 117v2h2v-2zM360 149v2h2v-2zM360 176v3h2v-3zM362 107v3h3v-3zM362 172v2h3v-2zM365 105v2h2v-2zM365 110v2h2v-2zM365 172v2h2v-2zM370 110v4h2v-4zM370 119v2h2v-2zM370 146v3h2v-3zM370 172v2h2v-2zM370 179v1h2v-1zM372 107v7h2v-7zM372 174v5h2v-5zM374 107v3h3v-3zM377 107v3h2v-3zM377 146v3h2v-3zM377 176v3h2v-3zM379 84v3h2v-3zM379 89v2h2v-2zM379 119v2h2v-2zM379 176v3h2v-3zM381 110v2h3v-2zM381 172v4h3v-4zM384 114v3h2v-3zM384 126v2h2v-2zM384 174v2h2v-2zM386 112v2h2v-2zM386 179v1h2v-1zM388 89v2h3v-2zM388 110v2h3v-2zM388 146v3h3v-3zM388 176v3h3v-3zM391 112v2h2v-2zM391 119v2h2v-2zM391 130v3h2v-3zM391 179v1h2v-1zM396 107v3h2v-3zM398 87v2h2v-2zM398 107v3h2v-3zM398 176v4h2v-4zM400 174v2h3v-2zM403 112v2h2v-2zM403 174v5h2v-5zM405 87v2h2v-2zM405 128v2h2v-2zM405 176v3h2v-3zM407 87v2h3v-2zM407 142v2h3v-2zM410 89v2h2v-2zM410 110v2h2v-2zM410 117v2h2v-2zM410 176v3h2v-3zM412 172v2h3v-2zM415 87v2h2v-2zM419 87v2h3v-2zM419 114v3h3v-3zM419 128v2h3v-2zM419 174v2h3v-2zM422 87v2h2v-2zM422 112v2h2v-2zM422 142v2h2v-2zM422 172v4h2v-4zM424 89v2h2v-2zM424 112v2h2v-2zM429 110v2h2v-2zM429 114v3h2v-3zM429 179v1h2v-1zM431 87v2h3v-2zM431 114v3h3v-3zM431 124v2h3v-2zM431 172v4h3v-4zM434 172v2h2v-2zM436 170v2h2v-2zM438 126v2h3v-2zM438 170v2h3v-2zM441 133v2h2v-2zM441 167v3h2v-3zM443 87v2h2v-2zM443 165v5h2v-5zM445 110v2h3v-2zM448 87v2h2v-2zM448 112v5h2v-5zM455 117v2h2v-2zM457 89v2h3v-2zM457 107v3h3v-3zM457 158v2h3v-2zM460 158v2h2v-2zM462 87v2h2v-2zM462 158v2h2v-2zM464 89v2h3v-2zM464 126v2h3v-2zM464 144v5h3v-5zM467 137v9h2v-9zM469 126v2h3v-2zM469 142v2h3v-2zM469 149v2h3v-2zM472 126v2h2v-2zM472 144v2h2v-2zM474 89v2h2v-2zM474 126v2h2v-2zM474 135v2h2v-2zM474 140v2h2v-2zM476 140v4h3v-4zM479 89v2h2v-2zM479 144v2h2v-2zM481 137v5h2v-5zM483 114v5h3v-5zM483 137v3h3v-3zM486 89v2h2v-2zM486 135v2h2v-2zM486 140v2h2v-2zM488 119v2h2v-2zM488 124v2h2v-2zM488 140v4h2v-4zM490 112v2h3v-2zM495 112v2h3v-2zM498 91v3h2v-3zM500 91v3h2v-3zM500 112v2h2v-2zM500 117v2h2v-2zM500 135v2h2v-2zM505 110v2h2v-2zM505 126v2h2v-2zM507 91v3h2v-3zM507 121v7h2v-7zM507 135v2h2v-2zM512 121v3h2v-3zM514 126v2h3v-2zM514 130v3h3v-3zM517 119v2h2v-2zM519 121v7h2v-7zM519 130v3h2v-3zM521 117v2h3v-2zM524 117v2h2v-2zM524 130v5h2v-5zM526 128v2h2v-2zM528 121v7h3v-7zM531 119v2h2v-2zM531 130v3h2v-3zM533 94v2h3v-2zM533 114v3h3v-3zM533 119v2h3v-2zM538 94v2h2v-2zM540 94v2h3v-2zM543 100v3h2v-3zM545 114v3h2v-3zM552 94v2h3v-2zM552 114v3h3v-3zM555 94v2h2v-2zM557 94v2h2v-2zM559 94v2h3v-2zM559 114v3h3v-3zM562 114v3h2v-3zM564 94v2h2v-2zM569 114v5h2v-5zM574 114v3h2v-3zM578 114v3h3v-3zM581 114v3h2v-3zM583 96v2h2v-2zM583 114v3h2v-3zM585 98v5h3v-5zM588 94v2h2v-2zM592 110v2h3v-2zM602 100v3h2v-3zM604 103v2h3v-2zM607 107v3h2v-3zM607 112v2h2v-2zM609 112v2h2v-2zM616 100v3h3v-3zM616 114v3h3v-3zM623 98v2h3v-2zM623 105v2h3v-2zM626 96v2h2v-2zM626 100v3h2v-3zM626 114v3h2v-3zM630 96v2h3v-2zM630 100v3h3v-3zM630 112v2h3v-2zM633 100v3h2v-3zM633 110v2h2v-2zM633 114v3h2v-3zM635 100v5h3v-5zM638 107v7h2v-7zM640 100v3h2v-3zM642 105v2h3v-2zM645 107v3h2v-3zM645 112v2h2v-2zM649 96v4h3v-4zM649 103v2h3v-2zM652 98v2h2v-2zM652 103v2h2v-2zM657 110v2h2v-2zM659 103v2h2v-2zM659 110v4h2v-4zM661 107v5h3v-5zM661 114v3h3v-3zM668 100v5h3v-5zM668 112v2h3v-2zM671 103v2h2v-2zM671 110v4h2v-4zM673 105v2h3v-2zM676 105v2h2v-2zM676 110v4h2v-4zM678 105v7h2v-7zM680 98v2h3v-2zM680 103v2h3v-2zM683 107v3h2v-3zM685 112v2h2v-2zM687 100v3h3v-3zM690 100v3h2v-3zM690 114v3h2v-3zM692 105v5h2v-5zM692 112v2h2v-2zM697 96v2h2v-2zM697 107v3h2v-3zM697 112v2h2v-2z"/>
<path fill="#ff9d00" d="M142 110v2h2v-2zM144 160v3h3v-3zM144 179v1h3v-1zM147 112v2h2v-2zM147 167v3h2v-3zM147 174v2h2v-2zM149 107v3h2v-3zM149 112v2h2v-2zM149 151v2h2v-2zM149 165v2h2v-2zM149 176v3h2v-3zM151 165v2h3v-2zM151 179v1h3v-1zM154 165v2h2v-2zM154 176v3h2v-3zM158 110v2h3v-2zM161 119v2h2v-2zM161 137v3h2v-3zM161 172v2h2v-2zM161 176v3h2v-3zM163 140v2h3v-2zM163 160v3h3v-3zM166 121v3h2v-3zM166 163v2h2v-2zM166 170v2h2v-2zM166 179v1h2v-1zM170 149v2h3v-2zM173 133v2h2v-2zM173 174v2h2v-2zM175 117v2h2v-2zM175 137v3h2v-3zM175 142v2h2v-2zM175 149v2h2v-2zM175 153v3h2v-3zM175 158v2h2v-2zM175 167v5h2v-5zM177 156v2h3v-2zM177 174v2h3v-2zM177 179v1h3v-1zM180 165v2h2v-2zM180 174v2h2v-2zM182 107v3h2v-3zM182 165v2h2v-2zM184 110v2h3v-2zM184 119v2h3v-2zM184 174v2h3v-2zM187 103v2h2v-2zM187 114v3h2v-3zM187 126v2h2v-2zM187 170v4h2v-4zM189 103v4h3v-4zM189 124v2h3v-2zM192 73v2h2v-2zM192 146v5h2v-5zM192 170v2h2v-2zM194 75v3h2v-3zM194 163v2h2v-2zM196 80v2h3v-2zM196 100v5h3v-5zM196 149v2h3v-2zM196 158v2h3v-2zM199 75v3h2v-3zM199 128v2h2v-2zM199 137v3h2v-3zM199 142v2h2v-2zM199 149v2h2v-2zM199 167v7h2v-7zM201 78v2h2v-2zM201 107v3h2v-3zM201 112v2h2v-2zM201 117v2h2v-2zM201 130v3h2v-3zM201 144v2h2v-2zM201 179v1h2v-1zM203 80v2h3v-2zM203 96v4h3v-4zM206 98v2h2v-2zM206 149v2h2v-2zM206 165v2h2v-2zM208 110v2h3v-2zM208 124v2h3v-2zM208 135v2h3v-2zM208 144v2h3v-2zM211 103v2h2v-2zM211 119v5h2v-5zM211 174v2h2v-2zM213 121v3h2v-3zM213 149v2h2v-2zM213 160v3h2v-3zM213 176v3h2v-3zM215 128v2h3v-2zM215 140v2h3v-2zM215 144v2h3v-2zM215 158v2h3v-2zM215 163v2h3v-2zM215 172v2h3v-2zM215 176v4h3v-4zM218 80v2h2v-2zM218 103v2h2v-2zM218 121v3h2v-3zM218 137v3h2v-3zM218 176v3h2v-3zM220 103v2h2v-2zM220 107v3h2v-3zM220 117v2h2v-2zM220 151v2h2v-2zM220 163v9h2v-9zM220 174v2h2v-2zM222 78v2h3v-2zM222 103v2h3v-2zM222 142v2h3v-2zM222 156v2h3v-2zM222 163v2h3v-2zM222 167v5h3v-5zM225 112v2h2v-2zM225 151v7h2v-7zM225 172v4h2v-4zM227 149v2h3v-2zM227 160v7h3v-7zM227 176v3h3v-3zM230 105v2h2v-2zM230 110v4h2v-4zM230 137v3h2v-3zM230 151v2h2v-2zM232 107v3h2v-3zM232 128v2h2v-2zM232 137v3h2v-3zM232 144v2h2v-2zM232 165v2h2v-2zM232 170v2h2v-2zM232 176v3h2v-3zM234 100v3h3v-3zM234 119v5h3v-5zM234 135v2h3v-2zM234 153v3h3v-3zM234 165v2h3v-2zM234 179v1h3v-1zM237 103v2h2v-2zM237 133v2h2v-2zM239 121v3h2v-3zM239 137v3h2v-3zM239 151v2h2v-2zM239 179v1h2v-1zM241 107v3h3v-3zM241 121v3h3v-3zM241 160v3h3v-3zM241 167v3h3v-3zM241 172v2h3v-2zM244 82v2h2v-2zM244 103v2h2v-2zM244 114v3h2v-3zM244 167v3h2v-3zM244 172v2h2v-2zM246 107v3h3v-3zM246 114v3h3v-3zM246 121v3h3v-3zM246 126v2h3v-2zM246 137v3h3v-3zM246 144v5h3v-5zM246 158v2h3v-2zM246 170v2h3v-2zM249 107v3h2v-3zM249 117v2h2v-2zM249 124v2h2v-2zM249 130v5h2v-5zM249 149v2h2v-2zM249 156v2h2v-2zM249 167v3h2v-3zM251 84v3h2v-3zM251 105v2h2v-2zM251 158v2h2v-2zM251 163v4h2v-4zM251 170v2h2v-2zM251 174v2h2v-2zM253 105v5h3v-5zM253 126v4h3v-4zM253 133v2h3v-2zM253 158v5h3v-5zM253 167v3h3v-3zM253 172v2h3v-2zM253 176v4h3v-4zM256 84v3h2v-3zM256 103v2h2v-2zM256 163v2h2v-2zM256 174v2h2v-2zM258 172v2h2v-2zM258 179v1h2v-1zM260 128v2h3v-2zM260 165v5h3v-5zM260 174v6h3v-6zM263 103v2h2v-2zM263 112v7h2v-7zM263 165v2h2v-2zM263 170v2h2v-2zM265 89v2h3v-2zM268 100v3h2v-3zM268 176v3h2v-3zM270 82v2h2v-2zM270 117v2h2v-2zM270 130v3h2v-3zM270 170v4h2v-4zM272 89v2h3v-2zM272 105v2h3v-2zM272 130v3h3v-3zM272 163v4h3v-4zM272 172v2h3v-2zM272 176v3h3v-3zM275 165v2h2v-2zM275 172v2h2v-2zM277 110v2h2v-2zM277 167v3h2v-3zM279 84v3h3v-3zM279 103v2h3v-2zM279 119v2h3v-2zM279 124v2h3v-2zM279 128v2h3v-2zM282 119v2h2v-2zM282 128v2h2v-2zM284 84v3h2v-3zM284 103v2h2v-2zM284 160v3h2v-3zM284 165v2h2v-2zM284 170v2h2v-2zM284 179v1h2v-1zM286 119v2h3v-2zM286 163v4h3v-4zM286 172v2h3v-2zM289 160v3h2v-3zM289 167v3h2v-3zM291 103v2h3v-2zM291 165v5h3v-5zM291 172v2h3v-2zM291 176v3h3v-3zM294 82v2h2v-2zM294 105v2h2v-2zM294 110v2h2v-2zM294 165v2h2v-2zM294 176v4h2v-4zM296 84v3h2v-3zM296 105v2h2v-2zM296 160v3h2v-3zM296 167v7h2v-7zM298 105v2h3v-2zM298 163v2h3v-2zM298 167v3h3v-3zM298 174v6h3v-6zM301 105v2h2v-2zM301 160v5h2v-5zM301 176v3h2v-3zM305 170v4h3v-4zM308 84v3h2v-3zM308 160v3h2v-3zM310 176v3h3v-3zM313 84v3h2v-3zM313 172v2h2v-2zM315 84v3h2v-3zM315 110v2h2v-2zM315 119v2h2v-2zM315 156v2h2v-2zM315 179v1h2v-1zM317 84v3h3v-3zM317 126v2h3v-2zM320 105v2h2v-2zM322 84v3h2v-3zM322 110v2h2v-2zM322 114v5h2v-5zM322 130v3h2v-3zM324 103v4h3v-4zM324 165v2h3v-2zM324 176v3h3v-3zM329 110v2h3v-2zM329 179v1h3v-1zM332 84v3h2v-3zM332 110v2h2v-2zM332 114v3h2v-3zM332 119v2h2v-2zM334 179v1h2v-1zM336 87v2h3v-2zM339 87v2h2v-2zM339 107v3h2v-3zM339 172v2h2v-2zM339 179v1h2v-1zM343 105v5h3v-5zM343 119v2h3v-2zM343 176v3h3v-3zM346 126v2h2v-2zM348 91v3h3v-3zM348 105v5h3v-5zM348 174v5h3v-5zM351 105v2h2v-2zM351 121v3h2v-3zM351 172v4h2v-4zM353 87v2h2v-2zM355 87v2h3v-2zM355 117v2h3v-2zM355 126v2h3v-2zM355 149v2h3v-2zM355 174v2h3v-2zM358 87v2h2v-2zM360 172v2h2v-2zM362 110v2h3v-2zM362 170v2h3v-2zM362 174v2h3v-2zM365 107v3h2v-3zM365 165v2h2v-2zM367 87v4h3v-4zM367 167v3h3v-3zM370 87v2h2v-2zM370 174v2h2v-2zM372 146v3h2v-3zM374 89v2h3v-2zM374 170v4h3v-4zM377 89v5h2v-5zM377 172v2h2v-2zM379 110v2h2v-2zM379 170v2h2v-2zM379 179v1h2v-1zM381 87v4h3v-4zM384 87v2h2v-2zM384 107v5h2v-5zM384 176v3h2v-3zM386 114v3h2v-3zM388 107v3h3v-3zM388 112v2h3v-2zM388 172v2h3v-2zM391 87v2h2v-2zM391 110v2h2v-2zM391 128v2h2v-2zM391 174v5h2v-5zM393 144v2h3v-2zM393 174v2h3v-2zM396 89v2h2v-2zM396 105v2h2v-2zM396 170v2h2v-2zM398 94v2h2v-2zM398 172v2h2v-2zM403 91v3h2v-3zM403 107v5h2v-5zM403 144v2h2v-2zM403 179v1h2v-1zM405 89v2h2v-2zM407 172v2h3v-2zM410 107v3h2v-3zM412 174v2h3v-2zM415 110v2h2v-2zM415 128v2h2v-2zM417 87v2h2v-2zM417 112v5h2v-5zM417 140v2h2v-2zM417 172v4h2v-4zM419 89v2h3v-2zM419 112v2h3v-2zM419 172v2h3v-2zM422 89v2h2v-2zM422 128v5h2v-5zM424 114v3h2v-3zM424 142v2h2v-2zM424 170v2h2v-2zM424 174v5h2v-5zM426 84v3h3v-3zM426 114v3h3v-3zM426 124v2h3v-2zM426 140v2h3v-2zM426 176v3h3v-3zM429 112v2h2v-2zM429 174v2h2v-2zM436 107v3h2v-3zM438 89v2h3v-2zM438 114v3h3v-3zM441 89v5h2v-5zM441 110v2h2v-2zM443 89v2h2v-2zM443 107v5h2v-5zM445 89v2h3v-2zM445 165v2h3v-2zM448 89v2h2v-2zM448 107v3h2v-3zM448 165v2h2v-2zM450 91v3h3v-3zM450 110v2h3v-2zM450 165v2h3v-2zM453 91v5h2v-5zM453 110v2h2v-2zM453 133v2h2v-2zM453 163v2h2v-2zM455 163v2h2v-2zM460 89v2h2v-2zM460 112v2h2v-2zM460 130v3h2v-3zM460 149v2h2v-2zM460 153v3h2v-3zM462 114v3h2v-3zM462 149v2h2v-2zM462 156v2h2v-2zM464 114v3h3v-3zM464 128v2h3v-2zM464 153v3h3v-3zM467 91v3h2v-3zM469 144v5h3v-5zM472 107v7h2v-7zM472 135v2h2v-2zM472 142v2h2v-2zM474 110v2h2v-2zM474 128v2h2v-2zM474 137v3h2v-3zM474 144v2h2v-2zM476 110v4h3v-4zM476 124v2h3v-2zM476 135v2h3v-2zM479 114v3h2v-3zM481 114v3h2v-3zM481 126v2h2v-2zM483 89v2h3v-2zM483 135v2h3v-2zM483 144v2h3v-2zM486 91v3h2v-3zM486 96v2h2v-2zM486 112v2h2v-2zM486 137v3h2v-3zM488 117v2h2v-2zM488 126v2h2v-2zM490 133v4h3v-4zM493 110v2h2v-2zM493 133v4h2v-4zM495 91v3h3v-3zM495 133v4h3v-4zM498 126v2h2v-2zM498 133v2h2v-2zM502 91v3h3v-3zM502 98v2h3v-2zM502 130v3h3v-3zM505 98v2h2v-2zM505 130v5h2v-5zM507 94v2h2v-2zM509 91v3h3v-3zM509 96v2h3v-2zM509 112v9h3v-9zM509 124v2h3v-2zM512 94v2h2v-2zM512 112v2h2v-2zM512 124v2h2v-2zM512 133v2h2v-2zM514 98v2h3v-2zM517 114v3h2v-3zM517 121v3h2v-3zM517 133v4h2v-4zM519 96v2h2v-2zM519 114v3h2v-3zM519 133v2h2v-2zM521 124v4h3v-4zM524 94v2h2v-2zM524 114v3h2v-3zM524 126v2h2v-2zM526 114v3h2v-3zM526 121v3h2v-3zM528 96v2h3v-2zM528 114v5h3v-5zM531 114v5h2v-5zM533 117v2h3v-2zM533 124v2h3v-2zM536 112v5h2v-5zM540 96v2h3v-2zM540 110v2h3v-2zM543 96v2h2v-2zM547 110v2h3v-2zM550 114v3h2v-3zM557 96v2h2v-2zM566 96v2h3v-2zM569 96v2h2v-2zM571 94v2h3v-2zM574 98v2h2v-2zM574 110v4h2v-4zM574 117v2h2v-2zM576 96v2h2v-2zM581 98v5h2v-5zM585 105v2h3v-2zM590 96v2h2v-2zM590 112v2h2v-2zM592 98v5h3v-5zM592 114v3h3v-3zM595 110v2h2v-2zM597 96v2h3v-2zM597 110v2h3v-2zM602 98v2h2v-2zM602 107v3h2v-3zM602 112v2h2v-2zM604 107v5h3v-5zM607 103v2h2v-2zM607 110v2h2v-2zM609 110v2h2v-2zM611 110v2h3v-2zM611 114v3h3v-3zM614 100v3h2v-3zM614 105v2h2v-2zM614 112v5h2v-5zM616 103v2h3v-2zM616 110v2h3v-2zM619 100v3h2v-3zM619 112v2h2v-2zM621 100v3h2v-3zM623 100v3h3v-3zM623 107v3h3v-3zM623 112v2h3v-2zM626 110v2h2v-2zM628 110v2h2v-2zM630 105v2h3v-2zM633 96v2h2v-2zM633 103v7h2v-7zM635 107v3h3v-3zM642 103v2h3v-2zM647 103v4h2v-4zM649 107v5h3v-5zM652 112v2h2v-2zM654 100v3h3v-3zM657 105v5h2v-5zM659 105v5h2v-5zM661 103v2h3v-2zM661 112v2h3v-2zM668 105v2h3v-2zM671 107v3h2v-3zM676 107v3h2v-3zM680 107v3h3v-3zM680 112v2h3v-2zM683 100v3h2v-3zM687 105v2h3v-2zM690 103v2h2v-2zM690 110v2h2v-2z"/>
<path fill="#ff7600" d="M142 167v3h2v-3zM142 176v4h2v-4zM144 158v2h3v-2zM147 179v1h2v-1zM149 167v3h2v-3zM161 158v2h2v-2zM161 170v2h2v-2zM161 174v2h2v-2zM163 133v2h3v-2zM163 172v2h3v-2zM163 176v4h3v-4zM166 158v2h2v-2zM173 172v2h2v-2zM175 140v2h2v-2zM175 146v3h2v-3zM175 151v2h2v-2zM175 156v2h2v-2zM175 160v3h2v-3zM175 179v1h2v-1zM177 151v2h3v-2zM177 167v7h3v-7zM184 160v3h3v-3zM187 124v2h2v-2zM187 130v3h2v-3zM187 142v2h2v-2zM187 160v5h2v-5zM187 167v3h2v-3zM189 100v3h3v-3zM189 158v7h3v-7zM189 167v7h3v-7zM192 163v4h2v-4zM194 100v3h2v-3zM194 158v5h2v-5zM194 165v2h2v-2zM196 75v5h3v-5zM196 163v4h3v-4zM199 78v2h2v-2zM199 100v3h2v-3zM199 124v2h2v-2zM199 151v2h2v-2zM199 163v2h2v-2zM201 149v2h2v-2zM201 163v2h2v-2zM201 174v2h2v-2zM203 82v5h3v-5zM203 149v2h3v-2zM203 156v9h3v-9zM206 151v2h2v-2zM206 167v5h2v-5zM208 80v2h3v-2zM208 112v2h3v-2zM208 117v2h3v-2zM208 121v3h3v-3zM208 133v2h3v-2zM208 137v3h3v-3zM208 165v2h3v-2zM208 174v2h3v-2zM208 179v1h3v-1zM211 98v2h2v-2zM211 135v2h2v-2zM211 140v2h2v-2zM211 151v5h2v-5zM211 167v5h2v-5zM213 84v3h2v-3zM213 89v2h2v-2zM213 94v4h2v-4zM213 153v5h2v-5zM213 170v4h2v-4zM215 80v2h3v-2zM215 119v2h3v-2zM215 156v2h3v-2zM215 160v3h3v-3zM215 167v5h3v-5zM218 98v2h2v-2zM218 130v3h2v-3zM218 146v3h2v-3zM218 156v4h2v-4zM220 98v2h2v-2zM220 105v2h2v-2zM220 142v2h2v-2zM220 156v7h2v-7zM220 176v4h2v-4zM222 114v3h3v-3zM222 121v3h3v-3zM222 126v4h3v-4zM222 172v2h3v-2zM222 176v4h3v-4zM225 82v5h2v-5zM225 137v3h2v-3zM225 142v2h2v-2zM227 87v2h3v-2zM227 96v4h3v-4zM227 167v3h3v-3zM230 78v4h2v-4zM230 117v2h2v-2zM230 124v2h2v-2zM230 144v2h2v-2zM232 82v2h2v-2zM232 103v2h2v-2zM232 110v2h2v-2zM232 158v2h2v-2zM232 163v2h2v-2zM234 82v2h3v-2zM234 163v2h3v-2zM234 174v5h3v-5zM237 140v2h2v-2zM237 153v3h2v-3zM237 160v3h2v-3zM237 167v5h2v-5zM237 176v4h2v-4zM239 82v2h2v-2zM239 100v3h2v-3zM239 105v2h2v-2zM239 156v2h2v-2zM239 165v2h2v-2zM241 82v2h3v-2zM241 133v2h3v-2zM241 149v2h3v-2zM241 156v2h3v-2zM241 179v1h3v-1zM244 84v3h2v-3zM244 105v2h2v-2zM244 112v2h2v-2zM244 156v2h2v-2zM244 160v5h2v-5zM244 179v1h2v-1zM246 82v2h3v-2zM246 103v2h3v-2zM246 130v3h3v-3zM246 165v2h3v-2zM246 174v5h3v-5zM249 84v3h2v-3zM249 103v4h2v-4zM249 110v2h2v-2zM249 153v3h2v-3zM249 158v2h2v-2zM249 172v4h2v-4zM251 82v2h2v-2zM251 117v2h2v-2zM253 100v5h3v-5zM253 163v4h3v-4zM253 174v2h3v-2zM256 98v2h2v-2zM258 89v2h2v-2zM260 160v5h3v-5zM260 170v4h3v-4zM263 82v2h2v-2zM263 172v2h2v-2zM265 91v12h3v-12zM268 89v2h2v-2zM268 160v3h2v-3zM270 84v3h2v-3zM270 89v2h2v-2zM270 100v3h2v-3zM270 105v2h2v-2zM270 163v2h2v-2zM275 84v3h2v-3zM275 100v5h2v-5zM275 163v2h2v-2zM275 179v1h2v-1zM277 103v2h2v-2zM277 170v2h2v-2zM277 179v1h2v-1zM279 87v2h3v-2zM279 163v2h3v-2zM279 170v4h3v-4zM282 82v5h2v-5zM282 112v5h2v-5zM282 121v3h2v-3zM282 133v2h2v-2zM282 174v2h2v-2zM284 100v3h2v-3zM286 100v3h3v-3zM286 105v5h3v-5zM286 160v3h3v-3zM286 170v2h3v-2zM286 179v1h3v-1zM289 89v2h2v-2zM291 84v3h3v-3zM291 110v2h3v-2zM291 126v2h3v-2zM291 160v3h3v-3zM291 170v2h3v-2zM291 179v1h3v-1zM294 160v5h2v-5zM294 167v9h2v-9zM296 89v2h2v-2zM296 100v3h2v-3zM296 174v2h2v-2zM298 100v3h3v-3zM298 172v2h3v-2zM301 84v3h2v-3zM301 103v2h2v-2zM301 165v2h2v-2zM301 172v2h2v-2zM303 112v2h2v-2zM303 130v3h2v-3zM303 160v5h2v-5zM303 170v2h2v-2zM303 174v2h2v-2zM303 179v1h2v-1zM305 103v4h3v-4zM305 160v3h3v-3zM305 179v1h3v-1zM308 165v7h2v-7zM308 176v3h2v-3zM310 84v3h3v-3zM310 89v2h3v-2zM313 89v2h2v-2zM313 167v3h2v-3zM313 179v1h2v-1zM315 87v2h2v-2zM315 107v3h2v-3zM317 103v2h3v-2zM317 110v2h3v-2zM317 121v3h3v-3zM317 128v2h3v-2zM317 156v2h3v-2zM320 87v2h2v-2zM320 176v3h2v-3zM322 107v3h2v-3zM324 87v2h3v-2zM324 167v3h3v-3zM324 172v2h3v-2zM327 84v3h2v-3zM327 179v1h2v-1zM329 91v3h3v-3zM332 105v2h2v-2zM332 176v4h2v-4zM334 107v3h2v-3zM339 174v2h2v-2zM341 87v4h2v-4zM343 87v2h3v-2zM346 87v2h2v-2zM346 103v2h2v-2zM346 107v3h2v-3zM346 176v3h2v-3zM348 89v2h3v-2zM353 107v3h2v-3zM355 114v3h3v-3zM355 172v2h3v-2zM358 174v2h2v-2zM360 91v3h2v-3zM360 174v2h2v-2zM362 87v4h3v-4zM362 94v2h3v-2zM362 160v3h3v-3zM365 89v2h2v-2zM365 170v2h2v-2zM367 91v3h3v-3zM367 103v2h3v-2zM367 110v2h3v-2zM367 170v2h3v-2zM370 89v2h2v-2zM370 170v2h2v-2zM372 87v2h2v-2zM377 87v2h2v-2zM377 105v2h2v-2zM377 170v2h2v-2zM379 112v2h2v-2zM379 146v3h2v-3zM379 174v2h2v-2zM381 94v2h3v-2zM381 107v3h3v-3zM384 146v3h2v-3zM384 172v2h2v-2zM386 87v2h2v-2zM386 110v2h2v-2zM386 172v2h2v-2zM388 158v5h3v-5zM388 165v2h3v-2zM391 107v3h2v-3zM393 89v2h3v-2zM393 160v3h3v-3zM393 170v4h3v-4zM396 94v2h2v-2zM396 103v2h2v-2zM396 146v3h2v-3zM396 153v3h2v-3zM396 158v2h2v-2zM396 167v3h2v-3zM398 89v2h2v-2zM400 91v3h3v-3zM400 172v2h3v-2zM403 87v2h2v-2zM403 170v4h2v-4zM405 107v3h2v-3zM405 112v2h2v-2zM405 172v4h2v-4zM407 96v2h3v-2zM407 107v3h3v-3zM407 151v2h3v-2zM410 112v2h2v-2zM410 144v2h2v-2zM410 174v2h2v-2zM412 105v5h3v-5zM412 170v2h3v-2zM415 105v2h2v-2zM415 114v3h2v-3zM415 142v2h2v-2zM415 176v3h2v-3zM417 107v3h2v-3zM419 107v5h3v-5zM419 144v2h3v-2zM422 110v2h2v-2zM422 119v2h2v-2zM422 170v2h2v-2zM426 87v2h3v-2zM426 170v4h3v-4zM429 107v3h2v-3zM429 140v2h2v-2zM429 170v4h2v-4zM431 112v2h3v-2zM431 140v2h3v-2zM431 170v2h3v-2zM434 89v2h2v-2zM434 112v2h2v-2zM434 140v2h2v-2zM436 105v2h2v-2zM438 112v2h3v-2zM438 137v3h3v-3zM438 167v3h3v-3zM441 112v2h2v-2zM443 91v3h2v-3zM443 105v2h2v-2zM445 107v3h3v-3zM445 135v2h3v-2zM448 91v3h2v-3zM448 117v2h2v-2zM448 135v2h2v-2zM450 107v3h3v-3zM450 135v2h3v-2zM450 163v2h3v-2zM453 98v2h2v-2zM453 144v2h2v-2zM453 151v2h2v-2zM453 158v2h2v-2zM455 110v2h2v-2zM455 158v2h2v-2zM457 105v2h3v-2zM457 110v2h3v-2zM457 151v2h3v-2zM460 114v3h2v-3zM460 146v3h2v-3zM460 151v2h2v-2zM462 110v4h2v-4zM462 128v2h2v-2zM462 153v3h2v-3zM464 110v2h3v-2zM464 137v7h3v-7zM464 149v2h3v-2zM467 103v7h2v-7zM469 91v3h3v-3zM469 110v2h3v-2zM469 128v2h3v-2zM469 140v2h3v-2zM472 91v3h2v-3zM472 137v5h2v-5zM472 146v3h2v-3zM476 91v3h3v-3zM476 133v2h3v-2zM479 124v2h2v-2zM479 133v7h2v-7zM481 91v3h2v-3zM481 107v3h2v-3zM481 135v2h2v-2zM483 124v2h3v-2zM483 133v2h3v-2zM486 107v3h2v-3zM486 130v3h2v-3zM488 94v2h2v-2zM488 110v4h2v-4zM488 135v5h2v-5zM490 94v2h3v-2zM490 98v2h3v-2zM490 137v3h3v-3zM493 96v2h2v-2zM495 94v2h3v-2zM495 100v3h3v-3zM495 130v3h3v-3zM498 96v2h2v-2zM498 130v3h2v-3zM500 124v4h2v-4zM500 130v3h2v-3zM502 96v2h3v-2zM502 100v3h3v-3zM502 107v3h3v-3zM502 128v2h3v-2zM505 96v2h2v-2zM505 107v3h2v-3zM505 112v2h2v-2zM507 112v5h2v-5zM507 130v3h2v-3zM509 94v2h3v-2zM509 110v2h3v-2zM509 128v2h3v-2zM509 133v2h3v-2zM512 126v2h2v-2zM512 130v3h2v-3zM514 110v2h3v-2zM517 94v2h2v-2zM517 130v3h2v-3zM519 94v2h2v-2zM519 110v2h2v-2zM519 128v2h2v-2zM521 96v4h3v-4zM521 112v5h3v-5zM521 128v2h3v-2zM524 96v2h2v-2zM524 128v2h2v-2zM526 94v4h2v-4zM526 112v2h2v-2zM526 117v2h2v-2zM528 98v2h3v-2zM528 119v2h3v-2zM531 94v4h2v-4zM531 110v2h2v-2zM533 98v7h3v-7zM533 126v2h3v-2zM536 94v2h2v-2zM538 96v2h2v-2zM550 96v2h2v-2zM552 96v2h3v-2zM552 110v2h3v-2zM555 110v2h2v-2zM557 110v2h2v-2zM559 98v2h3v-2zM562 96v4h2v-4zM562 110v2h2v-2zM564 96v4h2v-4zM571 96v2h3v-2zM571 112v5h3v-5zM574 96v2h2v-2zM574 100v3h2v-3zM576 100v3h2v-3zM576 112v2h2v-2zM578 96v2h3v-2zM578 100v5h3v-5zM581 112v2h2v-2zM583 98v2h2v-2zM583 110v2h2v-2zM585 96v2h3v-2zM585 103v2h3v-2zM585 107v3h3v-3zM590 103v4h2v-4zM592 112v2h3v-2zM595 98v2h2v-2zM595 103v2h2v-2zM595 107v3h2v-3zM595 112v2h2v-2zM597 98v5h3v-5zM597 112v2h3v-2zM600 96v9h2v-9zM602 105v2h2v-2zM602 110v2h2v-2zM604 100v3h3v-3zM604 105v2h3v-2zM604 112v2h3v-2zM607 105v2h2v-2zM609 100v3h2v-3zM609 105v5h2v-5zM611 96v4h3v-4zM611 107v3h3v-3zM614 110v2h2v-2zM616 96v2h3v-2zM616 112v2h3v-2zM619 98v2h2v-2zM619 110v2h2v-2zM621 96v2h2v-2zM621 112v5h2v-5zM623 103v2h3v-2zM623 110v2h3v-2zM626 98v2h2v-2zM626 107v3h2v-3zM626 112v2h2v-2zM628 100v3h2v-3zM628 105v2h2v-2zM640 105v7h2v-7zM645 105v2h2v-2zM647 112v2h2v-2zM649 100v3h3v-3zM652 100v3h2v-3zM652 105v5h2v-5zM657 112v2h2v-2zM661 100v3h3v-3zM671 105v2h2v-2zM690 112v2h2v-2z"/>
<path fill="#ff4e00" d="M149 170v2h2v-2zM158 174v2h3v-2zM161 179v1h2v-1zM173 176v3h2v-3zM177 146v3h3v-3zM177 158v2h3v-2zM177 165v2h3v-2zM184 121v3h3v-3zM187 73v2h2v-2zM187 100v3h2v-3zM187 146v5h2v-5zM187 156v2h2v-2zM187 165v2h2v-2zM189 75v3h3v-3zM189 146v5h3v-5zM189 156v2h3v-2zM189 165v2h3v-2zM192 96v2h2v-2zM192 151v5h2v-5zM192 160v3h2v-3zM194 80v2h2v-2zM194 94v2h2v-2zM194 98v2h2v-2zM194 149v4h2v-4zM196 98v2h3v-2zM196 151v2h3v-2zM196 156v2h3v-2zM199 84v3h2v-3zM199 94v2h2v-2zM199 105v2h2v-2zM201 98v2h2v-2zM201 156v2h2v-2zM201 167v5h2v-5zM203 100v3h3v-3zM203 153v3h3v-3zM203 167v3h3v-3zM206 80v2h2v-2zM206 94v2h2v-2zM206 100v3h2v-3zM206 153v7h2v-7zM206 172v2h2v-2zM208 78v2h3v-2zM208 100v5h3v-5zM208 107v3h3v-3zM208 146v3h3v-3zM208 160v3h3v-3zM208 167v3h3v-3zM208 172v2h3v-2zM208 176v3h3v-3zM211 80v2h2v-2zM211 84v5h2v-5zM211 100v3h2v-3zM211 107v3h2v-3zM211 149v2h2v-2zM211 156v2h2v-2zM211 165v2h2v-2zM213 80v2h2v-2zM213 91v3h2v-3zM213 98v2h2v-2zM213 158v2h2v-2zM213 163v4h2v-4zM215 82v2h3v-2zM215 98v2h3v-2zM215 165v2h3v-2zM215 174v2h3v-2zM218 96v2h2v-2zM218 153v3h2v-3zM218 165v2h2v-2zM218 174v2h2v-2zM220 87v2h2v-2zM220 100v3h2v-3zM220 172v2h2v-2zM222 80v4h3v-4zM222 100v3h3v-3zM222 137v3h3v-3zM222 160v3h3v-3zM222 174v2h3v-2zM225 98v5h2v-5zM225 158v5h2v-5zM225 167v3h2v-3zM227 82v2h3v-2zM227 100v3h3v-3zM230 82v2h2v-2zM230 98v2h2v-2zM230 133v2h2v-2zM230 158v5h2v-5zM230 165v5h2v-5zM230 172v2h2v-2zM230 179v1h2v-1zM232 87v2h2v-2zM232 156v2h2v-2zM234 87v2h3v-2zM234 91v3h3v-3zM234 158v2h3v-2zM237 84v3h2v-3zM237 114v3h2v-3zM237 163v4h2v-4zM237 172v2h2v-2zM239 98v2h2v-2zM239 103v2h2v-2zM239 153v3h2v-3zM239 160v3h2v-3zM239 176v3h2v-3zM241 87v2h3v-2zM241 103v2h3v-2zM241 158v2h3v-2zM241 165v2h3v-2zM244 87v2h2v-2zM244 176v3h2v-3zM246 98v5h3v-5zM246 163v2h3v-2zM246 172v2h3v-2zM249 135v2h2v-2zM249 160v5h2v-5zM249 170v2h2v-2zM249 176v3h2v-3zM251 87v2h2v-2zM251 103v2h2v-2zM251 160v3h2v-3zM251 172v2h2v-2zM251 179v1h2v-1zM253 84v3h3v-3zM253 121v3h3v-3zM253 170v2h3v-2zM256 87v2h2v-2zM256 100v3h2v-3zM258 91v7h2v-7zM260 114v3h3v-3zM263 84v3h2v-3zM263 167v3h2v-3zM265 87v2h3v-2zM270 179v1h2v-1zM272 87v2h3v-2zM277 100v3h2v-3zM279 100v3h3v-3zM279 179v1h3v-1zM282 160v7h2v-7zM282 170v2h2v-2zM284 87v2h2v-2zM284 91v3h2v-3zM284 98v2h2v-2zM286 103v2h3v-2zM289 87v2h2v-2zM289 98v2h2v-2zM289 103v2h2v-2zM291 163v2h3v-2zM294 100v5h2v-5zM296 87v2h2v-2zM296 91v5h2v-5zM298 89v2h3v-2zM301 87v2h2v-2zM301 170v2h2v-2zM303 84v3h2v-3zM303 165v2h2v-2zM303 172v2h2v-2zM303 176v3h2v-3zM305 100v3h3v-3zM305 163v7h3v-7zM305 176v3h3v-3zM308 100v3h2v-3zM308 158v2h2v-2zM308 172v2h2v-2zM310 91v3h3v-3zM310 100v3h3v-3zM310 160v7h3v-7zM310 170v4h3v-4zM310 179v1h3v-1zM313 94v2h2v-2zM313 100v3h2v-3zM313 165v2h2v-2zM313 174v5h2v-5zM315 100v3h2v-3zM315 105v2h2v-2zM315 167v3h2v-3zM315 176v3h2v-3zM320 84v3h2v-3zM322 87v2h2v-2zM322 176v3h2v-3zM324 100v3h3v-3zM324 158v2h3v-2zM327 87v2h2v-2zM327 156v2h2v-2zM327 172v2h2v-2zM329 94v2h3v-2zM329 176v3h3v-3zM334 165v2h2v-2zM334 174v2h2v-2zM336 176v4h3v-4zM339 91v3h2v-3zM339 100v7h2v-7zM341 105v2h2v-2zM341 156v2h2v-2zM341 163v2h2v-2zM341 172v4h2v-4zM343 98v2h3v-2zM343 103v2h3v-2zM343 165v2h3v-2zM346 89v2h2v-2zM346 105v2h2v-2zM348 87v2h3v-2zM348 103v2h3v-2zM348 165v2h3v-2zM348 170v4h3v-4zM351 89v2h2v-2zM351 100v3h2v-3zM351 165v2h2v-2zM351 170v2h2v-2zM353 103v4h2v-4zM353 174v2h2v-2zM355 107v3h3v-3zM355 170v2h3v-2zM358 107v3h2v-3zM358 172v2h2v-2zM360 89v2h2v-2zM362 151v2h3v-2zM362 165v2h3v-2zM365 103v2h2v-2zM367 149v7h3v-7zM367 163v2h3v-2zM372 89v2h2v-2zM372 167v3h2v-3zM374 151v2h3v-2zM374 163v4h3v-4zM381 103v2h3v-2zM381 153v3h3v-3zM381 163v2h3v-2zM384 89v2h2v-2zM384 156v2h2v-2zM384 170v2h2v-2zM386 89v2h2v-2zM386 107v3h2v-3zM386 174v2h2v-2zM388 94v2h3v-2zM388 105v2h3v-2zM388 163v2h3v-2zM388 170v2h3v-2zM391 146v3h2v-3zM391 172v2h2v-2zM393 87v2h3v-2zM393 107v3h3v-3zM396 91v3h2v-3zM396 96v4h2v-4zM396 149v4h2v-4zM396 156v2h2v-2zM396 160v3h2v-3zM398 91v3h2v-3zM398 151v2h2v-2zM398 163v4h2v-4zM398 170v2h2v-2zM400 96v2h3v-2zM400 110v2h3v-2zM400 167v3h3v-3zM403 105v2h2v-2zM405 91v3h2v-3zM405 105v2h2v-2zM405 110v2h2v-2zM405 144v2h2v-2zM407 94v2h3v-2zM407 103v2h3v-2zM407 149v2h3v-2zM407 170v2h3v-2zM410 170v4h2v-4zM412 103v2h3v-2zM412 144v5h3v-5zM412 167v3h3v-3zM415 107v3h2v-3zM415 144v2h2v-2zM415 163v2h2v-2zM417 144v2h2v-2zM417 176v3h2v-3zM424 105v2h2v-2zM424 163v2h2v-2zM426 110v4h3v-4zM429 149v2h2v-2zM429 167v3h2v-3zM431 89v2h3v-2zM431 105v2h3v-2zM434 91v3h2v-3zM434 158v2h2v-2zM434 165v2h2v-2zM436 89v5h2v-5zM436 144v2h2v-2zM436 153v3h2v-3zM436 160v3h2v-3zM436 165v2h2v-2zM438 107v5h3v-5zM441 107v3h2v-3zM441 137v3h2v-3zM441 163v4h2v-4zM443 137v3h2v-3zM443 163v2h2v-2zM445 91v5h3v-5zM445 105v2h3v-2zM445 144v2h3v-2zM445 163v2h3v-2zM448 163v2h2v-2zM450 94v2h3v-2zM453 103v2h2v-2zM453 137v3h2v-3zM453 146v3h2v-3zM453 153v5h2v-5zM455 105v2h2v-2zM455 160v3h2v-3zM457 153v3h3v-3zM460 91v3h2v-3zM462 89v2h2v-2zM462 142v2h2v-2zM462 146v3h2v-3zM462 151v2h2v-2zM467 130v7h2v-7zM469 94v2h3v-2zM469 133v7h3v-7zM472 94v4h2v-4zM472 128v7h2v-7zM474 91v5h2v-5zM474 103v2h2v-2zM476 94v4h3v-4zM476 137v3h3v-3zM479 112v2h2v-2zM479 142v2h2v-2zM481 94v2h2v-2zM481 103v4h2v-4zM483 91v3h3v-3zM483 110v2h3v-2zM486 94v2h2v-2zM486 110v2h2v-2zM486 128v2h2v-2zM486 133v2h2v-2zM488 91v3h2v-3zM490 96v2h3v-2zM490 105v2h3v-2zM493 107v3h2v-3zM493 126v2h2v-2zM495 96v4h3v-4zM495 107v5h3v-5zM498 94v2h2v-2zM498 103v2h2v-2zM498 107v5h2v-5zM498 128v2h2v-2zM500 94v2h2v-2zM500 107v3h2v-3zM502 112v2h3v-2zM505 100v3h2v-3zM507 96v4h2v-4zM509 126v2h3v-2zM509 130v3h3v-3zM512 128v2h2v-2zM514 100v5h3v-5zM514 112v5h3v-5zM517 112v2h2v-2zM517 124v2h2v-2zM519 100v3h2v-3zM519 112v2h2v-2zM521 100v3h3v-3zM528 94v2h3v-2zM533 96v2h3v-2zM533 110v4h3v-4zM536 96v4h2v-4zM538 98v2h2v-2zM545 96v2h2v-2zM545 100v3h2v-3zM545 112v2h2v-2zM547 100v5h3v-5zM547 107v3h3v-3zM547 112v2h3v-2zM550 100v3h2v-3zM555 100v3h2v-3zM557 100v3h2v-3zM557 107v3h2v-3zM557 112v2h2v-2zM559 96v2h3v-2zM559 112v2h3v-2zM564 100v3h2v-3zM564 110v2h2v-2zM566 100v3h3v-3zM566 110v2h3v-2zM569 100v5h2v-5zM571 100v3h3v-3zM571 110v2h3v-2zM576 103v2h2v-2zM576 107v3h2v-3zM581 107v5h2v-5zM583 107v3h2v-3zM583 112v2h2v-2zM588 114v3h2v-3zM590 98v2h2v-2zM592 103v2h3v-2zM597 103v7h3v-7zM600 107v3h2v-3zM607 98v2h2v-2zM609 103v2h2v-2zM614 98v2h2v-2zM614 103v2h2v-2zM614 107v3h2v-3zM616 107v3h3v-3zM619 103v7h2v-7zM621 98v2h2v-2zM626 103v2h2v-2zM628 103v2h2v-2zM628 112v2h2v-2zM635 105v2h3v-2zM640 98v2h2v-2zM640 103v2h2v-2zM642 100v3h3v-3zM642 112v2h3v-2zM647 100v3h2v-3zM649 105v2h3v-2zM678 112v2h2v-2zM690 105v5h2v-5z"/>
<path fill="#ff2700" d="M175 114v3h2v-3zM175 165v2h2v-2zM175 176v3h2v-3zM187 75v5h2v-5zM187 98v2h2v-2zM187 119v2h2v-2zM187 153v3h2v-3zM189 80v2h3v-2zM189 87v2h3v-2zM189 151v5h3v-5zM192 80v2h2v-2zM192 98v2h2v-2zM192 156v4h2v-4zM194 78v2h2v-2zM194 82v5h2v-5zM196 84v5h3v-5zM196 91v3h3v-3zM196 153v3h3v-3zM199 82v2h2v-2zM199 96v4h2v-4zM199 156v2h2v-2zM199 160v3h2v-3zM201 82v5h2v-5zM201 89v2h2v-2zM201 94v4h2v-4zM201 151v2h2v-2zM201 158v5h2v-5zM201 165v2h2v-2zM201 172v2h2v-2zM203 87v2h3v-2zM203 91v3h3v-3zM203 151v2h3v-2zM203 165v2h3v-2zM206 84v3h2v-3zM206 89v5h2v-5zM206 96v2h2v-2zM206 160v5h2v-5zM208 82v2h3v-2zM208 96v2h3v-2zM208 149v2h3v-2zM208 163v2h3v-2zM211 163v2h2v-2zM211 172v2h2v-2zM213 100v3h2v-3zM213 167v3h2v-3zM215 84v3h3v-3zM215 91v3h3v-3zM215 96v2h3v-2zM215 100v3h3v-3zM215 153v3h3v-3zM218 82v5h2v-5zM218 91v5h2v-5zM218 100v3h2v-3zM218 151v2h2v-2zM218 167v3h2v-3zM220 82v2h2v-2zM220 153v3h2v-3zM222 96v2h3v-2zM222 151v5h3v-5zM222 158v2h3v-2zM222 165v2h3v-2zM225 87v2h2v-2zM225 96v2h2v-2zM227 84v3h3v-3zM230 96v2h2v-2zM230 100v3h2v-3zM230 153v3h2v-3zM230 163v2h2v-2zM230 170v2h2v-2zM230 174v5h2v-5zM232 96v4h2v-4zM232 117v2h2v-2zM232 153v3h2v-3zM232 174v2h2v-2zM234 96v4h3v-4zM234 156v2h3v-2zM237 91v3h2v-3zM237 98v2h2v-2zM237 158v2h2v-2zM239 84v5h2v-5zM239 94v2h2v-2zM241 98v2h3v-2zM246 84v3h3v-3zM246 156v2h3v-2zM246 179v1h3v-1zM249 87v4h2v-4zM249 96v2h2v-2zM249 179v1h2v-1zM253 87v2h3v-2zM253 96v4h3v-4zM256 89v2h2v-2zM256 96v2h2v-2zM258 87v2h2v-2zM258 98v5h2v-5zM260 84v3h3v-3zM260 89v2h3v-2zM263 89v2h2v-2zM263 176v3h2v-3zM268 91v9h2v-9zM270 87v2h2v-2zM270 98v2h2v-2zM272 94v2h3v-2zM272 100v3h3v-3zM275 87v4h2v-4zM275 126v2h2v-2zM277 89v2h2v-2zM277 96v2h2v-2zM279 98v2h3v-2zM282 105v2h2v-2zM282 167v3h2v-3zM282 179v1h2v-1zM284 89v2h2v-2zM284 94v2h2v-2zM286 87v2h3v-2zM286 91v3h3v-3zM289 94v2h2v-2zM294 84v3h2v-3zM294 89v2h2v-2zM294 98v2h2v-2zM296 98v2h2v-2zM298 165v2h3v-2zM301 89v2h2v-2zM301 100v3h2v-3zM301 167v3h2v-3zM301 174v2h2v-2zM303 87v4h2v-4zM303 94v2h2v-2zM303 100v3h2v-3zM303 167v3h2v-3zM305 87v2h3v-2zM308 87v2h2v-2zM308 91v3h2v-3zM308 98v2h2v-2zM308 174v2h2v-2zM308 179v1h2v-1zM310 98v2h3v-2zM310 158v2h3v-2zM310 174v2h3v-2zM313 87v2h2v-2zM313 103v2h2v-2zM313 158v7h2v-7zM313 170v2h2v-2zM315 103v2h2v-2zM315 160v7h2v-7zM315 172v2h2v-2zM317 105v2h3v-2zM317 179v1h3v-1zM320 89v2h2v-2zM320 107v3h2v-3zM320 158v2h2v-2zM320 163v2h2v-2zM320 174v2h2v-2zM322 179v1h2v-1zM324 89v2h3v-2zM324 156v2h3v-2zM324 170v2h3v-2zM324 174v2h3v-2zM327 89v2h2v-2zM327 103v2h2v-2zM327 174v2h2v-2zM329 87v2h3v-2zM329 98v2h3v-2zM329 103v2h3v-2zM329 107v3h3v-3zM329 165v2h3v-2zM332 87v2h2v-2zM332 100v3h2v-3zM332 153v3h2v-3zM334 100v5h2v-5zM334 153v3h2v-3zM334 163v2h2v-2zM336 103v2h3v-2zM336 174v2h3v-2zM339 89v2h2v-2zM339 94v2h2v-2zM341 103v2h2v-2zM341 107v3h2v-3zM341 158v5h2v-5zM341 167v3h2v-3zM343 89v2h3v-2zM343 94v4h3v-4zM343 156v2h3v-2zM343 163v2h3v-2zM343 167v3h3v-3zM343 172v2h3v-2zM346 91v3h2v-3zM346 153v3h2v-3zM346 158v2h2v-2zM346 163v2h2v-2zM346 167v3h2v-3zM348 96v2h3v-2zM348 156v2h3v-2zM348 163v2h3v-2zM351 91v3h2v-3zM351 103v2h2v-2zM351 153v3h2v-3zM351 163v2h2v-2zM353 96v2h2v-2zM353 153v5h2v-5zM353 160v3h2v-3zM353 172v2h2v-2zM355 91v3h3v-3zM355 100v3h3v-3zM358 91v3h2v-3zM358 103v4h2v-4zM358 153v3h2v-3zM358 160v3h2v-3zM358 170v2h2v-2zM360 96v2h2v-2zM360 100v10h2v-10zM362 153v3h3v-3zM362 158v2h3v-2zM362 163v2h3v-2zM365 91v3h2v-3zM365 149v4h2v-4zM365 158v2h2v-2zM365 167v3h2v-3zM367 94v9h3v-9zM367 156v2h3v-2zM367 160v3h3v-3zM370 96v2h2v-2zM370 105v2h2v-2zM370 153v5h2v-5zM372 153v3h2v-3zM372 160v3h2v-3zM372 170v4h2v-4zM374 91v5h3v-5zM374 100v3h3v-3zM374 105v2h3v-2zM374 156v4h3v-4zM374 167v3h3v-3zM377 96v4h2v-4zM377 103v2h2v-2zM377 149v2h2v-2zM377 156v2h2v-2zM377 165v2h2v-2zM379 172v2h2v-2zM381 160v3h3v-3zM381 170v2h3v-2zM384 91v5h2v-5zM384 158v2h2v-2zM384 163v4h2v-4zM386 146v3h2v-3zM386 160v3h2v-3zM386 170v2h2v-2zM388 96v2h3v-2zM388 100v3h3v-3zM391 89v2h2v-2zM391 105v2h2v-2zM391 170v2h2v-2zM393 96v2h3v-2zM393 156v2h3v-2zM396 100v3h2v-3zM396 163v4h2v-4zM398 98v2h2v-2zM398 105v2h2v-2zM398 156v2h2v-2zM398 160v3h2v-3zM400 89v2h3v-2zM400 103v2h3v-2zM400 107v3h3v-3zM400 146v3h3v-3zM400 156v4h3v-4zM400 170v2h3v-2zM403 89v2h2v-2zM403 94v2h2v-2zM405 94v2h2v-2zM405 146v3h2v-3zM405 167v5h2v-5zM407 146v3h3v-3zM407 153v7h3v-7zM407 167v3h3v-3zM410 165v2h2v-2zM412 96v2h3v-2zM412 100v3h3v-3zM412 158v2h3v-2zM412 163v2h3v-2zM415 89v9h2v-9zM415 149v2h2v-2zM415 170v2h2v-2zM417 89v2h2v-2zM417 105v2h2v-2zM417 110v2h2v-2zM417 163v2h2v-2zM417 167v3h2v-3zM419 91v3h3v-3zM419 105v2h3v-2zM419 153v3h3v-3zM419 163v9h3v-9zM422 91v3h2v-3zM422 105v5h2v-5zM424 91v3h2v-3zM424 144v2h2v-2zM424 153v5h2v-5zM426 89v2h3v-2zM426 105v2h3v-2zM426 142v2h3v-2zM426 174v2h3v-2zM429 89v2h2v-2zM429 94v2h2v-2zM429 105v2h2v-2zM429 142v2h2v-2zM429 165v2h2v-2zM431 110v2h3v-2zM431 167v3h3v-3zM434 94v2h2v-2zM434 105v7h2v-7zM434 151v7h2v-7zM436 94v2h2v-2zM436 98v5h2v-5zM436 140v2h2v-2zM436 146v3h2v-3zM436 156v2h2v-2zM436 163v2h2v-2zM438 94v2h3v-2zM441 105v2h2v-2zM441 142v2h2v-2zM443 158v2h2v-2zM445 98v5h3v-5zM445 153v3h3v-3zM445 160v3h3v-3zM448 110v2h2v-2zM448 160v3h2v-3zM450 158v5h3v-5zM453 96v2h2v-2zM453 140v2h2v-2zM453 149v2h2v-2zM455 89v2h2v-2zM455 133v2h2v-2zM455 153v3h2v-3zM457 91v7h3v-7zM457 142v4h3v-4zM457 149v2h3v-2zM460 94v2h2v-2zM460 100v3h2v-3zM460 105v5h2v-5zM460 137v3h2v-3zM462 105v2h2v-2zM464 94v2h3v-2zM464 103v2h3v-2zM467 94v6h2v-6zM469 96v2h3v-2zM469 105v2h3v-2zM472 98v2h2v-2zM472 103v4h2v-4zM474 96v2h2v-2zM474 100v3h2v-3zM474 133v2h2v-2zM476 98v2h3v-2zM476 103v4h3v-4zM479 91v3h2v-3zM479 110v2h2v-2zM479 140v2h2v-2zM481 96v2h2v-2zM481 110v2h2v-2zM481 133v2h2v-2zM483 112v2h3v-2zM483 142v2h3v-2zM486 98v5h2v-5zM486 126v2h2v-2zM488 107v3h2v-3zM488 130v5h2v-5zM490 100v3h3v-3zM490 107v5h3v-5zM493 94v2h2v-2zM493 98v5h2v-5zM495 128v2h3v-2zM498 98v2h2v-2zM498 105v2h2v-2zM500 96v4h2v-4zM500 103v2h2v-2zM500 128v2h2v-2zM502 103v4h3v-4zM505 103v4h2v-4zM507 103v2h2v-2zM507 107v3h2v-3zM507 128v2h2v-2zM509 98v2h3v-2zM509 107v3h3v-3zM512 100v3h2v-3zM512 114v3h2v-3zM514 96v2h3v-2zM514 107v3h3v-3zM514 128v2h3v-2zM517 96v2h2v-2zM517 100v3h2v-3zM517 107v3h2v-3zM517 126v2h2v-2zM519 103v4h2v-4zM521 103v2h3v-2zM521 110v2h3v-2zM524 98v2h2v-2zM524 105v7h2v-7zM526 98v5h2v-5zM526 110v2h2v-2zM528 107v3h3v-3zM528 112v2h3v-2zM531 98v2h2v-2zM531 103v2h2v-2zM536 100v3h2v-3zM536 107v3h2v-3zM538 105v2h2v-2zM540 112v2h3v-2zM543 110v7h2v-7zM545 98v2h2v-2zM545 105v2h2v-2zM545 110v2h2v-2zM547 105v2h3v-2zM550 103v2h2v-2zM550 110v2h2v-2zM552 98v5h3v-5zM555 103v2h2v-2zM557 103v4h2v-4zM559 100v5h3v-5zM559 110v2h3v-2zM562 100v5h2v-5zM562 112v2h2v-2zM564 103v2h2v-2zM564 107v3h2v-3zM564 112v2h2v-2zM566 112v2h3v-2zM569 112v2h2v-2zM571 103v2h3v-2zM574 105v5h2v-5zM576 105v2h2v-2zM576 110v2h2v-2zM578 98v2h3v-2zM578 110v2h3v-2zM581 105v2h2v-2zM583 100v7h2v-7zM588 96v4h2v-4zM588 103v2h2v-2zM588 110v2h2v-2zM590 100v3h2v-3zM590 110v2h2v-2zM592 105v5h3v-5zM595 105v2h2v-2zM600 110v4h2v-4zM611 100v3h3v-3zM616 98v2h3v-2zM621 103v2h2v-2zM621 107v5h2v-5zM626 105v2h2v-2zM628 107v3h2v-3zM687 112v2h3v-2z"/>
<path fill="#ff0000" d="M144 176v3h3v-3zM161 167v3h2v-3zM187 80v18h2v-18zM187 151v2h2v-2zM187 158v2h2v-2zM189 78v2h3v-2zM189 82v5h3v-5zM189 89v11h3v-11zM192 75v5h2v-5zM192 82v14h2v-14zM192 100v3h2v-3zM194 87v7h2v-7zM194 96v2h2v-2zM196 82v2h3v-2zM196 89v2h3v-2zM196 94v4h3v-4zM199 80v2h2v-2zM199 87v7h2v-7zM199 153v3h2v-3zM199 158v2h2v-2zM201 87v2h2v-2zM201 91v3h2v-3zM201 153v3h2v-3zM203 89v2h3v-2zM203 94v2h3v-2zM206 82v2h2v-2zM206 87v2h2v-2zM208 84v12h3v-12zM208 98v2h3v-2zM208 126v2h3v-2zM208 151v9h3v-9zM208 170v2h3v-2zM211 82v2h2v-2zM211 89v9h2v-9zM211 158v5h2v-5zM213 87v2h2v-2zM215 87v4h3v-4zM215 94v2h3v-2zM218 87v4h2v-4zM218 163v2h2v-2zM220 80v2h2v-2zM220 89v9h2v-9zM222 84v12h3v-12zM222 98v2h3v-2zM225 89v7h2v-7zM227 89v7h3v-7zM230 84v12h2v-12zM230 103v2h2v-2zM230 156v2h2v-2zM232 84v3h2v-3zM232 89v7h2v-7zM232 100v3h2v-3zM234 84v3h3v-3zM234 89v2h3v-2zM234 94v2h3v-2zM234 103v2h3v-2zM237 87v4h2v-4zM237 94v4h2v-4zM237 100v3h2v-3zM239 89v5h2v-5zM239 96v2h2v-2zM241 84v3h3v-3zM241 89v9h3v-9zM241 100v3h3v-3zM244 89v14h2v-14zM246 87v11h3v-11zM246 105v2h3v-2zM249 91v5h2v-5zM249 98v5h2v-5zM251 89v14h2v-14zM253 89v7h3v-7zM256 91v5h2v-5zM260 87v2h3v-2zM260 91v12h3v-12zM263 87v2h2v-2zM263 91v12h2v-12zM263 179v1h2v-1zM270 91v7h2v-7zM272 91v3h3v-3zM272 96v4h3v-4zM275 91v9h2v-9zM277 87v2h2v-2zM277 91v5h2v-5zM277 98v2h2v-2zM279 89v9h3v-9zM282 87v18h2v-18zM282 172v2h2v-2zM282 176v3h2v-3zM284 96v2h2v-2zM286 89v2h3v-2zM286 94v6h3v-6zM289 91v3h2v-3zM289 96v2h2v-2zM291 87v16h3v-16zM294 87v2h2v-2zM294 91v7h2v-7zM296 96v2h2v-2zM298 87v2h3v-2zM298 91v9h3v-9zM301 91v9h2v-9zM303 91v3h2v-3zM303 96v4h2v-4zM303 103v2h2v-2zM305 89v11h3v-11zM305 158v2h3v-2zM308 89v2h2v-2zM308 94v4h2v-4zM308 103v2h2v-2zM308 163v2h2v-2zM310 94v4h3v-4zM310 167v3h3v-3zM313 91v3h2v-3zM313 96v4h2v-4zM315 89v11h2v-11zM315 158v2h2v-2zM315 170v2h2v-2zM315 174v2h2v-2zM317 87v16h3v-16zM317 158v21h3v-21zM320 91v14h2v-14zM320 156v2h2v-2zM320 160v3h2v-3zM320 165v9h2v-9zM322 89v18h2v-18zM322 156v20h2v-20zM324 91v9h3v-9zM324 160v5h3v-5zM327 91v12h2v-12zM327 158v14h2v-14zM329 89v2h3v-2zM329 96v2h3v-2zM329 100v3h3v-3zM329 105v2h3v-2zM329 156v9h3v-9zM329 167v9h3v-9zM332 89v11h2v-11zM332 103v2h2v-2zM332 156v20h2v-20zM334 89v11h2v-11zM334 156v7h2v-7zM334 167v7h2v-7zM336 89v14h3v-14zM336 105v2h3v-2zM336 153v21h3v-21zM339 96v4h2v-4zM339 153v19h2v-19zM341 91v12h2v-12zM341 153v3h2v-3zM341 165v2h2v-2zM341 170v2h2v-2zM343 91v3h3v-3zM343 100v3h3v-3zM343 153v3h3v-3zM343 158v5h3v-5zM343 170v2h3v-2zM346 94v9h2v-9zM346 156v2h2v-2zM346 160v3h2v-3zM346 165v2h2v-2zM346 170v4h2v-4zM348 94v2h3v-2zM348 98v5h3v-5zM348 153v3h3v-3zM348 158v5h3v-5zM348 167v3h3v-3zM351 94v6h2v-6zM351 151v2h2v-2zM351 156v7h2v-7zM351 167v3h2v-3zM353 91v5h2v-5zM353 98v5h2v-5zM353 151v2h2v-2zM353 158v2h2v-2zM353 163v9h2v-9zM355 89v2h3v-2zM355 94v6h3v-6zM355 103v4h3v-4zM355 151v19h3v-19zM358 89v2h2v-2zM358 94v9h2v-9zM358 151v2h2v-2zM358 156v4h2v-4zM358 163v7h2v-7zM360 94v2h2v-2zM360 98v2h2v-2zM360 151v21h2v-21zM362 91v3h3v-3zM362 96v11h3v-11zM362 156v2h3v-2zM362 167v3h3v-3zM365 94v9h2v-9zM365 153v5h2v-5zM365 160v5h2v-5zM367 105v2h3v-2zM367 158v2h3v-2zM367 165v2h3v-2zM370 91v5h2v-5zM370 98v7h2v-7zM370 107v3h2v-3zM370 149v4h2v-4zM370 158v12h2v-12zM372 91v16h2v-16zM372 149v4h2v-4zM372 156v4h2v-4zM372 163v4h2v-4zM374 96v4h3v-4zM374 103v2h3v-2zM374 149v2h3v-2zM374 153v3h3v-3zM374 160v3h3v-3zM377 94v2h2v-2zM377 100v3h2v-3zM377 151v5h2v-5zM377 158v7h2v-7zM377 167v3h2v-3zM379 91v19h2v-19zM379 149v21h2v-21zM381 91v3h3v-3zM381 96v7h3v-7zM381 105v2h3v-2zM381 149v4h3v-4zM381 156v4h3v-4zM381 165v5h3v-5zM384 96v11h2v-11zM384 149v7h2v-7zM384 160v3h2v-3zM384 167v3h2v-3zM386 91v16h2v-16zM386 149v11h2v-11zM386 163v7h2v-7zM388 91v3h3v-3zM388 98v2h3v-2zM388 103v2h3v-2zM388 149v9h3v-9zM388 167v3h3v-3zM391 91v14h2v-14zM391 149v21h2v-21zM393 91v5h3v-5zM393 98v9h3v-9zM393 146v10h3v-10zM393 158v2h3v-2zM393 163v7h3v-7zM398 96v2h2v-2zM398 100v5h2v-5zM398 146v5h2v-5zM398 153v3h2v-3zM398 158v2h2v-2zM398 167v3h2v-3zM400 94v2h3v-2zM400 98v5h3v-5zM400 105v2h3v-2zM400 149v7h3v-7zM400 160v7h3v-7zM403 96v9h2v-9zM403 146v24h2v-24zM405 96v9h2v-9zM405 149v18h2v-18zM407 91v3h3v-3zM407 98v5h3v-5zM407 105v2h3v-2zM407 160v7h3v-7zM410 91v16h2v-16zM410 146v19h2v-19zM410 167v3h2v-3zM412 91v5h3v-5zM412 98v2h3v-2zM412 149v9h3v-9zM412 160v3h3v-3zM412 165v2h3v-2zM415 98v7h2v-7zM415 146v3h2v-3zM415 151v12h2v-12zM415 165v5h2v-5zM417 91v14h2v-14zM417 146v17h2v-17zM417 165v2h2v-2zM417 170v2h2v-2zM419 94v11h3v-11zM419 146v7h3v-7zM419 156v7h3v-7zM422 94v11h2v-11zM422 144v26h2v-26zM424 94v11h2v-11zM424 146v7h2v-7zM424 158v5h2v-5zM424 165v5h2v-5zM426 91v14h3v-14zM426 107v3h3v-3zM426 144v26h3v-26zM429 91v3h2v-3zM429 96v9h2v-9zM429 144v5h2v-5zM429 151v14h2v-14zM431 91v14h3v-14zM431 107v3h3v-3zM431 142v25h3v-25zM434 96v9h2v-9zM434 142v9h2v-9zM434 160v5h2v-5zM436 96v2h2v-2zM436 103v2h2v-2zM436 142v2h2v-2zM436 149v4h2v-4zM436 158v2h2v-2zM438 96v11h3v-11zM438 140v27h3v-27zM441 94v11h2v-11zM441 140v2h2v-2zM441 144v19h2v-19zM443 94v11h2v-11zM443 140v18h2v-18zM443 160v3h2v-3zM445 96v2h3v-2zM445 103v2h3v-2zM445 137v7h3v-7zM445 146v7h3v-7zM445 156v4h3v-4zM448 94v13h2v-13zM448 137v23h2v-23zM450 89v2h3v-2zM450 96v11h3v-11zM450 137v21h3v-21zM453 100v3h2v-3zM453 105v2h2v-2zM453 135v2h2v-2zM453 142v2h2v-2zM455 91v14h2v-14zM455 107v3h2v-3zM455 135v18h2v-18zM455 156v2h2v-2zM457 98v7h3v-7zM457 133v9h3v-9zM457 146v3h3v-3zM460 96v4h2v-4zM460 103v2h2v-2zM460 133v4h2v-4zM460 140v6h2v-6zM462 91v14h2v-14zM462 107v3h2v-3zM462 130v12h2v-12zM462 144v2h2v-2zM464 91v3h3v-3zM464 96v7h3v-7zM464 105v5h3v-5zM464 130v7h3v-7zM467 100v3h2v-3zM469 98v7h3v-7zM469 107v3h3v-3zM469 130v3h3v-3zM472 100v3h2v-3zM474 98v2h2v-2zM474 105v2h2v-2zM474 130v3h2v-3zM476 100v3h3v-3zM476 107v3h3v-3zM476 128v5h3v-5zM479 94v16h2v-16zM479 126v7h2v-7zM481 98v5h2v-5zM481 128v5h2v-5zM483 94v16h3v-16zM483 128v5h3v-5zM483 140v2h3v-2zM486 103v4h2v-4zM488 96v11h2v-11zM488 128v2h2v-2zM490 103v2h3v-2zM490 126v7h3v-7zM493 103v4h2v-4zM493 128v5h2v-5zM495 103v4h3v-4zM498 100v3h2v-3zM500 100v3h2v-3zM500 105v2h2v-2zM500 110v2h2v-2zM505 128v2h2v-2zM507 100v3h2v-3zM507 105v2h2v-2zM507 110v2h2v-2zM507 133v2h2v-2zM509 100v7h3v-7zM512 96v4h2v-4zM512 103v9h2v-9zM514 105v2h3v-2zM517 98v2h2v-2zM517 103v4h2v-4zM517 110v2h2v-2zM517 128v2h2v-2zM519 98v2h2v-2zM519 107v3h2v-3zM521 105v5h3v-5zM524 100v5h2v-5zM524 112v2h2v-2zM526 103v7h2v-7zM528 100v7h3v-7zM528 110v2h3v-2zM531 100v3h2v-3zM531 105v5h2v-5zM531 112v2h2v-2zM533 105v5h3v-5zM536 103v4h2v-4zM536 110v2h2v-2zM538 100v5h2v-5zM538 107v7h2v-7zM540 98v12h3v-12zM543 98v2h2v-2zM543 103v7h2v-7zM545 103v2h2v-2zM545 107v3h2v-3zM550 98v2h2v-2zM550 105v5h2v-5zM550 112v2h2v-2zM552 103v7h3v-7zM552 112v2h3v-2zM555 98v2h2v-2zM555 105v5h2v-5zM555 112v2h2v-2zM557 98v2h2v-2zM559 105v5h3v-5zM562 105v5h2v-5zM564 105v2h2v-2zM566 98v2h3v-2zM566 103v7h3v-7zM569 98v2h2v-2zM569 105v7h2v-7zM571 98v2h3v-2zM571 105v5h3v-5zM574 103v2h2v-2zM578 105v5h3v-5zM578 112v2h3v-2zM581 103v2h2v-2zM588 100v3h2v-3zM588 105v5h2v-5zM588 112v2h2v-2zM590 107v3h2v-3zM600 105v2h2v-2zM611 103v4h3v-4zM611 112v2h3v-2zM616 105v2h3v-2zM621 105v2h2v-2z"/>
<path fill="#000" d="M158 43h2v137h-2zM177 43h2v137h-2zM196 43h2v137h-2zM215 43h2v137h-2zM234 43h2v137h-2zM253 43h2v137h-2zM273 43h1v137h-1zM292 43h1v137h-1zM311 43h1v137h-1zM330 43h1v137h-1zM349 43h1v137h-1zM368 43h1v137h-1zM387 43h1v137h-1zM406 43h1v137h-1zM425 43h1v137h-1zM444 43h1v137h-1zM463 43h1v137h-1zM481 43h2v137h-2zM500 43h2v137h-2zM519 43h2v137h-2zM538 43h2v137h-2zM557 43h2v137h-2zM576 43h2v137h-2zM595 43h2v137h-2zM614 43h2v137h-2zM633 43h2v137h-2zM652 43h2v137h-2zM671 43h2v137h-2zM690 43h2v137h-2z"/>
<path fill="#6400ff" d="M161 364h2v3h-2zM161 412h2v2h-2z"/>
<path fill="#4e00ff" d="M168 388h2v3h-2z"/>
<path fill="#0b00ff" d="M232 453h7v3h-7zM239 406h7v3h-7zM267 459h7v3h-7zM317 453h7v3h-7zM374 401h7v3h-7zM495 398h7v3h-7zM687 484h7v2h-7zM694 470h7v3h-7z"/>
<path fill="#0016ff" d="M232 445h7v3h-7zM253 404h7v2h-7zM274 456h7v3h-7zM317 387h7v3h-7zM324 456h7v3h-7zM360 456h7v3h-7zM367 401h7v3h-7zM374 398h7v3h-7zM395 451h7v2h-7zM395 453h7v3h-7zM438 387h7v3h-7zM473 404h7v2h-7zM480 401h8v3h-8zM523 459h7v3h-7zM544 387h7v3h-7zM601 401h7v3h-7zM608 448h7v3h-7zM637 390h7v3h-7zM644 453h7v3h-7zM701 470h6v3h-6z"/>
<path fill="#0044ff" d="M239 451h7v2h-7zM246 409h7v3h-7zM246 459h7v3h-7zM253 451h7v2h-7zM253 456h7v3h-7zM260 453h7v3h-7zM260 456h7v3h-7zM281 451h8v2h-8zM281 464h8v3h-8zM289 398h7v3h-7zM310 464h7v3h-7zM317 456h7v3h-7zM324 453h7v3h-7zM345 462h8v2h-8zM345 464h8v3h-8zM353 459h7v3h-7zM353 462h7v2h-7zM353 464h7v3h-7zM367 453h7v3h-7zM388 453h7v3h-7zM388 456h7v3h-7zM402 453h7v3h-7zM402 462h7v2h-7zM409 464h7v3h-7zM459 467h7v3h-7zM459 478h7v3h-7zM495 462h7v2h-7zM509 445h7v3h-7zM551 456h8v3h-8zM580 464h7v3h-7zM587 404h7v2h-7zM594 401h7v3h-7zM594 453h7v3h-7zM594 459h7v3h-7zM601 462h7v2h-7zM601 467h7v3h-7zM615 459h8v3h-8zM623 445h7v3h-7zM637 459h7v3h-7zM644 387h7v3h-7zM658 459h7v3h-7zM665 459h7v3h-7zM687 467h7v3h-7zM687 470h7v3h-7zM694 467h7v3h-7zM694 475h7v3h-7zM154 364h7v3h-7zM154 390h7v2h-7zM160 388h8v3h-8zM154 412h7v2h-7zM182 468h8v3h-8zM193 408h7v4h-7zM366 375h9v2h-9zM458 375h9v2h-9zM398 364h7v2h-7zM217 402h8v4h-8zM231 405h7v3h-7z"/>
<path fill="#0072ff" d="M232 415h7v2h-7zM232 464h7v3h-7zM239 453h7v3h-7zM239 456h7v3h-7zM246 453h7v3h-7zM246 456h7v3h-7zM260 412h7v3h-7zM267 401h7v3h-7zM267 445h7v3h-7zM267 453h7v3h-7zM296 395h7v3h-7zM310 456h7v3h-7zM331 390h7v3h-7zM338 453h7v3h-7zM345 470h8v3h-8zM353 415h7v2h-7zM367 464h7v3h-7zM381 451h7v2h-7zM388 395h7v3h-7zM388 448h7v3h-7zM395 395h7v3h-7zM395 456h7v3h-7zM402 459h7v3h-7zM409 387h7v3h-7zM438 456h7v3h-7zM452 448h7v3h-7zM466 404h7v2h-7zM473 453h7v3h-7zM480 456h8v3h-8zM488 401h7v3h-7zM488 404h7v2h-7zM488 451h7v2h-7zM495 456h7v3h-7zM502 448h7v3h-7zM509 395h7v3h-7zM516 387h7v3h-7zM516 453h7v3h-7zM516 456h7v3h-7zM544 467h7v3h-7zM566 417h7v3h-7zM573 459h7v3h-7zM580 459h7v3h-7zM587 459h7v3h-7zM608 453h7v3h-7zM623 451h7v2h-7zM679 451h8v2h-8zM687 464h7v3h-7zM694 464h7v3h-7zM694 478h7v3h-7zM701 415h6v2h-6zM210 383h7v2h-7zM211 421h6v2h-6zM211 426h6v2h-6z"/>
<path fill="#009fff" d="M203 409h7v3h-7zM203 434h7v3h-7zM232 442h7v3h-7zM239 417h7v3h-7zM239 437h7v3h-7zM246 448h7v3h-7zM253 406h7v3h-7zM253 409h7v3h-7zM253 412h7v3h-7zM260 404h7v2h-7zM267 448h7v3h-7zM281 398h8v3h-8zM281 445h8v3h-8zM281 448h8v3h-8zM303 456h7v3h-7zM310 459h7v3h-7zM324 459h7v3h-7zM338 415h7v2h-7zM338 445h7v3h-7zM345 409h8v3h-8zM345 456h8v3h-8zM345 467h8v3h-8zM353 451h7v2h-7zM360 404h7v2h-7zM360 445h7v3h-7zM388 401h7v3h-7zM388 442h7v3h-7zM402 387h7v3h-7zM438 462h7v2h-7zM452 412h7v3h-7zM452 451h7v2h-7zM452 453h7v3h-7zM459 462h7v2h-7zM480 406h8v3h-8zM516 390h7v3h-7zM530 459h7v3h-7zM544 453h7v3h-7zM573 409h7v3h-7zM580 453h7v3h-7zM587 406h7v3h-7zM601 453h7v3h-7zM630 445h7v3h-7zM637 448h7v3h-7zM679 409h8v3h-8zM694 417h7v3h-7zM694 484h7v2h-7zM701 417h6v3h-6zM701 467h6v3h-6z"/>
<path fill="#00cdff" d="M196 409h7v3h-7zM232 429h7v2h-7zM239 429h7v2h-7zM239 440h7v2h-7zM246 406h7v3h-7zM246 412h7v3h-7zM260 445h7v3h-7zM267 404h7v2h-7zM274 398h7v3h-7zM274 412h7v3h-7zM274 453h7v3h-7zM281 431h8v3h-8zM324 390h7v3h-7zM338 417h7v3h-7zM338 420h7v3h-7zM338 451h7v2h-7zM345 412h8v3h-8zM381 448h7v3h-7zM388 398h7v3h-7zM395 398h7v3h-7zM409 453h7v3h-7zM445 387h7v3h-7zM452 409h7v3h-7zM459 412h7v3h-7zM466 473h7v2h-7zM480 448h8v3h-8zM495 448h7v3h-7zM566 420h7v3h-7zM573 415h7v2h-7zM573 451h7v2h-7zM573 467h7v3h-7zM587 448h7v3h-7zM587 451h7v2h-7zM594 445h7v3h-7zM608 445h7v3h-7zM615 398h8v3h-8zM615 401h8v3h-8zM623 404h7v2h-7zM630 395h7v3h-7zM630 442h7v3h-7zM637 393h7v2h-7zM637 445h7v3h-7zM651 390h7v3h-7zM665 453h7v3h-7zM672 390h7v3h-7zM679 420h8v3h-8zM687 456h7v3h-7zM687 462h7v2h-7zM182 433h7v4h-7z"/>
<path fill="#00fbff" d="M203 412h7v3h-7zM232 412h7v3h-7zM232 423h7v3h-7zM239 409h7v3h-7zM246 415h7v2h-7zM253 445h7v3h-7zM260 406h7v3h-7zM260 409h7v3h-7zM260 423h7v3h-7zM260 429h7v2h-7zM260 431h7v3h-7zM260 442h7v3h-7zM267 406h7v3h-7zM267 429h7v2h-7zM267 434h7v3h-7zM274 406h7v3h-7zM274 409h7v3h-7zM274 442h7v3h-7zM274 448h7v3h-7zM281 412h8v3h-8zM317 390h7v3h-7zM331 393h7v2h-7zM331 453h7v3h-7zM353 406h7v3h-7zM353 412h7v3h-7zM367 448h7v3h-7zM381 409h7v3h-7zM402 451h7v2h-7zM409 390h7v3h-7zM409 451h7v2h-7zM416 453h8v3h-8zM452 423h7v3h-7zM459 456h7v3h-7zM466 406h7v3h-7zM473 406h7v3h-7zM495 401h7v3h-7zM502 398h7v3h-7zM502 459h7v3h-7zM516 445h7v3h-7zM516 451h7v2h-7zM523 453h7v3h-7zM551 453h8v3h-8zM566 409h7v3h-7zM566 423h7v3h-7zM566 426h7v3h-7zM566 448h7v3h-7zM566 453h7v3h-7zM573 448h7v3h-7zM580 406h7v3h-7zM580 409h7v3h-7zM580 423h7v3h-7zM580 448h7v3h-7zM580 451h7v2h-7zM587 409h7v3h-7zM594 415h7v2h-7zM601 406h7v3h-7zM608 401h7v3h-7zM623 398h7v3h-7zM630 440h7v2h-7zM630 448h7v3h-7zM651 448h7v3h-7zM665 445h7v3h-7zM672 387h7v3h-7zM672 445h7v3h-7zM679 426h8v3h-8zM679 429h8v2h-8zM679 431h8v3h-8zM679 437h8v3h-8zM679 448h8v3h-8zM679 453h8v3h-8zM687 420h7v3h-7zM687 431h7v3h-7zM701 459h6v3h-6z"/>
<path fill="#00ffdb" d="M203 415h7v2h-7zM232 420h7v3h-7zM239 434h7v3h-7zM246 442h7v3h-7zM246 445h7v3h-7zM253 415h7v2h-7zM253 437h7v3h-7zM253 442h7v3h-7zM260 415h7v2h-7zM260 420h7v3h-7zM267 409h7v3h-7zM267 412h7v3h-7zM267 442h7v3h-7zM274 404h7v2h-7zM274 429h7v2h-7zM274 445h7v3h-7zM281 401h8v3h-8zM281 442h8v3h-8zM310 393h7v2h-7zM338 423h7v3h-7zM338 437h7v3h-7zM345 448h8v3h-8zM353 423h7v3h-7zM360 412h7v3h-7zM367 451h7v2h-7zM374 406h7v3h-7zM388 409h7v3h-7zM402 448h7v3h-7zM431 390h7v3h-7zM431 453h7v3h-7zM438 451h7v2h-7zM438 453h7v3h-7zM445 390h7v3h-7zM445 451h7v2h-7zM452 431h7v3h-7zM459 409h7v3h-7zM473 409h7v3h-7zM488 442h7v3h-7zM509 442h7v3h-7zM516 448h7v3h-7zM530 451h7v2h-7zM537 453h7v3h-7zM544 390h7v3h-7zM544 451h7v2h-7zM551 451h8v2h-8zM559 387h7v3h-7zM559 390h7v3h-7zM566 437h7v3h-7zM573 412h7v3h-7zM573 445h7v3h-7zM573 456h7v3h-7zM580 412h7v3h-7zM594 412h7v3h-7zM601 404h7v2h-7zM615 445h8v3h-8zM630 437h7v3h-7zM644 393h7v2h-7zM644 442h7v3h-7zM644 448h7v3h-7zM644 451h7v2h-7zM651 451h7v2h-7zM658 445h7v3h-7zM658 448h7v3h-7zM665 390h7v3h-7zM665 393h7v2h-7zM672 442h7v3h-7zM679 440h8v2h-8zM694 429h7v2h-7zM694 462h7v2h-7z"/>
<path fill="#00ffb4" d="M189 409h7v3h-7zM196 434h7v3h-7zM203 431h7v3h-7zM232 431h7v3h-7zM232 434h7v3h-7zM239 412h7v3h-7zM239 442h7v3h-7zM246 429h7v2h-7zM246 437h7v3h-7zM253 420h7v3h-7zM253 426h7v3h-7zM253 440h7v2h-7zM274 420h7v3h-7zM274 431h7v3h-7zM274 434h7v3h-7zM274 437h7v3h-7zM281 406h8v3h-8zM281 415h8v2h-8zM281 420h8v3h-8zM281 440h8v2h-8zM289 451h7v2h-7zM296 451h7v2h-7zM324 393h7v2h-7zM338 431h7v3h-7zM345 420h8v3h-8zM345 451h8v2h-8zM353 442h7v3h-7zM353 445h7v3h-7zM353 448h7v3h-7zM353 453h7v3h-7zM360 406h7v3h-7zM360 451h7v2h-7zM367 404h7v2h-7zM374 448h7v3h-7zM395 401h7v3h-7zM402 390h7v3h-7zM424 390h7v3h-7zM424 453h7v3h-7zM438 390h7v3h-7zM452 417h7v3h-7zM452 429h7v2h-7zM452 437h7v3h-7zM459 417h7v3h-7zM466 409h7v3h-7zM473 431h7v3h-7zM473 445h7v3h-7zM480 404h8v2h-8zM480 409h8v3h-8zM480 431h8v3h-8zM488 406h7v3h-7zM495 406h7v3h-7zM502 442h7v3h-7zM516 393h7v2h-7zM523 451h7v2h-7zM530 453h7v3h-7zM559 451h7v2h-7zM580 442h7v3h-7zM587 420h7v3h-7zM594 448h7v3h-7zM594 451h7v2h-7zM601 409h7v3h-7zM601 445h7v3h-7zM601 448h7v3h-7zM608 406h7v3h-7zM608 409h7v3h-7zM608 417h7v3h-7zM630 404h7v2h-7zM637 398h7v3h-7zM637 451h7v2h-7zM658 393h7v2h-7zM658 451h7v2h-7zM665 448h7v3h-7zM672 395h7v3h-7zM672 448h7v3h-7zM679 423h8v3h-8zM687 423h7v3h-7zM687 429h7v2h-7zM687 453h7v3h-7zM687 459h7v3h-7zM694 420h7v3h-7zM694 451h7v2h-7zM701 437h6v3h-6zM701 462h6v2h-6z"/>
<path fill="#00ff8d" d="M196 412h7v3h-7zM196 431h7v3h-7zM232 417h7v3h-7zM232 426h7v3h-7zM239 415h7v2h-7zM239 420h7v3h-7zM239 423h7v3h-7zM246 420h7v3h-7zM246 423h7v3h-7zM253 423h7v3h-7zM253 434h7v3h-7zM260 417h7v3h-7zM267 415h7v2h-7zM267 417h7v3h-7zM267 420h7v3h-7zM267 431h7v3h-7zM267 440h7v2h-7zM274 415h7v2h-7zM274 440h7v2h-7zM281 409h8v3h-8zM281 434h8v3h-8zM281 437h8v3h-8zM289 448h7v3h-7zM303 395h7v3h-7zM303 451h7v2h-7zM310 395h7v3h-7zM317 393h7v2h-7zM331 398h7v3h-7zM331 448h7v3h-7zM331 451h7v2h-7zM345 415h8v2h-8zM345 437h8v3h-8zM345 453h8v3h-8zM353 409h7v3h-7zM353 420h7v3h-7zM360 417h7v3h-7zM367 409h7v3h-7zM367 442h7v3h-7zM367 445h7v3h-7zM374 426h7v3h-7zM374 445h7v3h-7zM381 401h7v3h-7zM381 404h7v2h-7zM381 412h7v3h-7zM381 440h7v2h-7zM388 404h7v2h-7zM388 431h7v3h-7zM388 440h7v2h-7zM395 437h7v3h-7zM402 395h7v3h-7zM416 390h8v3h-8zM424 451h7v2h-7zM445 448h7v3h-7zM452 426h7v3h-7zM459 442h7v3h-7zM459 448h7v3h-7zM459 453h7v3h-7zM466 412h7v3h-7zM466 415h7v2h-7zM466 451h7v2h-7zM480 415h8v2h-8zM480 426h8v3h-8zM480 440h8v2h-8zM480 451h8v2h-8zM488 448h7v3h-7zM495 404h7v2h-7zM495 412h7v3h-7zM502 401h7v3h-7zM502 440h7v2h-7zM509 401h7v3h-7zM509 404h7v2h-7zM509 406h7v3h-7zM509 440h7v2h-7zM523 390h7v3h-7zM530 390h7v3h-7zM530 393h7v2h-7zM537 390h7v3h-7zM544 395h7v3h-7zM559 393h7v2h-7zM580 417h7v3h-7zM587 412h7v3h-7zM587 417h7v3h-7zM587 437h7v3h-7zM594 409h7v3h-7zM594 440h7v2h-7zM615 431h8v3h-8zM615 440h8v2h-8zM623 406h7v3h-7zM623 417h7v3h-7zM623 440h7v2h-7zM630 398h7v3h-7zM630 401h7v3h-7zM630 434h7v3h-7zM637 395h7v3h-7zM637 434h7v3h-7zM637 437h7v3h-7zM644 440h7v2h-7zM644 445h7v3h-7zM658 390h7v3h-7zM665 451h7v2h-7zM672 393h7v2h-7zM672 398h7v3h-7zM687 426h7v3h-7zM687 442h7v3h-7zM694 431h7v3h-7zM694 440h7v2h-7zM694 456h7v3h-7zM701 420h6v3h-6zM701 423h6v3h-6z"/>
<path fill="#00ff66" d="M189 434h7v3h-7zM203 426h7v3h-7zM232 437h7v3h-7zM232 440h7v2h-7zM239 426h7v3h-7zM246 426h7v3h-7zM246 434h7v3h-7zM246 440h7v2h-7zM253 417h7v3h-7zM253 429h7v2h-7zM260 426h7v3h-7zM260 437h7v3h-7zM260 440h7v2h-7zM267 423h7v3h-7zM267 437h7v3h-7zM274 426h7v3h-7zM281 404h8v2h-8zM281 417h8v3h-8zM296 448h7v3h-7zM303 448h7v3h-7zM310 451h7v2h-7zM317 451h7v2h-7zM324 395h7v3h-7zM324 451h7v2h-7zM345 417h8v3h-8zM360 409h7v3h-7zM360 415h7v2h-7zM367 417h7v3h-7zM367 426h7v3h-7zM374 404h7v2h-7zM374 409h7v3h-7zM374 420h7v3h-7zM374 440h7v2h-7zM381 445h7v3h-7zM388 434h7v3h-7zM402 393h7v2h-7zM402 398h7v3h-7zM409 393h7v2h-7zM409 448h7v3h-7zM416 451h8v2h-8zM445 393h7v2h-7zM459 423h7v3h-7zM473 440h7v2h-7zM473 451h7v2h-7zM480 412h8v3h-8zM480 420h8v3h-8zM480 442h8v3h-8zM480 445h8v3h-8zM495 437h7v3h-7zM495 445h7v3h-7zM502 406h7v3h-7zM502 429h7v2h-7zM509 398h7v3h-7zM509 434h7v3h-7zM509 437h7v3h-7zM516 395h7v3h-7zM516 401h7v3h-7zM516 440h7v2h-7zM523 393h7v2h-7zM523 448h7v3h-7zM537 448h7v3h-7zM544 448h7v3h-7zM551 390h8v3h-8zM551 393h8v2h-8zM559 395h7v3h-7zM573 417h7v3h-7zM573 426h7v3h-7zM573 437h7v3h-7zM573 453h7v3h-7zM580 415h7v2h-7zM580 431h7v3h-7zM587 429h7v2h-7zM594 404h7v2h-7zM601 420h7v3h-7zM601 440h7v2h-7zM601 442h7v3h-7zM608 404h7v2h-7zM608 412h7v3h-7zM608 434h7v3h-7zM608 440h7v2h-7zM615 406h8v3h-8zM615 409h8v3h-8zM615 412h8v3h-8zM615 434h8v3h-8zM615 437h8v3h-8zM615 442h8v3h-8zM623 420h7v3h-7zM623 434h7v3h-7zM623 442h7v3h-7zM630 431h7v3h-7zM637 440h7v2h-7zM637 442h7v3h-7zM651 393h7v2h-7zM651 445h7v3h-7zM658 440h7v2h-7zM658 442h7v3h-7zM665 395h7v3h-7zM665 442h7v3h-7zM687 434h7v3h-7zM687 445h7v3h-7zM694 434h7v3h-7zM701 445h6v3h-6zM701 451h6v2h-6zM701 456h6v3h-6z"/>
<path fill="#00ff3f" d="M189 412h7v3h-7zM196 415h7v2h-7zM203 429h7v2h-7zM239 431h7v3h-7zM274 417h7v3h-7zM281 429h8v2h-8zM289 445h7v3h-7zM296 401h7v3h-7zM310 448h7v3h-7zM317 398h7v3h-7zM331 395h7v3h-7zM360 420h7v3h-7zM360 423h7v3h-7zM360 437h7v3h-7zM360 442h7v3h-7zM367 406h7v3h-7zM367 437h7v3h-7zM374 412h7v3h-7zM374 442h7v3h-7zM381 406h7v3h-7zM381 437h7v3h-7zM381 442h7v3h-7zM388 412h7v3h-7zM395 404h7v2h-7zM395 406h7v3h-7zM395 442h7v3h-7zM402 442h7v3h-7zM402 445h7v3h-7zM409 445h7v3h-7zM416 393h8v2h-8zM424 393h7v2h-7zM431 393h7v2h-7zM431 448h7v3h-7zM431 451h7v2h-7zM438 393h7v2h-7zM438 448h7v3h-7zM445 395h7v3h-7zM459 415h7v2h-7zM466 417h7v3h-7zM466 420h7v3h-7zM466 442h7v3h-7zM466 445h7v3h-7zM466 453h7v3h-7zM473 415h7v2h-7zM473 426h7v3h-7zM473 434h7v3h-7zM480 434h8v3h-8zM488 409h7v3h-7zM488 420h7v3h-7zM488 437h7v3h-7zM488 440h7v2h-7zM488 445h7v3h-7zM495 426h7v3h-7zM495 434h7v3h-7zM495 440h7v2h-7zM495 442h7v3h-7zM502 420h7v3h-7zM502 431h7v3h-7zM502 445h7v3h-7zM516 398h7v3h-7zM516 404h7v2h-7zM516 442h7v3h-7zM523 395h7v3h-7zM530 448h7v3h-7zM537 451h7v2h-7zM544 398h7v3h-7zM551 448h8v3h-8zM559 445h7v3h-7zM573 420h7v3h-7zM580 420h7v3h-7zM587 415h7v2h-7zM587 423h7v3h-7zM587 440h7v2h-7zM587 442h7v3h-7zM587 445h7v3h-7zM594 406h7v3h-7zM594 420h7v3h-7zM601 426h7v3h-7zM601 434h7v3h-7zM601 437h7v3h-7zM608 423h7v3h-7zM608 431h7v3h-7zM608 437h7v3h-7zM623 401h7v3h-7zM623 409h7v3h-7zM623 415h7v2h-7zM644 395h7v3h-7zM651 440h7v2h-7zM658 395h7v3h-7zM658 437h7v3h-7zM665 440h7v2h-7zM672 440h7v2h-7zM687 417h7v3h-7zM687 451h7v2h-7zM694 423h7v3h-7zM694 448h7v3h-7zM694 453h7v3h-7zM701 431h6v3h-6z"/>
<path fill="#00ff18" d="M189 431h7v3h-7zM196 417h7v3h-7zM246 431h7v3h-7zM281 423h8v3h-8zM281 426h8v3h-8zM289 401h7v3h-7zM296 398h7v3h-7zM296 445h7v3h-7zM303 398h7v3h-7zM303 445h7v3h-7zM310 398h7v3h-7zM317 395h7v3h-7zM317 448h7v3h-7zM345 426h8v3h-8zM345 442h8v3h-8zM360 429h7v2h-7zM360 440h7v2h-7zM367 412h7v3h-7zM367 423h7v3h-7zM374 417h7v3h-7zM374 434h7v3h-7zM381 434h7v3h-7zM388 406h7v3h-7zM388 417h7v3h-7zM388 426h7v3h-7zM395 412h7v3h-7zM395 420h7v3h-7zM395 426h7v3h-7zM395 431h7v3h-7zM409 395h7v3h-7zM416 448h8v3h-8zM424 448h7v3h-7zM438 395h7v3h-7zM445 398h7v3h-7zM445 445h7v3h-7zM459 429h7v2h-7zM466 434h7v3h-7zM466 437h7v3h-7zM466 440h7v2h-7zM466 448h7v3h-7zM473 423h7v3h-7zM473 429h7v2h-7zM473 437h7v3h-7zM473 442h7v3h-7zM480 429h8v2h-8zM488 412h7v3h-7zM488 417h7v3h-7zM488 426h7v3h-7zM495 415h7v2h-7zM502 409h7v3h-7zM502 423h7v3h-7zM502 434h7v3h-7zM509 417h7v3h-7zM509 429h7v2h-7zM523 445h7v3h-7zM530 445h7v3h-7zM544 445h7v3h-7zM551 395h8v3h-8zM551 445h8v3h-8zM559 448h7v3h-7zM573 440h7v2h-7zM580 429h7v2h-7zM580 445h7v3h-7zM594 417h7v3h-7zM594 442h7v3h-7zM601 412h7v3h-7zM601 417h7v3h-7zM601 423h7v3h-7zM601 431h7v3h-7zM608 415h7v2h-7zM608 426h7v3h-7zM608 429h7v2h-7zM615 415h8v2h-8zM615 417h8v3h-8zM615 420h8v3h-8zM615 423h8v3h-8zM623 412h7v3h-7zM623 426h7v3h-7zM651 398h7v3h-7zM658 398h7v3h-7zM665 398h7v3h-7zM687 448h7v3h-7zM694 426h7v3h-7zM694 445h7v3h-7zM701 426h6v3h-6zM701 440h6v2h-6z"/>
<path fill="#11ff00" d="M203 423h7v3h-7zM274 423h7v3h-7zM289 442h7v3h-7zM303 401h7v3h-7zM324 448h7v3h-7zM331 404h7v2h-7zM331 445h7v3h-7zM353 426h7v3h-7zM353 431h7v3h-7zM360 431h7v3h-7zM367 415h7v2h-7zM367 420h7v3h-7zM367 431h7v3h-7zM367 434h7v3h-7zM374 429h7v2h-7zM381 420h7v3h-7zM388 429h7v2h-7zM395 415h7v2h-7zM395 429h7v2h-7zM395 434h7v3h-7zM395 440h7v2h-7zM402 401h7v3h-7zM402 404h7v2h-7zM402 440h7v2h-7zM409 398h7v3h-7zM438 445h7v3h-7zM459 426h7v3h-7zM459 431h7v3h-7zM459 445h7v3h-7zM466 429h7v2h-7zM473 412h7v3h-7zM473 420h7v3h-7zM480 437h8v3h-8zM488 429h7v2h-7zM488 431h7v3h-7zM488 434h7v3h-7zM495 417h7v3h-7zM495 420h7v3h-7zM502 412h7v3h-7zM502 415h7v2h-7zM502 426h7v3h-7zM502 437h7v3h-7zM509 415h7v2h-7zM509 420h7v3h-7zM516 406h7v3h-7zM516 437h7v3h-7zM523 398h7v3h-7zM523 401h7v3h-7zM523 404h7v2h-7zM530 395h7v3h-7zM537 393h7v2h-7zM544 393h7v2h-7zM573 429h7v2h-7zM573 442h7v3h-7zM580 426h7v3h-7zM580 434h7v3h-7zM580 437h7v3h-7zM580 440h7v2h-7zM587 426h7v3h-7zM594 426h7v3h-7zM594 429h7v2h-7zM594 431h7v3h-7zM601 415h7v2h-7zM601 429h7v2h-7zM608 420h7v3h-7zM608 442h7v3h-7zM615 429h8v2h-8zM623 429h7v2h-7zM623 431h7v3h-7zM630 406h7v3h-7zM630 409h7v3h-7zM630 426h7v3h-7zM630 429h7v2h-7zM637 404h7v2h-7zM644 398h7v3h-7zM644 401h7v3h-7zM644 434h7v3h-7zM651 395h7v3h-7zM651 442h7v3h-7zM665 437h7v3h-7zM672 401h7v3h-7zM672 434h7v3h-7zM672 437h7v3h-7zM687 437h7v3h-7zM687 440h7v2h-7zM694 437h7v3h-7zM694 442h7v3h-7zM701 434h6v3h-6zM701 442h6v3h-6zM701 448h6v3h-6z"/>
<path fill="#3dff00" d="M203 417h7v3h-7zM203 420h7v3h-7zM217 415h8v2h-8zM217 434h8v3h-8zM260 434h7v3h-7zM289 406h7v3h-7zM289 440h7v2h-7zM296 404h7v2h-7zM296 442h7v3h-7zM310 401h7v3h-7zM310 442h7v3h-7zM310 445h7v3h-7zM317 445h7v3h-7zM324 398h7v3h-7zM324 401h7v3h-7zM345 434h8v3h-8zM345 445h8v3h-8zM353 437h7v3h-7zM353 440h7v2h-7zM360 434h7v3h-7zM367 440h7v2h-7zM374 423h7v3h-7zM374 437h7v3h-7zM381 415h7v2h-7zM381 431h7v3h-7zM388 415h7v2h-7zM388 423h7v3h-7zM395 409h7v3h-7zM395 417h7v3h-7zM402 409h7v3h-7zM416 395h8v3h-8zM424 398h7v3h-7zM438 398h7v3h-7zM466 423h7v3h-7zM466 431h7v3h-7zM473 448h7v3h-7zM488 415h7v2h-7zM495 423h7v3h-7zM502 417h7v3h-7zM509 409h7v3h-7zM509 426h7v3h-7zM516 409h7v3h-7zM516 434h7v3h-7zM523 440h7v2h-7zM523 442h7v3h-7zM537 395h7v3h-7zM537 445h7v3h-7zM551 440h8v2h-8zM551 442h8v3h-8zM594 423h7v3h-7zM637 401h7v3h-7zM637 431h7v3h-7zM644 437h7v3h-7zM651 404h7v2h-7zM651 434h7v3h-7zM651 437h7v3h-7zM658 401h7v3h-7zM658 404h7v2h-7zM658 434h7v3h-7zM665 401h7v3h-7zM665 404h7v2h-7zM665 431h7v3h-7zM701 453h6v3h-6z"/>
<path fill="#68ff00" d="M189 429h7v2h-7zM196 426h7v3h-7zM196 429h7v2h-7zM267 426h7v3h-7zM289 404h7v2h-7zM289 409h7v3h-7zM303 404h7v2h-7zM303 442h7v3h-7zM310 404h7v2h-7zM310 440h7v2h-7zM324 445h7v3h-7zM331 401h7v3h-7zM331 406h7v3h-7zM331 442h7v3h-7zM345 423h8v3h-8zM381 423h7v3h-7zM388 420h7v3h-7zM402 412h7v3h-7zM416 445h8v3h-8zM424 445h7v3h-7zM431 395h7v3h-7zM445 440h7v2h-7zM459 437h7v3h-7zM495 409h7v3h-7zM516 431h7v3h-7zM530 398h7v3h-7zM530 442h7v3h-7zM559 401h7v3h-7zM559 404h7v2h-7zM559 442h7v3h-7zM615 426h8v3h-8zM630 412h7v3h-7zM630 415h7v2h-7zM630 417h7v3h-7zM651 401h7v3h-7zM665 434h7v3h-7z"/>
<path fill="#93ff00" d="M189 415h7v2h-7zM196 420h7v3h-7zM303 406h7v3h-7zM303 409h7v3h-7zM310 406h7v3h-7zM317 401h7v3h-7zM324 434h7v3h-7zM331 409h7v3h-7zM331 440h7v2h-7zM345 431h8v3h-8zM353 429h7v2h-7zM367 429h7v2h-7zM374 431h7v3h-7zM381 417h7v3h-7zM402 434h7v3h-7zM409 406h7v3h-7zM409 437h7v3h-7zM409 440h7v2h-7zM409 442h7v3h-7zM416 398h8v3h-8zM424 395h7v3h-7zM431 398h7v3h-7zM431 401h7v3h-7zM431 445h7v3h-7zM438 401h7v3h-7zM495 431h7v3h-7zM509 412h7v3h-7zM509 431h7v3h-7zM516 415h7v2h-7zM516 417h7v3h-7zM516 426h7v3h-7zM530 401h7v3h-7zM537 398h7v3h-7zM544 401h7v3h-7zM544 404h7v2h-7zM544 442h7v3h-7zM551 398h8v3h-8zM551 401h8v3h-8zM551 404h8v2h-8zM559 398h7v3h-7zM559 437h7v3h-7zM559 440h7v2h-7zM630 420h7v3h-7zM637 409h7v3h-7zM644 404h7v2h-7zM672 404h7v2h-7zM672 429h7v2h-7z"/>
<path fill="#beff00" d="M189 417h7v3h-7zM217 431h8v3h-8zM289 412h7v3h-7zM289 431h7v3h-7zM296 406h7v3h-7zM296 409h7v3h-7zM296 437h7v3h-7zM296 440h7v2h-7zM303 437h7v3h-7zM303 440h7v2h-7zM317 440h7v2h-7zM324 440h7v2h-7zM324 442h7v3h-7zM345 429h8v2h-8zM345 440h8v2h-8zM374 415h7v2h-7zM402 406h7v3h-7zM402 429h7v2h-7zM409 404h7v2h-7zM416 442h8v3h-8zM431 442h7v3h-7zM438 404h7v2h-7zM438 442h7v3h-7zM445 401h7v3h-7zM445 442h7v3h-7zM509 423h7v3h-7zM516 412h7v3h-7zM516 423h7v3h-7zM516 429h7v2h-7zM523 406h7v3h-7zM523 409h7v3h-7zM537 440h7v2h-7zM537 442h7v3h-7zM544 440h7v2h-7zM551 434h8v3h-8zM559 409h7v3h-7zM630 423h7v3h-7zM637 426h7v3h-7zM637 429h7v2h-7zM658 406h7v3h-7zM665 406h7v3h-7z"/>
<path fill="#eaff00" d="M196 423h7v3h-7zM217 417h8v3h-8zM217 429h8v2h-8zM289 420h7v3h-7zM289 423h7v3h-7zM289 437h7v3h-7zM296 429h7v2h-7zM296 434h7v3h-7zM303 415h7v2h-7zM310 412h7v3h-7zM310 434h7v3h-7zM317 404h7v2h-7zM317 442h7v3h-7zM324 404h7v2h-7zM324 406h7v3h-7zM324 409h7v3h-7zM324 412h7v3h-7zM331 415h7v2h-7zM331 423h7v3h-7zM331 434h7v3h-7zM331 437h7v3h-7zM381 426h7v3h-7zM402 431h7v3h-7zM409 401h7v3h-7zM416 401h8v3h-8zM416 440h8v2h-8zM424 442h7v3h-7zM438 440h7v2h-7zM445 437h7v3h-7zM523 434h7v3h-7zM530 406h7v3h-7zM530 437h7v3h-7zM530 440h7v2h-7zM537 401h7v3h-7zM537 437h7v3h-7zM551 406h8v3h-8zM551 437h8v3h-8zM559 406h7v3h-7zM559 431h7v3h-7zM559 434h7v3h-7zM573 431h7v3h-7zM637 406h7v3h-7zM637 417h7v3h-7zM644 429h7v2h-7zM651 406h7v3h-7zM651 431h7v3h-7zM672 431h7v3h-7z"/>
<path fill="#ffeb00" d="M189 426h7v3h-7zM217 426h8v3h-8zM289 415h7v2h-7zM289 417h7v3h-7zM289 426h7v3h-7zM289 429h7v2h-7zM296 412h7v3h-7zM303 420h7v3h-7zM310 409h7v3h-7zM310 437h7v3h-7zM317 409h7v3h-7zM324 437h7v3h-7zM402 437h7v3h-7zM431 440h7v2h-7zM445 404h7v2h-7zM445 429h7v2h-7zM445 434h7v3h-7zM516 420h7v3h-7zM523 412h7v3h-7zM523 431h7v3h-7zM523 437h7v3h-7zM530 404h7v2h-7zM537 404h7v2h-7zM544 406h7v3h-7zM551 409h8v3h-8zM637 412h7v3h-7zM637 420h7v3h-7zM644 406h7v3h-7zM651 429h7v2h-7zM658 426h7v3h-7zM658 429h7v2h-7zM658 431h7v3h-7zM665 429h7v2h-7zM672 406h7v3h-7z"/>
<path fill="#ffc400" d="M189 420h7v3h-7zM217 423h8v3h-8zM289 434h7v3h-7zM296 415h7v2h-7zM296 423h7v3h-7zM296 426h7v3h-7zM296 431h7v3h-7zM303 412h7v3h-7zM303 426h7v3h-7zM303 429h7v2h-7zM303 434h7v3h-7zM310 429h7v2h-7zM310 431h7v3h-7zM324 423h7v3h-7zM324 426h7v3h-7zM331 412h7v3h-7zM331 417h7v3h-7zM331 426h7v3h-7zM331 431h7v3h-7zM402 415h7v2h-7zM402 420h7v3h-7zM402 423h7v3h-7zM402 426h7v3h-7zM409 409h7v3h-7zM409 423h7v3h-7zM409 426h7v3h-7zM409 434h7v3h-7zM424 401h7v3h-7zM424 440h7v2h-7zM438 406h7v3h-7zM438 431h7v3h-7zM438 434h7v3h-7zM438 437h7v3h-7zM445 406h7v3h-7zM445 409h7v3h-7zM445 431h7v3h-7zM523 415h7v2h-7zM530 434h7v3h-7zM544 409h7v3h-7zM544 412h7v3h-7zM544 434h7v3h-7zM544 437h7v3h-7zM551 431h8v3h-8zM637 415h7v2h-7zM644 409h7v3h-7zM644 412h7v3h-7zM644 423h7v3h-7zM644 426h7v3h-7zM651 409h7v3h-7zM658 409h7v3h-7zM665 426h7v3h-7zM672 412h7v3h-7z"/>
<path fill="#ff9d00" d="M217 420h8v3h-8zM296 417h7v3h-7zM296 420h7v3h-7zM303 417h7v3h-7zM303 423h7v3h-7zM303 431h7v3h-7zM310 420h7v3h-7zM317 406h7v3h-7zM317 434h7v3h-7zM317 437h7v3h-7zM324 429h7v2h-7zM324 431h7v3h-7zM331 420h7v3h-7zM402 417h7v3h-7zM409 415h7v2h-7zM416 404h8v2h-8zM416 406h8v3h-8zM416 437h8v3h-8zM424 404h7v2h-7zM424 406h7v3h-7zM431 406h7v3h-7zM445 412h7v3h-7zM445 415h7v2h-7zM523 417h7v3h-7zM523 420h7v3h-7zM523 426h7v3h-7zM537 406h7v3h-7zM537 409h7v3h-7zM537 434h7v3h-7zM544 415h7v2h-7zM551 426h8v3h-8zM551 429h8v2h-8zM559 412h7v3h-7zM559 417h7v3h-7zM559 426h7v3h-7zM559 429h7v2h-7zM637 423h7v3h-7zM644 431h7v3h-7zM658 423h7v3h-7zM665 409h7v3h-7zM665 412h7v3h-7zM665 423h7v3h-7zM672 409h7v3h-7zM672 417h7v3h-7zM672 426h7v3h-7z"/>
<path fill="#ff7600" d="M310 415h7v2h-7zM310 417h7v3h-7zM310 423h7v3h-7zM317 412h7v3h-7zM317 420h7v3h-7zM317 431h7v3h-7zM324 415h7v2h-7zM324 417h7v3h-7zM324 420h7v3h-7zM331 429h7v2h-7zM416 434h8v3h-8zM424 434h7v3h-7zM424 437h7v3h-7zM431 409h7v3h-7zM431 431h7v3h-7zM431 437h7v3h-7zM438 409h7v3h-7zM445 417h7v3h-7zM445 426h7v3h-7zM523 429h7v2h-7zM530 409h7v3h-7zM530 412h7v3h-7zM544 429h7v2h-7zM544 431h7v3h-7zM551 412h8v3h-8zM551 417h8v3h-8zM644 415h7v2h-7zM651 415h7v2h-7zM651 423h7v3h-7zM658 412h7v3h-7zM665 417h7v3h-7zM665 420h7v3h-7zM672 415h7v2h-7zM672 420h7v3h-7zM672 423h7v3h-7z"/>
<path fill="#ff4e00" d="M189 423h7v3h-7zM310 426h7v3h-7zM317 415h7v2h-7zM317 417h7v3h-7zM409 412h7v3h-7zM409 417h7v3h-7zM416 415h8v2h-8zM431 404h7v2h-7zM431 434h7v3h-7zM438 415h7v2h-7zM438 429h7v2h-7zM445 423h7v3h-7zM523 423h7v3h-7zM530 415h7v2h-7zM530 429h7v2h-7zM537 431h7v3h-7zM544 423h7v3h-7zM544 426h7v3h-7zM551 415h8v2h-8zM551 423h8v3h-8zM559 420h7v3h-7zM651 417h7v3h-7zM651 420h7v3h-7zM651 426h7v3h-7zM658 415h7v2h-7zM658 417h7v3h-7zM665 415h7v2h-7z"/>
<path fill="#ff2700" d="M317 426h7v3h-7zM317 429h7v2h-7zM409 420h7v3h-7zM409 429h7v2h-7zM416 409h8v3h-8zM424 409h7v3h-7zM424 431h7v3h-7zM431 412h7v3h-7zM438 412h7v3h-7zM438 426h7v3h-7zM445 420h7v3h-7zM530 426h7v3h-7zM530 431h7v3h-7zM537 420h7v3h-7zM544 417h7v3h-7zM551 420h8v3h-8zM559 415h7v2h-7zM559 423h7v3h-7zM644 417h7v3h-7zM644 420h7v3h-7zM658 420h7v3h-7z"/>
<path fill="#ff0000" d="M317 423h7v3h-7zM409 431h7v3h-7zM416 412h8v3h-8zM416 417h8v3h-8zM416 420h8v3h-8zM416 423h8v3h-8zM416 426h8v3h-8zM416 429h8v2h-8zM416 431h8v3h-8zM424 412h7v3h-7zM424 415h7v2h-7zM424 417h7v3h-7zM424 420h7v3h-7zM424 423h7v3h-7zM424 426h7v3h-7zM424 429h7v2h-7zM431 415h7v2h-7zM431 417h7v3h-7zM431 420h7v3h-7zM431 423h7v3h-7zM431 426h7v3h-7zM431 429h7v2h-7zM438 417h7v3h-7zM438 420h7v3h-7zM438 423h7v3h-7zM530 417h7v3h-7zM530 420h7v3h-7zM530 423h7v3h-7zM537 412h7v3h-7zM537 415h7v2h-7zM537 417h7v3h-7zM537 423h7v3h-7zM537 426h7v3h-7zM537 429h7v2h-7zM544 420h7v3h-7zM651 412h7v3h-7z"/>
 <rect x="876" y="49" width="22" height="122" fill="url(#rb)"/><path d="M876 49h22v1h-22zM876 170h22v1h-22zM876 49h1v122h-1zM897 49h1v122h-1z" fill="#fff"/><rect x="863" y="360" width="22" height="122" fill="url(#rb)"/><path d="M863 360h22v1h-22zM863 481h22v1h-22zM863 360h1v122h-1zM884 360h1v122h-1z" fill="#fff"/>
</g>
<g shape-rendering="crispEdges"><path fill="#fff" d="M132 42h586v1h-586zM132 180h586v1h-586zM141 42h1v139h-1zM707 42h1v139h-1zM178 42h1v6h-1zM178 175h1v6h-1zM214 42h1v10h-1zM214 171h1v10h-1zM249 42h1v6h-1zM249 175h1v6h-1zM284 42h1v10h-1zM284 171h1v10h-1zM320 42h1v6h-1zM320 175h1v6h-1zM355 42h1v10h-1zM355 171h1v10h-1zM390 42h1v6h-1zM390 175h1v6h-1zM426 42h1v10h-1zM426 171h1v10h-1zM461 42h1v6h-1zM461 175h1v6h-1zM497 42h1v10h-1zM497 171h1v10h-1zM532 42h1v6h-1zM532 175h1v6h-1zM567 42h1v10h-1zM567 171h1v10h-1zM603 42h1v6h-1zM603 175h1v6h-1zM638 42h1v10h-1zM638 171h1v10h-1zM673 42h1v6h-1zM673 175h1v6h-1zM133 191h586v1h-586zM133 329h586v1h-586zM142 191h1v139h-1zM708 191h1v139h-1zM178 191h1v6h-1zM178 324h1v6h-1zM214 191h1v10h-1zM214 320h1v10h-1zM249 191h1v6h-1zM249 324h1v6h-1zM284 191h1v10h-1zM284 320h1v10h-1zM320 191h1v6h-1zM320 324h1v6h-1zM355 191h1v10h-1zM355 320h1v10h-1zM390 191h1v6h-1zM390 324h1v6h-1zM426 191h1v10h-1zM426 320h1v10h-1zM461 191h1v6h-1zM461 324h1v6h-1zM497 191h1v10h-1zM497 320h1v10h-1zM532 191h1v6h-1zM532 324h1v6h-1zM567 191h1v10h-1zM567 320h1v10h-1zM603 191h1v6h-1zM603 324h1v6h-1zM638 191h1v10h-1zM638 320h1v10h-1zM673 191h1v6h-1zM673 324h1v6h-1zM134 353h584v1h-584zM134 491h584v1h-584zM141 353h1v139h-1zM707 353h1v139h-1zM178 353h1v6h-1zM178 486h1v6h-1zM214 353h1v10h-1zM214 482h1v10h-1zM249 353h1v6h-1zM249 486h1v6h-1zM284 353h1v10h-1zM284 482h1v10h-1zM320 353h1v6h-1zM320 486h1v6h-1zM355 353h1v10h-1zM355 482h1v10h-1zM390 353h1v6h-1zM390 486h1v6h-1zM426 353h1v10h-1zM426 482h1v10h-1zM461 353h1v6h-1zM461 486h1v6h-1zM497 353h1v10h-1zM497 482h1v10h-1zM532 353h1v6h-1zM532 486h1v6h-1zM567 353h1v10h-1zM567 482h1v10h-1zM603 353h1v6h-1zM603 486h1v6h-1zM638 353h1v10h-1zM638 482h1v10h-1zM673 353h1v6h-1zM673 486h1v6h-1zM133 502h586v1h-586zM133 639h586v1h-586zM142 502h1v138h-1zM708 502h1v138h-1zM178 502h1v6h-1zM178 634h1v6h-1zM214 502h1v10h-1zM214 630h1v10h-1zM249 502h1v6h-1zM249 634h1v6h-1zM284 502h1v10h-1zM284 630h1v10h-1zM320 502h1v6h-1zM320 634h1v6h-1zM355 502h1v10h-1zM355 630h1v10h-1zM390 502h1v6h-1zM390 634h1v6h-1zM426 502h1v10h-1zM426 630h1v10h-1zM461 502h1v6h-1zM461 634h1v6h-1zM497 502h1v10h-1zM497 630h1v10h-1zM532 502h1v6h-1zM532 634h1v6h-1zM567 502h1v10h-1zM567 630h1v10h-1zM603 502h1v6h-1zM603 634h1v6h-1zM638 502h1v10h-1zM638 630h1v10h-1zM673 502h1v6h-1zM673 634h1v6h-1zM132 180h10v1h-10zM135 166h7v1h-7zM135 158h7v1h-7zM135 152h7v1h-7zM135 148h7v1h-7zM135 144h7v1h-7zM135 141h7v1h-7zM135 138h7v1h-7zM135 136h7v1h-7zM132 134h10v1h-10zM135 120h7v1h-7zM135 112h7v1h-7zM135 106h7v1h-7zM135 102h7v1h-7zM135 98h7v1h-7zM135 95h7v1h-7zM135 92h7v1h-7zM135 90h7v1h-7zM132 88h10v1h-10zM135 74h7v1h-7zM135 66h7v1h-7zM135 60h7v1h-7zM135 56h7v1h-7zM135 52h7v1h-7zM135 49h7v1h-7zM135 46h7v1h-7zM135 44h7v1h-7zM132 42h10v1h-10zM133 329h10v1h-10zM136 315h7v1h-7zM136 307h7v1h-7zM136 301h7v1h-7zM136 297h7v1h-7zM136 293h7v1h-7zM136 290h7v1h-7zM136 287h7v1h-7zM136 285h7v1h-7zM133 283h10v1h-10zM136 269h7v1h-7zM136 261h7v1h-7zM136 255h7v1h-7zM136 251h7v1h-7zM136 247h7v1h-7zM136 244h7v1h-7zM136 241h7v1h-7zM136 239h7v1h-7zM133 237h10v1h-10zM136 223h7v1h-7zM136 215h7v1h-7zM136 209h7v1h-7zM136 205h7v1h-7zM136 201h7v1h-7zM136 198h7v1h-7zM136 195h7v1h-7zM136 193h7v1h-7zM133 191h10v1h-10zM135 488h7v1h-7zM135 486h7v1h-7zM135 484h7v1h-7zM135 482h7v1h-7zM132 480h10v1h-10zM135 470h7v1h-7zM135 464h7v1h-7zM135 459h7v1h-7zM135 456h7v1h-7zM135 453h7v1h-7zM135 451h7v1h-7zM135 449h7v1h-7zM135 447h7v1h-7zM132 445h10v1h-10zM135 435h7v1h-7zM135 428h7v1h-7zM135 424h7v1h-7zM135 421h7v1h-7zM135 418h7v1h-7zM135 415h7v1h-7zM135 413h7v1h-7zM135 412h7v1h-7zM132 410h10v1h-10zM135 399h7v1h-7zM135 393h7v1h-7zM135 389h7v1h-7zM135 385h7v1h-7zM135 382h7v1h-7zM135 380h7v1h-7zM135 378h7v1h-7zM135 376h7v1h-7zM132 375h10v1h-10zM135 364h7v1h-7zM135 358h7v1h-7zM135 353h7v1h-7zM133 639h10v1h-10zM136 636h7v1h-7zM136 634h7v1h-7zM136 631h7v1h-7zM136 628h7v1h-7zM136 625h7v1h-7zM136 623h7v1h-7zM136 620h7v1h-7zM136 617h7v1h-7zM136 614h7v1h-7zM133 612h10v1h-10zM136 609h7v1h-7zM136 606h7v1h-7zM136 603h7v1h-7zM136 601h7v1h-7zM136 598h7v1h-7zM136 595h7v1h-7zM136 592h7v1h-7zM136 590h7v1h-7zM136 587h7v1h-7zM133 584h10v1h-10zM136 581h7v1h-7zM136 579h7v1h-7zM136 576h7v1h-7zM136 573h7v1h-7zM136 570h7v1h-7zM136 568h7v1h-7zM136 565h7v1h-7zM136 562h7v1h-7zM136 560h7v1h-7zM133 557h10v1h-10zM136 554h7v1h-7zM136 551h7v1h-7zM136 549h7v1h-7zM136 546h7v1h-7zM136 543h7v1h-7zM136 540h7v1h-7zM136 538h7v1h-7zM136 535h7v1h-7zM136 532h7v1h-7zM133 529h10v1h-10zM136 527h7v1h-7zM136 524h7v1h-7zM136 521h7v1h-7zM136 518h7v1h-7zM136 516h7v1h-7zM136 513h7v1h-7zM136 510h7v1h-7zM136 507h7v1h-7zM136 505h7v1h-7zM133 502h10v1h-10zM707 180h11v1h-11zM707 177h8v1h-8zM707 174h8v1h-8zM707 171h8v1h-8zM707 168h8v1h-8zM707 165h8v1h-8zM707 162h8v1h-8zM707 159h8v1h-8zM707 155h8v1h-8zM707 152h11v1h-11zM707 149h8v1h-8zM707 146h8v1h-8zM707 143h8v1h-8zM707 140h8v1h-8zM707 137h8v1h-8zM707 134h8v1h-8zM707 131h8v1h-8zM707 128h8v1h-8zM707 125h11v1h-11zM707 122h8v1h-8zM707 119h8v1h-8zM707 116h8v1h-8zM707 113h8v1h-8zM707 109h8v1h-8zM707 106h8v1h-8zM707 103h8v1h-8zM707 100h8v1h-8zM707 97h11v1h-11zM707 94h8v1h-8zM707 91h8v1h-8zM707 88h8v1h-8zM707 85h8v1h-8zM707 82h8v1h-8zM707 79h8v1h-8zM707 76h8v1h-8zM707 73h8v1h-8zM707 70h11v1h-11zM707 67h8v1h-8zM707 63h8v1h-8zM707 60h8v1h-8zM707 57h8v1h-8zM707 54h8v1h-8zM707 51h8v1h-8zM707 48h8v1h-8zM707 45h8v1h-8zM707 42h11v1h-11zM708 329h11v1h-11zM708 326h8v1h-8zM708 323h8v1h-8zM708 321h8v1h-8zM708 318h8v1h-8zM708 315h8v1h-8zM708 312h8v1h-8zM708 310h8v1h-8zM708 307h8v1h-8zM708 304h8v1h-8zM708 301h11v1h-11zM708 299h8v1h-8zM708 296h8v1h-8zM708 293h8v1h-8zM708 290h8v1h-8zM708 288h8v1h-8zM708 285h8v1h-8zM708 282h8v1h-8zM708 279h8v1h-8zM708 277h8v1h-8zM708 274h11v1h-11zM708 271h8v1h-8zM708 268h8v1h-8zM708 266h8v1h-8zM708 263h8v1h-8zM708 260h8v1h-8zM708 257h8v1h-8zM708 254h8v1h-8zM708 252h8v1h-8zM708 249h8v1h-8zM708 246h11v1h-11zM708 243h8v1h-8zM708 241h8v1h-8zM708 238h8v1h-8zM708 235h8v1h-8zM708 232h8v1h-8zM708 230h8v1h-8zM708 227h8v1h-8zM708 224h8v1h-8zM708 221h8v1h-8zM708 219h11v1h-11zM708 216h8v1h-8zM708 213h8v1h-8zM708 210h8v1h-8zM708 208h8v1h-8zM708 205h8v1h-8zM708 202h8v1h-8zM708 199h8v1h-8zM708 197h8v1h-8zM708 194h8v1h-8zM708 191h11v1h-11zM707 491h11v1h-11zM707 488h8v1h-8zM707 485h8v1h-8zM707 483h8v1h-8zM707 480h8v1h-8zM707 477h8v1h-8zM707 474h8v1h-8zM707 472h8v1h-8zM707 469h8v1h-8zM707 466h8v1h-8zM707 463h11v1h-11zM707 461h8v1h-8zM707 458h8v1h-8zM707 455h8v1h-8zM707 452h8v1h-8zM707 450h8v1h-8zM707 447h8v1h-8zM707 444h8v1h-8zM707 441h8v1h-8zM707 439h8v1h-8zM707 436h11v1h-11zM707 433h8v1h-8zM707 430h8v1h-8zM707 428h8v1h-8zM707 425h8v1h-8zM707 422h8v1h-8zM707 419h8v1h-8zM707 416h8v1h-8zM707 414h8v1h-8zM707 411h8v1h-8zM707 408h11v1h-11zM707 405h8v1h-8zM707 403h8v1h-8zM707 400h8v1h-8zM707 397h8v1h-8zM707 394h8v1h-8zM707 392h8v1h-8zM707 389h8v1h-8zM707 386h8v1h-8zM707 383h8v1h-8zM707 381h11v1h-11zM707 378h8v1h-8zM707 375h8v1h-8zM707 372h8v1h-8zM707 370h8v1h-8zM707 367h8v1h-8zM707 364h8v1h-8zM707 361h8v1h-8zM707 359h8v1h-8zM707 356h8v1h-8zM707 353h11v1h-11zM708 639h11v1h-11zM708 636h8v1h-8zM708 634h8v1h-8zM708 631h8v1h-8zM708 628h8v1h-8zM708 625h8v1h-8zM708 623h8v1h-8zM708 620h8v1h-8zM708 617h8v1h-8zM708 614h8v1h-8zM708 612h11v1h-11zM708 609h8v1h-8zM708 606h8v1h-8zM708 603h8v1h-8zM708 601h8v1h-8zM708 598h8v1h-8zM708 595h8v1h-8zM708 592h8v1h-8zM708 590h8v1h-8zM708 587h8v1h-8zM708 584h11v1h-11zM708 581h8v1h-8zM708 579h8v1h-8zM708 576h8v1h-8zM708 573h8v1h-8zM708 570h8v1h-8zM708 568h8v1h-8zM708 565h8v1h-8zM708 562h8v1h-8zM708 560h8v1h-8zM708 557h11v1h-11zM708 554h8v1h-8zM708 551h8v1h-8zM708 549h8v1h-8zM708 546h8v1h-8zM708 543h8v1h-8zM708 540h8v1h-8zM708 538h8v1h-8zM708 535h8v1h-8zM708 532h8v1h-8zM708 529h11v1h-11zM708 527h8v1h-8zM708 524h8v1h-8zM708 521h8v1h-8zM708 518h8v1h-8zM708 516h8v1h-8zM708 513h8v1h-8zM708 510h8v1h-8zM708 507h8v1h-8zM708 505h8v1h-8zM708 502h11v1h-11zM890 170h8v1h-8zM892 156h6v1h-6zM892 148h6v1h-6zM892 143h6v1h-6zM892 138h6v1h-6zM892 135h6v1h-6zM892 132h6v1h-6zM892 129h6v1h-6zM892 127h6v1h-6zM890 125h8v1h-8zM892 111h6v1h-6zM892 103h6v1h-6zM892 98h6v1h-6zM892 93h6v1h-6zM892 90h6v1h-6zM892 87h6v1h-6zM892 84h6v1h-6zM892 82h6v1h-6zM890 80h8v1h-8zM892 66h6v1h-6zM892 58h6v1h-6zM892 52h6v1h-6zM877 481h8v1h-8zM879 472h6v1h-6zM879 467h6v1h-6zM879 463h6v1h-6zM879 460h6v1h-6zM879 457h6v1h-6zM879 455h6v1h-6zM879 454h6v1h-6zM879 452h6v1h-6zM877 451h8v1h-8zM879 442h6v1h-6zM879 436h6v1h-6zM879 433h6v1h-6zM879 430h6v1h-6zM879 427h6v1h-6zM879 425h6v1h-6zM879 423h6v1h-6zM879 422h6v1h-6zM877 420h8v1h-8zM879 411h6v1h-6zM879 406h6v1h-6zM879 402h6v1h-6zM879 399h6v1h-6zM879 397h6v1h-6zM879 395h6v1h-6zM879 393h6v1h-6zM879 392h6v1h-6zM877 390h8v1h-8zM879 381h6v1h-6zM879 376h6v1h-6zM879 372h6v1h-6zM879 369h6v1h-6zM879 367h6v1h-6zM879 365h6v1h-6zM879 363h6v1h-6zM879 361h6v1h-6z"/></g>
<g shape-rendering="crispEdges">
<polyline points="142.5,79.0 145.6,72.1 148.4,66.1 151.0,73.1 154.5,76.0 156.5,73.5 160.1,78.2 165.1,86.4 168.3,102.2 170.1,107.5 175.1,104.5 180.2,107.3 185.2,110.3 189.2,114.0 193.5,119.0 200.5,119.2 204.3,117.3 209.3,114.3 212.5,115.5 216.0,113.0 219.3,112.0 223.6,118.8 228.4,118.0 233.5,118.9 236.4,110.5 239.4,111.3 242.4,114.5 245.8,109.5 249.3,114.2 255.5,113.5 258.0,113.3 262.0,115.3 268.1,118.0 274.1,117.3 290.2,115.5 310.2,112.3 330.3,109.9 350.4,107.3 360.0,105.5 374.1,104.7 379.1,103.9 384.1,115.3 388.1,118.7 394.1,109.3 399.2,113.3 402.6,110.3 409.2,118.7 414.2,112.3 420.2,109.3 424.7,110.3 429.3,115.3 433.3,102.2 435.9,98.2 439.3,108.3 442.3,111.3 446.7,105.3 450.4,103.9 455.4,111.3 459.4,112.3 464.4,105.3 469.4,104.3 473.8,98.2 477.2,106.3 480.0,117.3 485.1,121.3 490.1,126.3 495.1,133.4 499.1,131.4 503.1,133.4 510.2,136.4 517.2,139.4 523.2,134.4 526.8,130.4 530.2,135.4 534.3,141.4 540.3,128.4 543.3,133.4 549.3,140.4 552.3,138.4 561.4,129.4 566.4,133.4 572.4,134.4 579.4,136.4 584.5,131.4 590.1,133.8 595.0,138.4 601.0,135.4 606.1,133.4 611.1,137.4 618.1,138.4 623.1,144.4 630.2,143.4 637.2,142.4 648.2,139.4 654.3,140.4 660.3,147.4 665.3,146.4 674.3,145.4 684.4,146.4 688.0,151.4 690.4,145.4 695.4,142.4 699.4,148.4 705.5,150.4 707.5,151.4" fill="none" stroke="#fff" stroke-width="1"/>
<polyline points="143.6,252.3 145.0,243.4 147.5,249.3 150.9,243.8 154.2,254.2 157.4,247.3 161.3,243.4 164.7,250.3 166.7,250.9 168.7,244.3 172.6,256.2 176.6,253.2 180.5,253.2 183.1,249.3 185.1,240.4 186.4,225.6 187.4,209.8 189.4,205.8 192.4,204.2 194.3,206.8 198.9,201.5 202.3,211.7 204.8,212.7 206.2,209.8 208.2,216.7 210.8,204.2 214.1,211.7 218.1,220.6 220.0,218.7 222.6,225.2 225.0,211.3 227.4,218.7 229.9,212.7 232.9,215.7 236.8,215.3 239.0,216.7 242.9,216.7 245.9,225.2 248.4,220.0 252.8,220.6 258.7,222.6 260.7,216.1 263.1,225.2 265.6,222.6 267.6,216.1 270.6,225.6 274.5,221.2 277.5,224.0 280.1,221.2 282.4,224.6 286.8,222.6 291.3,226.6 296.7,229.1 301.2,220.0 305.8,229.1 308.1,221.2 312.1,222.6 315.0,232.5 319.0,227.5 322.0,227.9 324.9,222.6 327.9,224.0 331.8,220.6 335.9,220.6 340.9,219.2 346.8,223.2 350.8,220.6 355.7,220.6 358.3,215.7 361.2,222.6 362.6,219.6 365.6,224.0 370.1,219.6 373.1,227.5 376.4,220.6 379.4,218.7 381.8,224.0 384.9,214.1 388.3,222.6 393.2,223.2 397.2,221.2 402.1,223.6 408.1,226.6 412.0,220.6 415.4,218.3 419.9,224.0 423.9,224.0 426.8,221.2 429.9,227.2 431.9,221.6 435.9,220.6 439.2,218.7 442.8,226.6 446.3,221.2 449.1,225.6 454.2,222.0 458.6,225.6 461.2,230.1 466.5,229.5 470.8,230.1 473.0,223.6 476.8,225.6 479.9,222.0 483.3,227.5 486.9,231.5 490.2,227.5 493.8,229.5 496.1,223.2 499.1,230.1 504.0,233.5 508.0,230.5 513.9,236.4 517.9,233.1 521.8,236.4 524.0,235.5 527.5,231.5 530.9,237.4 534.8,242.4 537.8,234.5 540.8,238.4 544.1,230.5 547.7,233.9 549.6,238.4 551.6,236.4 554.0,243.0 556.6,235.5 560.5,243.0 563.1,231.5 565.8,241.4 569.4,242.4 574.9,231.5 579.3,238.4 585.2,238.4 590.8,241.8 598.1,232.5 605.0,244.3 609.9,235.1 612.9,243.0 616.8,239.4 619.0,247.3 621.9,247.3 624.9,245.3 628.8,251.7 631.8,246.3 635.8,242.4 637.7,249.3 640.7,251.7 645.6,248.3 651.6,252.8 657.5,260.8 662.4,258.2 664.8,260.2 666.8,249.3 669.3,259.2 673.7,268.1 676.3,265.1 679.2,253.2 682.2,258.2 683.8,276.0 686.1,270.0 689.1,268.7 693.1,255.2 695.4,243.4 697.6,267.1 700.0,286.8 702.0,282.9 704.9,263.1 707.5,255.2" fill="none" stroke="#f00" stroke-width="1"/>
<polyline points="143.6,302.3 148.9,297.3 153.8,300.3 159.8,299.1 165.7,303.6 170.5,306.0 175.6,308.2 180.5,307.6 184.5,302.6 186.4,288.8 188.4,269.1 191.0,251.3 193.8,247.3 196.3,253.2 197.9,259.2 202.3,251.7 205.2,257.2 209.2,259.6 212.1,268.1 214.7,263.5 217.1,265.1 219.1,276.0 221.0,278.0 225.0,269.1 228.9,266.1 232.9,264.7 236.8,267.5 240.9,265.1 245.3,281.3 248.8,271.0 252.4,259.2 254.8,266.1 257.1,275.4 259.7,269.1 264.6,265.1 267.6,268.5" fill="none" stroke="#0f0" stroke-width="1"/>
<polyline points="379.4,262.5 383.4,263.1 386.3,266.1 389.9,272.0 394.2,266.1 398.8,261.1 401.1,268.1 404.1,278.9 406.1,276.0 410.0,275.4 413.6,264.7 417.9,275.4 420.5,271.0 422.9,274.0 426.8,281.3 428.0,282.5 431.9,277.0 434.9,266.1 437.3,257.6 439.8,269.1 441.8,276.6 444.8,271.0 448.7,269.1 451.7,268.1 454.2,269.1 457.6,258.2 461.6,248.3 463.9,245.3 467.5,248.9 470.5,248.3 474.4,254.2 478.4,258.2 482.3,262.7 484.9,271.0 487.3,268.1 490.2,258.2 493.8,252.3 496.1,257.2 499.1,265.1 501.1,267.1 505.6,258.2 509.0,260.2 512.9,262.1 515.9,257.2 519.5,256.2 522.4,263.1 526.9,253.6 531.9,252.8 534.8,255.2 539.8,252.8 544.1,246.9 546.7,255.2 548.7,254.2 551.2,243.4 553.6,245.3 557.9,264.7 560.5,254.2 564.5,261.1 569.4,243.8 572.4,247.3 574.9,256.2 579.3,237.4 582.3,253.2 585.2,260.2 590.2,246.9 595.1,259.2 600.0,248.3 607.0,256.2 612.5,246.9 614.9,249.3 618.6,262.1 622.9,240.4 625.9,238.4 630.8,245.3 634.8,248.3 639.7,242.4 644.6,239.4 649.0,245.3 653.5,239.4 656.5,241.4 662.4,235.5 666.8,242.4 671.3,247.3 676.3,239.4 680.6,239.0 685.2,262.1 688.1,255.2 692.1,232.5 695.0,236.4 698.0,263.1 701.6,281.9 703.9,265.1 705.9,231.5 707.5,227.2" fill="none" stroke="#0f0" stroke-width="1"/>
<polyline points="142.5,521.4 213.5,536.0 284.4,549.4 355.6,563.6 426.0,577.0 497.6,589.3 568.5,601.0 638.9,611.6 708.0,620.1" fill="none" stroke="#fff" stroke-width="1"/>
<polyline points="142.5,632.1 180.0,631.3 213.5,629.8 250.0,627.2 284.4,623.9 320.0,620.2 355.6,615.7 390.0,611.0 426.0,605.5 460.0,599.0 497.6,590.2 535.0,580.0 568.5,569.7 605.0,557.5 638.9,544.8 675.0,530.0 708.0,514.9" fill="none" stroke="#00e8e8" stroke-width="1"/>
<polyline points="141.5,445.3 145.3,445.3 146.7,436.1 152.4,436.1 153.8,426.9 159.5,426.9 161.0,417.7 166.7,417.7 168.1,408.5 173.8,408.5 175.2,399.3 180.9,399.3 182.3,390.1 188.0,390.1 189.4,380.9 195.1,380.9 196.5,371.7 202.2,371.7 203.6,362.5 209.3,362.5 210.7,353.5 216.4,353.5 217.8,490.5 223.5,490.5 224.9,482.1 230.6,482.1 232.0,472.9 237.7,472.9 239.1,463.7 244.8,463.7 246.2,454.5 251.9,454.5 253.3,445.3 259.0,445.3 260.4,436.1 266.1,436.1 267.5,426.9 273.2,426.9 274.7,417.7 280.4,417.7 281.8,408.5 287.5,408.5 288.9,399.3 294.6,399.3 296.0,390.1 301.7,390.1 303.1,380.9 308.8,380.9 310.2,371.7 315.9,371.7 317.3,362.5 323.0,362.5 324.4,353.5 330.1,353.5 331.5,490.5 337.2,490.5 338.6,482.1 344.3,482.1 345.7,472.9 351.4,472.9 352.8,463.7 358.5,463.7 359.9,454.5 365.6,454.5 367.0,445.3 372.7,445.3 374.1,436.1 379.8,436.1 381.2,426.9 386.9,426.9 388.4,417.7 394.1,417.7 395.5,408.5 401.2,408.5 402.6,399.3 408.3,399.3 409.7,390.1 415.4,390.1 416.8,380.9 422.5,380.9 423.9,371.7 429.6,371.7 431.0,362.5 436.7,362.5 438.1,353.5 443.8,353.5 445.2,490.5 450.9,490.5 452.3,482.1 458.0,482.1 459.4,472.9 465.1,472.9 466.5,463.7 472.2,463.7 473.6,454.5 479.3,454.5 480.7,445.3 486.4,445.3 487.8,436.1 493.5,436.1 494.9,426.9 500.6,426.9 502.1,417.7 507.8,417.7 509.2,408.5 514.9,408.5 516.3,399.3 522.0,399.3 523.4,390.1 529.1,390.1 530.5,380.9 536.2,380.9 537.6,371.7 543.3,371.7 544.7,362.5 550.4,362.5 551.8,353.5 557.5,353.5 558.9,490.5 564.6,490.5 566.0,482.1 571.7,482.1 573.1,472.9 578.8,472.9 580.2,463.7 585.9,463.7 587.3,454.5 593.0,454.5 594.4,445.3 600.1,445.3 601.5,436.1 607.2,436.1 608.6,426.9 614.3,426.9 615.8,417.7 621.5,417.7 622.9,408.5 628.6,408.5 630.0,399.3 635.7,399.3 637.1,390.1 642.8,390.1 644.2,380.9 649.9,380.9 651.3,371.7 657.0,371.7 658.4,362.5 664.1,362.5 665.5,353.5 671.2,353.5 672.6,490.5 678.3,490.5 679.7,482.1 685.4,482.1 686.8,472.9 692.5,472.9 693.9,463.7 699.6,463.7 701.0,454.5 706.7,454.5" fill="none" stroke="#fff" stroke-width="1"/>
</g>
<g fill="#fff">
<text x="142" y="16.6" font-size="15.5" textLength="126" lengthAdjust="spacing">VEx ELS-06 LR</text>
<text x="142" y="36.7" font-size="15.5" textLength="127" lengthAdjust="spacing">VEx ELS-06 HR</text>
<text x="142" y="347.3" font-size="15.5" textLength="97" lengthAdjust="spacing">VEx IMA-00</text>
<text x="129" y="46" font-size="12" text-anchor="end" letter-spacing="0.3">10<tspan font-size="8" dy="-7.5" letter-spacing="0">3</tspan></text>
<text x="129" y="92" font-size="12" text-anchor="end" letter-spacing="0.3">10<tspan font-size="8" dy="-7.5" letter-spacing="0">2</tspan></text>
<text x="129" y="138" font-size="12" text-anchor="end" letter-spacing="0.3">10<tspan font-size="8" dy="-7.5" letter-spacing="0">1</tspan></text>
<text x="131.5" y="194.8" font-size="12" text-anchor="end" letter-spacing="0.3">10<tspan font-size="8" dy="-7.5" letter-spacing="2">-3</tspan></text>
<text x="131.5" y="240.8" font-size="12" text-anchor="end" letter-spacing="0.3">10<tspan font-size="8" dy="-7.5" letter-spacing="2">-4</tspan></text>
<text x="131.5" y="286.8" font-size="12" text-anchor="end" letter-spacing="0.3">10<tspan font-size="8" dy="-7.5" letter-spacing="2">-5</tspan></text>
<text x="129" y="378.6" font-size="12" text-anchor="end" letter-spacing="0.3">10<tspan font-size="8" dy="-7.5" letter-spacing="0">4</tspan></text>
<text x="129" y="413.9" font-size="12" text-anchor="end" letter-spacing="0.3">10<tspan font-size="8" dy="-7.5" letter-spacing="0">3</tspan></text>
<text x="129" y="449.2" font-size="12" text-anchor="end" letter-spacing="0.3">10<tspan font-size="8" dy="-7.5" letter-spacing="0">2</tspan></text>
<text x="128" y="505.8" font-size="12" text-anchor="end" textLength="31" lengthAdjust="spacing">5000</text>
<text x="128" y="533.1999999999999" font-size="12" text-anchor="end" textLength="31" lengthAdjust="spacing">4000</text>
<text x="128" y="560.5999999999999" font-size="12" text-anchor="end" textLength="31" lengthAdjust="spacing">3000</text>
<text x="128" y="588.0" font-size="12" text-anchor="end" textLength="31" lengthAdjust="spacing">2000</text>
<text x="128" y="615.4" font-size="12" text-anchor="end" textLength="31" lengthAdjust="spacing">1000</text>
<text x="128" y="642.8" font-size="12" text-anchor="end">0</text>
<text x="720" y="46.0" font-size="12" textLength="21.5" lengthAdjust="spacing">180</text>
<text x="720" y="73.6" font-size="12" textLength="21.5" lengthAdjust="spacing">144</text>
<text x="720" y="101.2" font-size="12" textLength="21.5" lengthAdjust="spacing">108</text>
<text x="720" y="128.8" font-size="12" textLength="14" lengthAdjust="spacing">72</text>
<text x="720" y="156.4" font-size="12" textLength="14" lengthAdjust="spacing">36</text>
<text x="722" y="195.0" font-size="12" textLength="15" lengthAdjust="spacing">50</text>
<text x="722" y="222.6" font-size="12" textLength="15" lengthAdjust="spacing">40</text>
<text x="722" y="250.2" font-size="12" textLength="15" lengthAdjust="spacing">30</text>
<text x="722" y="277.8" font-size="12" textLength="15" lengthAdjust="spacing">20</text>
<text x="722" y="305.4" font-size="12" textLength="15" lengthAdjust="spacing">10</text>
<text x="721" y="357.0" font-size="12" textLength="15" lengthAdjust="spacing">15</text>
<text x="721" y="384.6" font-size="12" textLength="15" lengthAdjust="spacing">12</text>
<text x="721" y="412.2" font-size="12">9</text>
<text x="721" y="439.8" font-size="12">6</text>
<text x="721" y="467.4" font-size="12">3</text>
<text x="722" y="506.0" font-size="12" textLength="15" lengthAdjust="spacing">72</text>
<text x="722" y="533.4" font-size="12" textLength="15" lengthAdjust="spacing">68</text>
<text x="722" y="560.8" font-size="12" textLength="15" lengthAdjust="spacing">64</text>
<text x="722" y="588.2" font-size="12" textLength="15" lengthAdjust="spacing">60</text>
<text x="722" y="615.6" font-size="12" textLength="15" lengthAdjust="spacing">56</text>
<text x="722" y="643.0" font-size="12" textLength="15" lengthAdjust="spacing">52</text>
<text x="142.3" y="653" font-size="12.5" text-anchor="middle" textLength="34" lengthAdjust="spacing">06:50</text>
<text x="142.3" y="668" font-size="12.5" text-anchor="middle" textLength="30" lengthAdjust="spacing">61.89</text>
<text x="142.3" y="683" font-size="12.5" text-anchor="middle" textLength="31" lengthAdjust="spacing">15.52</text>
<text x="142.3" y="698" font-size="12.5" text-anchor="middle" textLength="34" lengthAdjust="spacing">90.50</text>
<text x="213.25" y="653" font-size="12.5" text-anchor="middle" textLength="34" lengthAdjust="spacing">06:52</text>
<text x="213.25" y="668" font-size="12.5" text-anchor="middle" textLength="30" lengthAdjust="spacing">61.89</text>
<text x="213.25" y="683" font-size="12.5" text-anchor="middle" textLength="31" lengthAdjust="spacing">15.53</text>
<text x="213.25" y="698" font-size="12.5" text-anchor="middle" textLength="34" lengthAdjust="spacing">90.50</text>
<text x="284.20000000000005" y="653" font-size="12.5" text-anchor="middle" textLength="34" lengthAdjust="spacing">06:54</text>
<text x="284.20000000000005" y="668" font-size="12.5" text-anchor="middle" textLength="30" lengthAdjust="spacing">61.89</text>
<text x="284.20000000000005" y="683" font-size="12.5" text-anchor="middle" textLength="31" lengthAdjust="spacing">15.54</text>
<text x="284.20000000000005" y="698" font-size="12.5" text-anchor="middle" textLength="34" lengthAdjust="spacing">90.50</text>
<text x="355.15000000000003" y="653" font-size="12.5" text-anchor="middle" textLength="34" lengthAdjust="spacing">06:56</text>
<text x="355.15000000000003" y="668" font-size="12.5" text-anchor="middle" textLength="30" lengthAdjust="spacing">61.89</text>
<text x="355.15000000000003" y="683" font-size="12.5" text-anchor="middle" textLength="31" lengthAdjust="spacing">15.55</text>
<text x="355.15000000000003" y="698" font-size="12.5" text-anchor="middle" textLength="34" lengthAdjust="spacing">90.51</text>
<text x="426.1" y="653" font-size="12.5" text-anchor="middle" textLength="34" lengthAdjust="spacing">06:58</text>
<text x="426.1" y="668" font-size="12.5" text-anchor="middle" textLength="30" lengthAdjust="spacing">61.89</text>
<text x="426.1" y="683" font-size="12.5" text-anchor="middle" textLength="31" lengthAdjust="spacing">15.56</text>
<text x="426.1" y="698" font-size="12.5" text-anchor="middle" textLength="34" lengthAdjust="spacing">90.51</text>
<text x="497.05" y="653" font-size="12.5" text-anchor="middle" textLength="34" lengthAdjust="spacing">07:00</text>
<text x="497.05" y="668" font-size="12.5" text-anchor="middle" textLength="30" lengthAdjust="spacing">61.89</text>
<text x="497.05" y="683" font-size="12.5" text-anchor="middle" textLength="31" lengthAdjust="spacing">15.58</text>
<text x="497.05" y="698" font-size="12.5" text-anchor="middle" textLength="34" lengthAdjust="spacing">90.51</text>
<text x="568.0" y="653" font-size="12.5" text-anchor="middle" textLength="34" lengthAdjust="spacing">07:02</text>
<text x="568.0" y="668" font-size="12.5" text-anchor="middle" textLength="30" lengthAdjust="spacing">61.89</text>
<text x="568.0" y="683" font-size="12.5" text-anchor="middle" textLength="31" lengthAdjust="spacing">15.60</text>
<text x="568.0" y="698" font-size="12.5" text-anchor="middle" textLength="34" lengthAdjust="spacing">90.52</text>
<text x="638.95" y="653" font-size="12.5" text-anchor="middle" textLength="34" lengthAdjust="spacing">07:04</text>
<text x="638.95" y="668" font-size="12.5" text-anchor="middle" textLength="30" lengthAdjust="spacing">61.89</text>
<text x="638.95" y="683" font-size="12.5" text-anchor="middle" textLength="31" lengthAdjust="spacing">15.63</text>
<text x="638.95" y="698" font-size="12.5" text-anchor="middle" textLength="34" lengthAdjust="spacing">90.52</text>
<text x="709.9000000000001" y="653" font-size="12.5" text-anchor="middle" textLength="34" lengthAdjust="spacing">07:06</text>
<text x="709.9000000000001" y="668" font-size="12.5" text-anchor="middle" textLength="30" lengthAdjust="spacing">61.89</text>
<text x="709.9000000000001" y="683" font-size="12.5" text-anchor="middle" textLength="31" lengthAdjust="spacing">15.67</text>
<text x="709.9000000000001" y="698" font-size="12.5" text-anchor="middle" textLength="34" lengthAdjust="spacing">90.52</text>
<text x="107" y="653" font-size="12.5" text-anchor="end" textLength="55" lengthAdjust="spacing">2010/201</text>
<text x="107" y="668" font-size="12.5" text-anchor="end" textLength="92" lengthAdjust="spacing">V-E Ang (deg)</text>
<text x="107" y="683" font-size="12.5" text-anchor="end" textLength="50" lengthAdjust="spacing">LST (hr)</text>
<text x="107" y="698" font-size="12.5" text-anchor="end" textLength="67" lengthAdjust="spacing">F10.7 (sfu)</text>
<text transform="translate(80.5 110) rotate(-90)" font-size="15" text-anchor="middle" textLength="115" lengthAdjust="spacing">Electron Energy</text>
<text transform="translate(94.5 111) rotate(-90)" font-size="15" text-anchor="middle" textLength="17" lengthAdjust="spacing">eV</text>
<text transform="translate(78 422) rotate(-90)" font-size="15" text-anchor="middle" textLength="106" lengthAdjust="spacing">Electron Volts</text>
<text transform="translate(93 422) rotate(-90)" font-size="15" text-anchor="middle" textLength="17" lengthAdjust="spacing">eV</text>
<text transform="translate(47 260) rotate(-90)" font-size="9" text-anchor="middle" fill="#f00" textLength="60" lengthAdjust="spacing" stroke="#f00" stroke-width="0.35">Sensor Data</text>
<text transform="translate(56.5 260) rotate(-90)" font-size="9" text-anchor="middle" fill="#f00" textLength="97" lengthAdjust="spacing" stroke="#f00" stroke-width="0.35">VEx ELS-06 LR-Bk</text>
<text transform="translate(66.5 260) rotate(-90)" font-size="9" text-anchor="middle" fill="#f00" textLength="79" lengthAdjust="spacing" stroke="#f00" stroke-width="0.35">Energy Intensity</text>
<text transform="translate(76 260) rotate(-90)" font-size="9" text-anchor="middle" fill="#f00" textLength="130" lengthAdjust="spacing" stroke="#f00" stroke-width="0.35">ergs/(cm**2-sr-sec-eV)</text>
<text transform="translate(86 260) rotate(-90)" font-size="9" text-anchor="middle" fill="#f00" textLength="79" lengthAdjust="spacing" stroke="#f00" stroke-width="0.35">SCAN: 20 - 150</text>
<text transform="translate(41 571) rotate(-90)" font-size="13.5" text-anchor="middle" textLength="84" lengthAdjust="spacing">Sensor Data</text>
<text transform="translate(54 571) rotate(-90)" font-size="13.5" text-anchor="middle" textLength="124" lengthAdjust="spacing">VEx Alt/Venus/Pd</text>
<text transform="translate(67 571) rotate(-90)" font-size="13.5" text-anchor="middle" textLength="56" lengthAdjust="spacing">Distance</text>
<text transform="translate(80.5 570) rotate(-90)" font-size="13.5" text-anchor="middle" textLength="20" lengthAdjust="spacing">km</text>
<text transform="translate(820 111) rotate(90)" font-size="15" text-anchor="middle" textLength="88" lengthAdjust="spacing">Pitch Angle</text>
<text transform="translate(805 111) rotate(90)" font-size="15" text-anchor="middle" textLength="121" lengthAdjust="spacing">VEx ELS-06 LR</text>
<text transform="translate(789.5 111) rotate(90)" font-size="15" text-anchor="middle" textLength="41" lengthAdjust="spacing">Angle</text>
<text transform="translate(774 111) rotate(90)" font-size="15" text-anchor="middle" textLength="58" lengthAdjust="spacing">degrees</text>
<text transform="translate(759 111) rotate(90)" font-size="15" text-anchor="middle" textLength="131" lengthAdjust="spacing">SCAN: 20 - 300</text>
<text transform="translate(804.5 260) rotate(90)" font-size="15" text-anchor="middle" fill="#0f0" textLength="98" lengthAdjust="spacing">Sensor Data</text>
<text transform="translate(788 260) rotate(90)" font-size="15" text-anchor="middle" fill="#0f0" textLength="51" lengthAdjust="spacing">S/C B</text>
<text transform="translate(773 260) rotate(90)" font-size="15" text-anchor="middle" fill="#0f0" textLength="77" lengthAdjust="spacing">Nanotesla</text>
<text transform="translate(757 260) rotate(90)" font-size="15" text-anchor="middle" fill="#0f0" textLength="18" lengthAdjust="spacing">nT</text>
<text transform="translate(798 422) rotate(90)" font-size="15" text-anchor="middle" textLength="39" lengthAdjust="spacing">Mode</text>
<text transform="translate(783.5 422) rotate(90)" font-size="15" text-anchor="middle" textLength="91" lengthAdjust="spacing">Polar Angle</text>
<text transform="translate(767.5 422) rotate(90)" font-size="15" text-anchor="middle" textLength="41.5" lengthAdjust="spacing">Index</text>
<text transform="translate(751.5 422) rotate(90)" font-size="15" text-anchor="middle" textLength="61" lengthAdjust="spacing">Unitless</text>
<text transform="translate(804 571) rotate(90)" font-size="15" text-anchor="middle" fill="#0ff" textLength="99" lengthAdjust="spacing">Sensor Data</text>
<text transform="translate(789 571) rotate(90)" font-size="15" text-anchor="middle" fill="#0ff" textLength="67.5" lengthAdjust="spacing">VEx SZA</text>
<text transform="translate(773 571) rotate(90)" font-size="15" text-anchor="middle" fill="#0ff" textLength="42" lengthAdjust="spacing">Angle</text>
<text transform="translate(758 571) rotate(90)" font-size="15" text-anchor="middle" fill="#0ff" textLength="62" lengthAdjust="spacing">degrees</text>
<text x="887" y="45" font-size="9" text-anchor="middle" textLength="8" lengthAdjust="spacing">El</text>
<text x="874.5" y="357" font-size="9" text-anchor="middle" textLength="17" lengthAdjust="spacing">DEF</text>
<text x="902" y="82.5" font-size="8" letter-spacing="0.3">10<tspan font-size="6" dy="-3" letter-spacing="0.9">-4</tspan></text>
<text x="902" y="127.5" font-size="8" letter-spacing="0.3">10<tspan font-size="6" dy="-3" letter-spacing="0.9">-5</tspan></text>
<text x="902" y="172.5" font-size="8" letter-spacing="0.3">10<tspan font-size="6" dy="-3" letter-spacing="0.9">-6</tspan></text>
<text x="889" y="363" font-size="8" letter-spacing="0.3">10<tspan font-size="6" dy="-3" letter-spacing="0.9">-4</tspan></text>
<text x="889" y="393.2" font-size="8" letter-spacing="0.3">10<tspan font-size="6" dy="-3" letter-spacing="0.9">-5</tspan></text>
<text x="889" y="423.5" font-size="8" letter-spacing="0.3">10<tspan font-size="6" dy="-3" letter-spacing="0.9">-6</tspan></text>
<text x="889" y="453.7" font-size="8" letter-spacing="0.3">10<tspan font-size="6" dy="-3" letter-spacing="0.9">-7</tspan></text>
<text x="889" y="484" font-size="8" letter-spacing="0.3">10<tspan font-size="6" dy="-3" letter-spacing="0.9">-8</tspan></text>
<text transform="translate(935 109.5) rotate(90)" font-size="9" text-anchor="middle" textLength="129" lengthAdjust="spacing" font-weight="bold">ergs/(cm**2-sr-sec-eV)</text>
<text transform="translate(923.5 420.5) rotate(90)" font-size="9" text-anchor="middle" textLength="129" lengthAdjust="spacing" font-weight="bold">ergs/(cm**2-sr-sec-eV)</text>
</g>
</svg>
</body></html>
